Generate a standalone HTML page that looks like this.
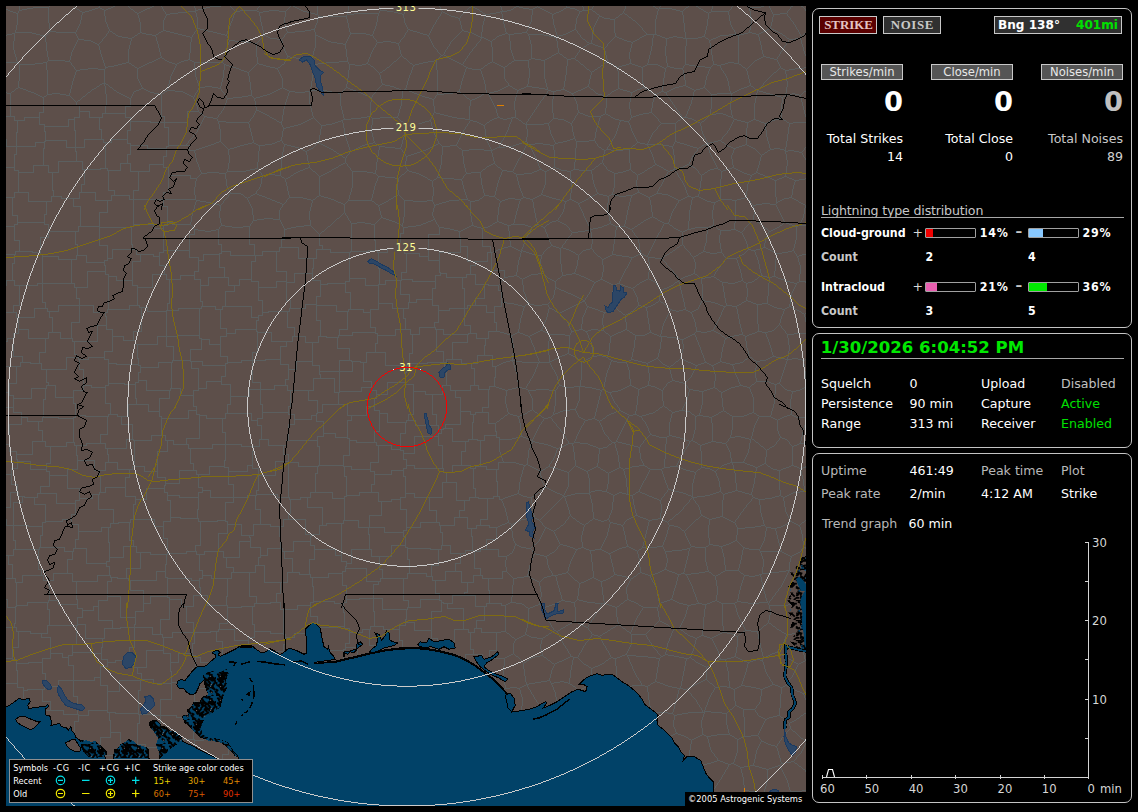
<!DOCTYPE html>
<html lang="en"><head><meta charset="utf-8"><title>Lightning Detector</title>
<style>
html,body{margin:0;padding:0;background:#000;}
body{width:1138px;height:812px;position:relative;overflow:hidden;font-family:'DejaVu Sans','Liberation Sans',sans-serif;}
.t{position:absolute;line-height:16px;white-space:nowrap;}
.pf{position:absolute;border:1px solid #c4c4c4;border-radius:7px;background:#000;}
.btn{position:absolute;border:1px solid #c8c8c8;}
.hl{position:absolute;height:1px;background:#a8a8a8;}
.bar{position:absolute;width:49px;height:8px;border:1px solid #a0a0a0;border-radius:1px;background:#000;}
.bar i{display:block;height:8px;}
#map{position:absolute;left:6px;top:6px;width:800px;height:800px;overflow:hidden;background:#5d4f4a;}
#map svg{position:absolute;left:0;top:0;}
</style></head>
<body>
<div id="map">
<svg width="800" height="800" viewBox="6 6 800 800">
<defs><pattern id="mp" width="24" height="24" patternUnits="userSpaceOnUse"><rect width="24" height="24" fill="#014268"/><path d="M7.8,3.6l-2,-2l2,-1M8.8,1.4l2.5,-1l-1.5,-1M10.4,1.7l-2,2.5l1,-1M19.8,3.0l-1.5,2.5l-1.5,2M14.1,1.2l-1.5,-2l2,-1M7.0,3.5l-2,2.5l1,2M19.6,4.3l2.5,2.5l2,-1M8.9,13.1l-2,2.5l-1.5,2M4.9,16.3l2,1l1,2M22.2,8.7l-1.5,-1l2,-1M2.0,7.2l2,1l2,1.5M6.9,23.5l-2,2.5l1,-1M18.2,3.6l2,2l-1.5,2M1.9,13.4l1.5,1l2,1.5M14.3,13.9l2,-2l-1.5,1.5M11.4,15.9l-2,1l2,2M23.8,19.7l1.5,2l2,1.5M0.5,11.1l-1.5,2.5l-1.5,1.5M1.4,18.4l-1.5,-1l1,1.5M22.0,11.9l-1.5,2l1,2M6.7,3.3l2,2.5l1,2M10.0,8.6l2,-1l-1.5,-1M4.2,5.6l-1.5,-2l1,2M4.4,6.8l-1.5,2l2,1.5M14.6,7.6l-1.5,2.5l2,2M16.2,1.3l2.5,2l1,1.5M9.5,11.6l2,-2l-1.5,-1M23.6,10.6l-2,1l2,-1M2.5,13.6l2.5,-2l1,2M0.6,21.0l2.5,2l-1.5,2M6.1,8.3l1.5,2l-1.5,-1M20.4,23.8l2,2l1,1.5M2.1,2.5l1.5,1l1,2M3.9,0.6l2.5,1l-1.5,2M13.0,0.6l2.5,1l2,-1M16.7,6.3l1.5,-1l1,-1M12.8,18.7l1.5,-1l2,-1M19.3,19.6l-1.5,-1l2,1.5M8.5,0.7l-2,1l1,1.5M4.6,14.5l1.5,2l2,1.5M22.9,8.8l-1.5,-2l-1.5,1.5M4.7,4.9l2.5,2.5l-1.5,1.5M21.8,8.3l-2,-2l1,2M18.0,11.5l-1.5,2l2,1.5M2.1,22.7l2,2l1,2M22.7,17.4l-1.5,-1l-1.5,-1M14.2,11.2l-1.5,2.5l2,1.5M15.8,8.4l2.5,2.5l-1.5,-1M0.3,23.3l-2,2.5l2,-1M10.4,20.9l-1.5,-2l1,-1M7.0,5.8l2.5,1l1,2M10.1,3.1l1.5,2l2,2" stroke="#000" stroke-width="2" fill="none" stroke-linecap="square"/><path d="M18.9,12.4h1M19.2,20.3h1M3.9,4.3h1M12.2,20.2h1M18.1,14.4h1M18.1,4.3h1M4.1,14.6h1" stroke="#7a6a64" stroke-width="1" fill="none"/></pattern><pattern id="mp2" width="20" height="20" patternUnits="userSpaceOnUse"><rect width="20" height="20" fill="#5d4f4a"/><path d="M2.4,1.2l3,-1l2,-2M5.0,5.5l-3,1l1,2M0.6,17.9l-3,0l1,2M19.5,12.1l-2,1l1,1.5M10.2,16.1l-2,1l2,1.5M18.5,17.9l-2,0l-2,1.5M2.4,8.8l-3,1l-2,1.5M1.5,13.4l-3,-1l2,2M13.2,2.9l-2,0l-2,2M19.1,8.0l3,-1l2,-2M3.2,8.6l3,0l1,-2M7.1,1.8l2,-1l1,2M9.2,14.1l3,0l2,2M5.9,19.2l-3,-1l-2,-2M5.3,0.8l-2,0l-2,1.5M17.0,13.5l2,0l-2,2M18.4,11.4l2,-1l1,-2M16.0,3.7l-3,0l-2,2M1.8,5.2l-2,-1l1,-2M9.1,6.8l3,0l2,-2M0.9,14.2l-3,-1l1,-2M3.6,18.6l2,1l-2,1.5M8.9,13.4l2,0l-2,1.5M0.7,0.4l-2,1l1,-2M18.7,2.1l3,1l1,2M16.7,7.9l2,1l-2,-2M6.9,16.6l-2,0l1,-2M16.7,0.3l2,0l-2,-2M1.7,16.8l2,1l-2,2M5.9,9.2l-2,0l1,-2" stroke="#000" stroke-width="1.8" fill="none" stroke-linecap="square"/><path d="M5.7,18.3h1.5M18.5,10.8h1.5M5.4,18.4h1.5M6.6,7.4h1.5M1.0,7.9h1.5M9.5,10.0h1.5M4.6,10.1h1.5M1.1,5.8h1.5M2.6,8.2h1.5" stroke="#0a5a8c" stroke-width="1.2" fill="none"/></pattern></defs>
<g fill="none" stroke="#5b5f5f" stroke-width="1" shape-rendering="crispEdges">
<path stroke-linecap="square" d="M221.5 251.5V244.5H218.5V229.5M221.5 251.5H230.5V255.5H254.5M254.5 255.5V244.5H249.5V226.5M198.5 260.5H203.5V254.5H219.5M198.5 260.5V271.5H194.5V275.5M194.5 275.5V279.5H200.5V285.5M200.5 285.5H208.5V277.5H224.5M219.5 254.5V267.5H224.5V277.5M194.5 229.5V234.5H189.5V250.5M189.5 250.5V257.5H198.5V260.5M221.5 251.5V253.5H219.5V254.5M169.5 279.5V303.5H167.5V310.5M169.5 279.5H180.5V275.5H194.5M167.5 310.5H178.5V308.5H199.5M200.5 285.5V301.5H202.5V306.5M199.5 308.5H201.5V306.5H202.5M131.5 227.5V244.5H132.5V249.5M131.5 227.5H123.5V227.5H99.5M99.5 227.5V245.5H107.5V258.5M107.5 258.5H112.5V249.5H132.5M71.5 259.5V274.5H71.5V283.5M71.5 259.5H76.5V255.5H77.5M77.5 255.5H86.5V262.5H104.5M105.5 271.5V265.5H104.5V262.5M105.5 271.5H87.5V287.5H76.5M76.5 287.5H74.5V283.5H71.5M99.5 226.5H91.5V226.5H80.5M99.5 226.5V226.5H99.5V227.5M77.5 255.5V244.5H75.5V231.5M104.5 262.5V260.5H107.5V258.5M75.5 231.5H78.5V226.5H80.5M71.5 259.5H58.5V256.5H42.5M42.5 256.5V254.5H40.5V252.5M40.5 252.5V237.5H48.5V231.5M75.5 231.5H55.5V231.5H48.5M40.5 252.5H32.5V251.5H19.5M19.5 251.5V240.5H14.5V226.5M14.5 226.5V224.5H17.5V222.5M17.5 222.5H36.5V222.5H44.5M48.5 231.5V224.5H44.5V222.5M12.5 197.5V215.5H17.5V222.5M12.5 197.5H14.5V192.5H18.5M44.5 222.5V214.5H46.5V201.5M18.5 192.5H28.5V201.5H46.5M73.5 198.5V206.5H80.5V226.5M73.5 198.5H61.5V196.5H53.5M53.5 196.5H51.5V201.5H46.5M18.5 172.5H33.5V165.5H43.5M18.5 172.5V170.5H14.5V167.5M16.5 146.5V154.5H14.5V167.5M16.5 146.5H35.5V142.5H44.5M44.5 142.5V148.5H43.5V165.5M18.5 192.5V178.5H18.5V172.5M53.5 196.5V190.5H52.5V172.5M52.5 172.5H48.5V165.5H43.5M39.5 819.5V810.5H49.5V792.5M80.5 815.5V806.5H69.5V795.5M69.5 795.5H56.5V792.5H49.5M377.5 665.5H357.5V647.5H345.5M377.5 665.5V664.5H379.5V662.5M379.5 662.5V645.5H369.5V629.5M369.5 629.5H362.5V632.5H349.5M349.5 632.5V643.5H345.5V647.5M99.5 226.5V212.5H107.5V200.5M73.5 198.5H79.5V192.5H81.5M107.5 200.5H95.5V192.5H81.5M133.5 199.5H129.5V195.5H114.5M133.5 199.5V211.5H133.5V224.5M133.5 224.5V226.5H131.5V227.5M107.5 200.5H111.5V195.5H114.5M133.5 199.5V190.5H138.5V171.5M133.5 199.5H154.5V199.5H163.5M163.5 199.5V192.5H168.5V175.5M138.5 171.5H149.5V164.5H163.5M168.5 175.5V167.5H163.5V164.5M190.5 224.5H172.5V222.5H167.5M195.5 199.5H187.5V199.5H163.5M163.5 199.5V206.5H167.5V222.5M163.5 228.5V244.5H163.5V250.5M163.5 228.5V225.5H167.5V222.5M189.5 250.5H175.5V250.5H163.5M196.5 178.5H190.5V175.5H168.5M163.5 199.5H163.5V199.5H163.5M133.5 199.5H133.5V199.5H133.5M133.5 224.5H153.5V228.5H163.5M166.5 311.5H147.5V307.5H141.5M166.5 311.5V324.5H166.5V336.5M166.5 336.5H157.5V344.5H137.5M137.5 344.5H135.5V340.5H133.5M141.5 307.5V331.5H133.5V340.5M108.5 363.5H116.5V364.5H138.5M108.5 363.5V359.5H104.5V357.5M104.5 357.5V351.5H112.5V336.5M138.5 364.5V358.5H137.5V344.5M112.5 336.5H123.5V340.5H133.5M234.5 285.5H228.5V277.5H224.5M234.5 285.5V291.5H225.5V306.5M202.5 306.5H215.5V309.5H220.5M225.5 306.5H222.5V309.5H220.5M12.5 197.5H5.5V200.5H-7.5M14.5 167.5H-1.5V165.5H-14.5M-11.5 227.5H3.5V226.5H14.5M163.5 250.5V252.5H159.5V256.5M132.5 249.5H136.5V254.5H140.5M159.5 256.5H153.5V254.5H140.5M169.5 279.5H166.5V274.5H164.5M159.5 256.5V265.5H164.5V274.5M12.5 280.5V263.5H14.5V254.5M12.5 280.5H6.5V285.5H-13.5M14.5 254.5H4.5V249.5H-13.5M19.5 251.5H15.5V254.5H14.5M19.5 285.5H37.5V283.5H42.5M19.5 285.5V305.5H13.5V312.5M45.5 308.5H34.5V317.5H18.5M45.5 308.5V302.5H42.5V283.5M42.5 283.5H42.5V283.5H42.5M13.5 312.5H16.5V317.5H18.5M42.5 256.5V275.5H42.5V283.5M12.5 280.5H14.5V285.5H19.5M-13.5 308.5H-4.5V312.5H13.5M76.5 287.5V298.5H79.5V305.5M71.5 283.5H62.5V283.5H42.5M79.5 305.5H58.5V311.5H49.5M49.5 311.5H47.5V308.5H45.5M13.5 338.5V333.5H18.5V329.5M13.5 338.5H7.5V341.5H-9.5M18.5 329.5V322.5H18.5V317.5M16.5 146.5H16.5V146.5H16.5M16.5 146.5H6.5V139.5H-9.5M74.5 119.5V130.5H75.5V147.5M74.5 119.5H68.5V126.5H44.5M75.5 147.5H66.5V140.5H45.5M44.5 126.5V131.5H45.5V140.5M143.5 603.5V590.5H130.5V580.5M143.5 603.5H150.5V596.5H167.5M130.5 580.5H156.5V571.5H165.5M167.5 596.5V584.5H167.5V578.5M165.5 571.5V577.5H167.5V578.5M166.5 554.5H150.5V552.5H140.5M166.5 554.5V564.5H165.5V571.5M130.5 580.5H128.5V578.5H126.5M126.5 578.5V568.5H140.5V552.5M347.5 311.5H336.5V305.5H316.5M347.5 311.5V329.5H339.5V335.5M320.5 336.5V320.5H316.5V305.5M320.5 336.5H326.5V337.5H337.5M337.5 337.5H338.5V335.5H339.5M316.5 688.5V693.5H311.5V711.5M316.5 688.5H303.5V685.5H285.5M311.5 711.5H291.5V712.5H285.5M285.5 685.5V705.5H285.5V712.5M476.5 628.5H474.5V632.5H470.5M476.5 628.5V620.5H484.5V606.5M484.5 606.5H475.5V595.5H464.5M447.5 603.5V608.5H463.5V629.5M447.5 603.5H452.5V595.5H464.5M470.5 632.5H468.5V629.5H463.5M343.5 650.5H324.5V652.5H319.5M343.5 650.5V663.5H342.5V684.5M322.5 682.5H327.5V684.5H342.5M322.5 682.5V673.5H312.5V662.5M312.5 662.5V658.5H319.5V652.5M440.5 273.5H446.5V277.5H462.5M440.5 273.5V275.5H435.5V281.5M435.5 281.5V288.5H432.5V299.5M432.5 299.5V305.5H438.5V310.5M438.5 310.5H449.5V308.5H464.5M462.5 277.5V288.5H464.5V308.5M52.5 172.5H58.5V161.5H76.5M81.5 192.5V184.5H84.5V169.5M84.5 169.5H82.5V161.5H76.5M44.5 142.5V141.5H45.5V140.5M75.5 147.5H75.5V147.5H75.5M76.5 161.5V151.5H75.5V147.5M99.5 117.5H89.5V111.5H79.5M99.5 117.5V129.5H101.5V139.5M79.5 111.5V117.5H74.5V119.5M75.5 147.5H84.5V139.5H101.5M221.5 381.5V376.5H225.5V365.5M221.5 381.5H206.5V388.5H198.5M225.5 365.5H202.5V361.5H191.5M198.5 388.5V368.5H191.5V361.5M108.5 276.5H116.5V280.5H132.5M108.5 276.5V284.5H108.5V309.5M108.5 309.5H129.5V305.5H137.5M137.5 305.5V291.5H137.5V287.5M137.5 287.5V285.5H132.5V280.5M105.5 271.5V274.5H108.5V276.5M140.5 254.5V261.5H132.5V280.5M79.5 305.5H79.5V305.5H79.5M79.5 305.5H93.5V312.5H105.5M105.5 312.5H107.5V309.5H108.5M141.5 307.5H139.5V305.5H137.5M105.5 312.5V316.5H106.5V325.5M106.5 325.5V329.5H112.5V336.5M167.5 310.5H166.5V311.5H166.5M164.5 274.5H152.5V287.5H137.5M320.5 336.5H318.5V342.5H312.5M312.5 342.5V347.5H312.5V361.5M312.5 361.5V365.5H319.5V371.5M337.5 337.5V348.5H349.5V360.5M349.5 360.5H339.5V371.5H319.5M308.5 390.5H313.5V378.5H320.5M308.5 390.5V400.5H317.5V412.5M338.5 392.5H334.5V378.5H320.5M338.5 392.5V394.5H338.5V404.5M338.5 404.5H322.5V412.5H317.5M290.5 390.5H287.5V385.5H285.5M290.5 390.5H301.5V390.5H308.5M312.5 361.5H296.5V369.5H288.5M319.5 371.5V374.5H320.5V378.5M288.5 369.5V379.5H285.5V385.5M163.5 164.5V156.5H166.5V148.5M194.5 150.5H189.5V145.5H185.5M185.5 145.5H181.5V145.5H168.5M168.5 145.5V146.5H166.5V148.5M168.5 145.5V127.5H164.5V122.5M198.5 111.5H187.5V122.5H164.5M39.5 117.5V112.5H43.5V97.5M39.5 117.5H24.5V120.5H17.5M17.5 120.5H14.5V116.5H10.5M10.5 116.5V99.5H10.5V93.5M79.5 111.5V105.5H76.5V102.5M44.5 126.5V124.5H39.5V117.5M16.5 146.5V132.5H17.5V120.5M-12.5 124.5H-2.5V116.5H10.5M155.5 798.5H144.5V794.5H138.5M155.5 798.5V805.5H163.5V821.5M127.5 820.5V800.5H138.5V794.5M316.5 688.5H317.5V682.5H322.5M342.5 684.5H343.5V685.5H343.5M311.5 711.5H311.5V711.5H311.5M343.5 685.5V690.5H342.5V708.5M311.5 711.5H319.5V708.5H342.5M285.5 712.5H285.5V712.5H285.5M285.5 712.5V726.5H284.5V733.5M311.5 711.5V717.5H318.5V732.5M318.5 732.5H316.5V741.5H308.5M308.5 741.5H298.5V733.5H284.5M231.5 820.5V805.5H222.5V793.5M250.5 816.5V801.5H252.5V796.5M252.5 796.5H229.5V793.5H222.5M18.5 329.5H28.5V338.5H45.5M49.5 311.5V317.5H52.5V332.5M52.5 332.5H48.5V338.5H45.5M79.5 305.5V322.5H71.5V338.5M52.5 332.5H60.5V338.5H71.5M104.5 357.5H88.5V359.5H79.5M106.5 325.5H97.5V341.5H74.5M79.5 359.5H78.5V357.5H76.5M76.5 357.5V354.5H74.5V341.5M71.5 338.5H72.5V341.5H74.5M69.5 795.5H70.5V792.5H72.5M49.5 792.5V791.5H48.5V790.5M48.5 790.5V777.5H48.5V772.5M77.5 755.5H71.5V772.5H48.5M77.5 755.5V759.5H82.5V767.5M72.5 792.5V785.5H82.5V767.5M135.5 617.5H120.5V596.5H107.5M135.5 617.5V624.5H134.5V627.5M134.5 627.5H120.5V628.5H112.5M112.5 628.5V620.5H98.5V606.5M107.5 596.5V600.5H98.5V606.5M143.5 603.5V611.5H135.5V617.5M126.5 578.5H117.5V577.5H111.5M107.5 596.5V581.5H111.5V577.5M-14.5 507.5H10.5V492.5H17.5M22.5 496.5H18.5V492.5H17.5M22.5 496.5V502.5H13.5V525.5M-14.5 519.5H6.5V525.5H13.5M379.5 662.5H395.5V650.5H402.5M369.5 629.5H370.5V626.5H374.5M374.5 626.5H383.5V629.5H399.5M399.5 629.5V640.5H402.5V650.5M458.5 663.5H439.5V655.5H433.5M458.5 663.5H465.5V654.5H473.5M473.5 654.5V649.5H470.5V632.5M463.5 629.5H454.5V641.5H437.5M437.5 641.5V649.5H433.5V655.5M458.5 682.5H446.5V696.5H441.5M458.5 682.5V673.5H458.5V663.5M441.5 696.5H438.5V686.5H430.5M430.5 686.5V678.5H430.5V657.5M433.5 655.5H432.5V657.5H430.5M345.5 568.5V566.5H346.5V563.5M345.5 568.5H366.5V581.5H378.5M346.5 563.5H351.5V549.5H369.5M369.5 549.5H371.5V556.5H379.5M379.5 556.5V569.5H382.5V578.5M378.5 581.5H380.5V578.5H382.5M313.5 601.5H334.5V603.5H343.5M313.5 601.5V586.5H312.5V577.5M312.5 577.5H328.5V573.5H342.5M342.5 573.5V585.5H346.5V599.5M346.5 599.5V602.5H343.5V603.5M373.5 598.5H373.5V598.5H373.5M373.5 598.5H359.5V599.5H346.5M345.5 568.5V571.5H342.5V573.5M373.5 598.5V584.5H378.5V581.5M344.5 626.5V612.5H343.5V603.5M344.5 626.5V628.5H349.5V632.5M373.5 598.5V611.5H374.5V626.5M255.5 495.5H256.5V494.5H256.5M255.5 495.5V509.5H260.5V524.5M256.5 494.5H277.5V497.5H288.5M260.5 524.5H270.5V526.5H279.5M288.5 497.5H289.5V499.5H290.5M290.5 499.5V513.5H288.5V519.5M288.5 519.5H283.5V526.5H279.5M309.5 574.5H310.5V577.5H312.5M309.5 574.5V559.5H314.5V549.5M346.5 563.5V561.5H341.5V555.5M341.5 555.5H335.5V549.5H314.5M284.5 551.5H282.5V548.5H280.5M284.5 551.5H293.5V541.5H310.5M280.5 548.5V536.5H279.5V526.5M288.5 519.5H305.5V534.5H311.5M311.5 534.5V536.5H310.5V541.5M292.5 572.5V558.5H284.5V551.5M292.5 572.5H299.5V574.5H309.5M314.5 549.5V545.5H310.5V541.5M234.5 285.5H239.5V279.5H251.5M254.5 255.5H254.5V255.5H255.5M251.5 279.5V261.5H255.5V255.5M452.5 359.5H461.5V363.5H471.5M452.5 359.5V342.5H467.5V334.5M467.5 334.5H468.5V333.5H470.5M470.5 333.5H476.5V338.5H485.5M471.5 363.5H477.5V355.5H484.5M484.5 355.5V345.5H485.5V338.5M494.5 386.5V377.5H495.5V366.5M452.5 359.5H446.5V362.5H444.5M471.5 363.5V368.5H474.5V385.5M446.5 385.5V371.5H444.5V362.5M446.5 385.5H450.5V390.5H455.5M455.5 390.5H470.5V385.5H474.5M494.5 386.5H489.5V389.5H488.5M484.5 355.5H492.5V366.5H495.5M488.5 389.5H478.5V385.5H474.5M443.5 362.5H427.5V363.5H409.5M443.5 362.5V351.5H436.5V329.5M409.5 363.5V353.5H412.5V334.5M412.5 334.5H419.5V327.5H434.5M436.5 329.5H435.5V327.5H434.5M467.5 334.5H443.5V329.5H436.5M444.5 362.5H443.5V362.5H443.5M405.5 329.5H410.5V334.5H412.5M405.5 329.5H395.5V335.5H377.5M375.5 352.5V343.5H377.5V335.5M375.5 352.5H385.5V365.5H406.5M406.5 365.5H407.5V363.5H409.5M403.5 308.5V318.5H405.5V329.5M403.5 308.5H408.5V302.5H409.5M432.5 299.5H416.5V302.5H409.5M438.5 310.5V322.5H434.5V327.5M470.5 333.5V325.5H464.5V308.5M464.5 308.5H464.5V308.5H464.5M473.5 468.5V488.5H475.5V497.5M473.5 468.5H470.5V465.5H461.5M475.5 497.5H469.5V500.5H464.5M461.5 465.5H452.5V472.5H446.5M446.5 472.5V477.5H446.5V482.5M464.5 500.5H456.5V482.5H446.5M219.5 629.5H218.5V631.5H216.5M219.5 629.5H234.5V640.5H248.5M248.5 640.5V649.5H251.5V653.5M216.5 631.5V641.5H222.5V657.5M251.5 653.5H245.5V657.5H222.5M317.5 627.5V616.5H310.5V605.5M317.5 627.5V628.5H313.5V633.5M313.5 633.5H294.5V637.5H285.5M310.5 605.5H297.5V609.5H283.5M283.5 609.5V626.5H283.5V633.5M283.5 633.5V634.5H285.5V637.5M344.5 626.5H338.5V627.5H317.5M313.5 601.5V602.5H310.5V605.5M343.5 650.5V649.5H345.5V647.5M319.5 652.5V639.5H313.5V633.5M281.5 247.5V239.5H284.5V229.5M281.5 247.5H279.5V251.5H276.5M255.5 255.5H262.5V251.5H276.5M105.5 142.5V153.5H105.5V168.5M105.5 142.5H111.5V139.5H127.5M127.5 139.5V143.5H130.5V145.5M130.5 145.5V154.5H127.5V163.5M127.5 163.5H120.5V170.5H108.5M108.5 170.5H107.5V168.5H105.5M84.5 169.5H100.5V168.5H105.5M101.5 139.5H103.5V142.5H105.5M166.5 148.5H147.5V145.5H130.5M164.5 122.5H164.5V122.5H164.5M130.5 121.5H150.5V122.5H164.5M130.5 121.5V130.5H127.5V139.5M138.5 171.5H130.5V163.5H127.5M114.5 195.5V190.5H108.5V170.5M190.5 360.5H177.5V360.5H173.5M190.5 360.5V349.5H201.5V339.5M199.5 335.5V338.5H201.5V339.5M199.5 335.5H177.5V336.5H166.5M166.5 336.5V346.5H173.5V360.5M199.5 308.5V316.5H199.5V335.5M166.5 336.5H166.5V336.5H166.5M140.5 367.5H158.5V362.5H171.5M140.5 367.5V372.5H138.5V380.5M138.5 380.5H146.5V390.5H169.5M171.5 362.5V382.5H171.5V388.5M171.5 388.5H170.5V390.5H169.5M138.5 364.5V365.5H140.5V367.5M173.5 360.5H172.5V362.5H171.5M108.5 383.5H124.5V384.5H135.5M108.5 383.5V371.5H108.5V363.5M135.5 384.5V382.5H138.5V380.5M135.5 384.5V398.5H136.5V404.5M159.5 411.5H148.5V404.5H136.5M159.5 411.5V398.5H169.5V390.5M193.5 395.5V390.5H198.5V388.5M193.5 395.5H180.5V388.5H171.5M191.5 361.5H190.5V360.5H190.5M290.5 390.5V406.5H288.5V412.5M285.5 385.5H274.5V389.5H260.5M260.5 389.5V404.5H262.5V412.5M288.5 412.5H277.5V412.5H262.5M317.5 412.5V413.5H316.5V415.5M316.5 415.5H311.5V419.5H294.5M288.5 412.5V414.5H294.5V419.5M317.5 440.5H300.5V440.5H288.5M317.5 440.5V436.5H323.5V433.5M323.5 433.5V421.5H316.5V415.5M294.5 419.5V424.5H288.5V440.5M227.5 413.5V404.5H230.5V396.5M227.5 413.5H251.5V420.5H257.5M230.5 396.5H249.5V389.5H260.5M260.5 389.5H260.5V389.5H260.5M257.5 420.5V418.5H262.5V412.5M371.5 387.5H361.5V391.5H339.5M371.5 387.5V381.5H363.5V362.5M339.5 391.5V371.5H352.5V361.5M363.5 362.5H360.5V361.5H352.5M375.5 352.5H366.5V362.5H363.5M376.5 394.5H387.5V382.5H405.5M376.5 394.5V390.5H371.5V387.5M406.5 365.5V372.5H405.5V382.5M338.5 392.5H339.5V391.5H339.5M349.5 360.5H351.5V361.5H352.5M375.5 332.5H352.5V335.5H339.5M375.5 332.5V333.5H377.5V335.5M221.5 381.5V384.5H230.5V396.5M225.5 365.5V363.5H227.5V362.5M260.5 389.5V382.5H252.5V360.5M252.5 360.5H241.5V362.5H227.5M201.5 339.5H209.5V344.5H220.5M227.5 362.5V356.5H220.5V344.5M225.5 306.5H251.5V317.5H258.5M220.5 309.5V328.5H226.5V333.5M258.5 317.5V320.5H256.5V329.5M256.5 329.5H235.5V333.5H226.5M220.5 344.5V336.5H226.5V333.5M161.5 94.5V116.5H164.5V122.5M105.5 113.5H120.5V113.5H125.5M125.5 113.5V106.5H130.5V98.5M99.5 117.5H102.5V113.5H105.5M130.5 121.5V117.5H125.5V113.5M398.5 818.5V815.5H404.5V807.5M430.5 825.5H419.5V807.5H404.5M471.5 686.5V696.5H478.5V710.5M471.5 686.5H462.5V682.5H458.5M441.5 696.5V703.5H443.5V709.5M443.5 709.5H446.5V713.5H457.5M457.5 713.5H468.5V710.5H478.5M491.5 710.5H487.5V712.5H484.5M491.5 710.5H500.5V721.5H508.5M491.5 745.5H485.5V738.5H482.5M484.5 712.5V725.5H482.5V738.5M430.5 686.5H424.5V690.5H407.5M407.5 653.5H413.5V657.5H430.5M407.5 653.5V662.5H405.5V687.5M405.5 687.5V688.5H407.5V690.5M377.5 665.5V669.5H375.5V679.5M402.5 650.5H406.5V653.5H407.5M405.5 687.5H385.5V679.5H375.5M343.5 685.5H361.5V682.5H372.5M375.5 679.5H374.5V682.5H372.5M365.5 817.5V805.5H373.5V793.5M404.5 804.5V806.5H404.5V807.5M404.5 804.5V799.5H398.5V796.5M398.5 796.5H380.5V793.5H373.5M433.5 721.5H417.5V713.5H404.5M433.5 721.5V726.5H432.5V736.5M432.5 736.5H422.5V745.5H407.5M407.5 745.5H400.5V737.5H394.5M394.5 737.5V728.5H404.5V713.5M407.5 690.5V700.5H403.5V709.5M372.5 682.5V695.5H376.5V706.5M376.5 706.5H386.5V709.5H403.5M443.5 709.5V718.5H433.5V721.5M404.5 713.5V710.5H403.5V709.5M308.5 741.5V755.5H309.5V765.5M284.5 733.5V738.5H279.5V740.5M279.5 740.5V758.5H290.5V767.5M290.5 767.5H295.5V765.5H309.5M219.5 629.5V623.5H227.5V607.5M248.5 640.5V637.5H254.5V631.5M254.5 631.5V624.5H252.5V606.5M227.5 607.5H241.5V606.5H252.5M193.5 395.5V406.5H196.5V410.5M159.5 411.5V416.5H161.5V418.5M161.5 418.5H188.5V410.5H196.5M45.5 338.5V352.5H39.5V363.5M76.5 357.5H66.5V369.5H46.5M39.5 363.5H41.5V369.5H46.5M13.5 338.5V356.5H22.5V362.5M39.5 363.5H30.5V362.5H22.5M17.5 492.5V484.5H11.5V474.5M-13.5 474.5H-8.5V474.5H11.5M167.5 596.5V597.5H169.5V599.5M134.5 627.5H134.5V627.5H134.5M169.5 599.5V619.5H160.5V634.5M134.5 627.5H152.5V634.5H160.5M155.5 798.5H158.5V793.5H160.5M138.5 794.5V792.5H134.5V789.5M160.5 793.5V784.5H164.5V769.5M164.5 769.5H143.5V770.5H137.5M137.5 770.5V780.5H134.5V789.5M105.5 812.5V801.5H108.5V790.5M134.5 789.5H125.5V790.5H108.5M72.5 792.5H90.5V789.5H107.5M82.5 767.5H88.5V775.5H104.5M104.5 775.5V783.5H107.5V789.5M108.5 790.5H108.5V789.5H107.5M-12.5 767.5H0.5V768.5H10.5M-16.5 799.5H7.5V790.5H15.5M10.5 768.5V779.5H17.5V785.5M15.5 790.5V787.5H17.5V785.5M15.5 819.5V804.5H15.5V790.5M48.5 790.5H27.5V785.5H17.5M48.5 772.5V767.5H41.5V761.5M41.5 761.5H18.5V767.5H11.5M11.5 767.5H11.5V768.5H10.5M42.5 741.5V756.5H41.5V761.5M42.5 741.5H41.5V739.5H39.5M11.5 767.5V754.5H15.5V742.5M39.5 739.5H23.5V742.5H15.5M112.5 628.5H104.5V638.5H102.5M102.5 638.5H85.5V624.5H77.5M98.5 606.5H93.5V610.5H82.5M77.5 624.5V617.5H82.5V610.5M190.5 717.5V722.5H193.5V739.5M190.5 717.5H176.5V715.5H160.5M193.5 739.5H183.5V746.5H167.5M167.5 746.5V729.5H160.5V715.5M42.5 741.5H58.5V739.5H74.5M77.5 755.5V748.5H77.5V745.5M74.5 739.5V741.5H77.5V745.5M230.5 715.5V726.5H226.5V735.5M230.5 715.5H211.5V705.5H197.5M197.5 705.5V711.5H190.5V717.5M193.5 739.5H194.5V740.5H194.5M226.5 735.5H203.5V740.5H194.5M106.5 563.5V566.5H109.5V575.5M106.5 563.5H86.5V548.5H75.5M109.5 575.5H97.5V581.5H76.5M75.5 548.5H73.5V551.5H72.5M72.5 551.5V559.5H67.5V573.5M67.5 573.5H72.5V581.5H76.5M140.5 552.5H136.5V546.5H133.5M109.5 557.5H123.5V546.5H133.5M109.5 557.5V561.5H106.5V563.5M111.5 577.5H110.5V575.5H109.5M78.5 531.5V539.5H75.5V548.5M78.5 531.5H101.5V527.5H108.5M109.5 557.5V542.5H108.5V527.5M82.5 610.5V608.5H77.5V604.5M77.5 604.5V599.5H76.5V581.5M48.5 580.5H53.5V573.5H67.5M48.5 580.5V585.5H49.5V600.5M49.5 600.5H58.5V604.5H77.5M48.5 580.5H43.5V575.5H41.5M49.5 600.5H48.5V602.5H47.5M47.5 602.5H27.5V605.5H16.5M41.5 575.5H22.5V582.5H16.5M16.5 582.5V591.5H16.5V605.5M-17.5 550.5H0.5V555.5H8.5M8.5 555.5V564.5H12.5V578.5M12.5 578.5H-2.5V584.5H-16.5M405.5 622.5H414.5V630.5H431.5M405.5 622.5V619.5H406.5V609.5M408.5 607.5H407.5V609.5H406.5M408.5 607.5H420.5V599.5H439.5M431.5 630.5V611.5H441.5V602.5M439.5 599.5V600.5H441.5V602.5M399.5 629.5V625.5H405.5V622.5M437.5 641.5V638.5H431.5V630.5M373.5 598.5H382.5V609.5H406.5M403.5 578.5H397.5V578.5H382.5M403.5 578.5V600.5H408.5V607.5M447.5 603.5H443.5V602.5H441.5M322.5 525.5H326.5V523.5H341.5M322.5 525.5V507.5H307.5V497.5M344.5 498.5V503.5H344.5V520.5M344.5 498.5H332.5V492.5H315.5M344.5 520.5H343.5V523.5H341.5M315.5 492.5H310.5V497.5H307.5M341.5 555.5V548.5H341.5V523.5M311.5 534.5H319.5V525.5H322.5M290.5 499.5H300.5V497.5H307.5M368.5 527.5H358.5V520.5H344.5M368.5 527.5H369.5V527.5H369.5M369.5 527.5V515.5H381.5V501.5M381.5 501.5H378.5V492.5H371.5M371.5 492.5H359.5V495.5H346.5M346.5 495.5V496.5H344.5V498.5M319.5 465.5H318.5V466.5H317.5M319.5 465.5H333.5V465.5H343.5M343.5 465.5H343.5V466.5H344.5M317.5 466.5V473.5H315.5V492.5M346.5 495.5V476.5H344.5V466.5M368.5 527.5V534.5H369.5V549.5M317.5 466.5H298.5V462.5H288.5M288.5 462.5V471.5H288.5V497.5M491.5 745.5V763.5H494.5V769.5M490.5 818.5V806.5H491.5V796.5M467.5 818.5V804.5H467.5V791.5M467.5 791.5H478.5V787.5H484.5M484.5 787.5V789.5H491.5V796.5M494.5 769.5H492.5V770.5H491.5M491.5 770.5V781.5H484.5V787.5M462.5 277.5H466.5V274.5H470.5M475.5 305.5H467.5V308.5H464.5M475.5 305.5V298.5H484.5V284.5M484.5 284.5H475.5V274.5H470.5M440.5 273.5V272.5H439.5V271.5M439.5 271.5V252.5H460.5V246.5M460.5 246.5H467.5V261.5H475.5M475.5 261.5V265.5H470.5V274.5M485.5 338.5H488.5V331.5H496.5M475.5 305.5H486.5V312.5H494.5M496.5 331.5V322.5H494.5V312.5M498.5 285.5H488.5V284.5H484.5M498.5 285.5V290.5H501.5V302.5M494.5 312.5V306.5H501.5V302.5M473.5 468.5H475.5V466.5H480.5M487.5 498.5H478.5V497.5H475.5M487.5 498.5H493.5V496.5H497.5M480.5 466.5H486.5V469.5H496.5M496.5 469.5V481.5H497.5V496.5M471.5 686.5H480.5V677.5H485.5M491.5 710.5V704.5H501.5V690.5M478.5 710.5H479.5V712.5H484.5M501.5 690.5H495.5V677.5H485.5M473.5 654.5H482.5V660.5H484.5M485.5 677.5V665.5H484.5V660.5M489.5 658.5H493.5V658.5H504.5M489.5 658.5V650.5H496.5V632.5M484.5 660.5H487.5V658.5H489.5M476.5 628.5H481.5V632.5H496.5M505.5 605.5H501.5V603.5H489.5M489.5 603.5H486.5V606.5H484.5M290.5 308.5V300.5H286.5V282.5M290.5 308.5H289.5V311.5H287.5M287.5 311.5H268.5V312.5H262.5M286.5 282.5V282.5H286.5V281.5M286.5 281.5H276.5V287.5H258.5M262.5 312.5V300.5H258.5V287.5M316.5 304.5H305.5V308.5H290.5M316.5 304.5V296.5H320.5V284.5M312.5 273.5V280.5H320.5V284.5M312.5 273.5H294.5V282.5H286.5M312.5 342.5H305.5V336.5H294.5M316.5 305.5V304.5H316.5V304.5M294.5 336.5V327.5H287.5V311.5M312.5 273.5V268.5H313.5V258.5M281.5 247.5H298.5V258.5H313.5M276.5 251.5V271.5H286.5V281.5M251.5 279.5V281.5H258.5V287.5M258.5 317.5V315.5H262.5V312.5M436.5 425.5H415.5V420.5H408.5M436.5 425.5V414.5H432.5V394.5M408.5 420.5V414.5H413.5V391.5M432.5 394.5H425.5V391.5H413.5M405.5 382.5V384.5H413.5V391.5M446.5 385.5H442.5V394.5H432.5M374.5 442.5V431.5H379.5V413.5M374.5 442.5H356.5V440.5H349.5M349.5 440.5V438.5H347.5V437.5M347.5 437.5V420.5H351.5V415.5M351.5 415.5H366.5V406.5H374.5M374.5 406.5V410.5H379.5V413.5M319.5 465.5V446.5H317.5V440.5M343.5 465.5V455.5H349.5V440.5M323.5 433.5H335.5V437.5H347.5M338.5 404.5H347.5V415.5H351.5M376.5 394.5V398.5H374.5V406.5M405.5 422.5H387.5V413.5H379.5M405.5 422.5H406.5V420.5H408.5M378.5 445.5H391.5V449.5H400.5M378.5 445.5V462.5H370.5V469.5M374.5 474.5V471.5H370.5V469.5M374.5 474.5H391.5V470.5H403.5M406.5 465.5V468.5H403.5V470.5M406.5 465.5V459.5H403.5V453.5M403.5 453.5V450.5H400.5V449.5M405.5 422.5V433.5H400.5V449.5M374.5 442.5H376.5V445.5H378.5M344.5 466.5H351.5V469.5H370.5M371.5 492.5V484.5H374.5V474.5M442.5 468.5V445.5H438.5V436.5M442.5 468.5H414.5V465.5H406.5M438.5 436.5H414.5V453.5H403.5M438.5 436.5V433.5H441.5V429.5M441.5 429.5H438.5V425.5H436.5M442.5 468.5H443.5V472.5H446.5M446.5 482.5H442.5V497.5H429.5M403.5 470.5V476.5H405.5V493.5M429.5 497.5H414.5V493.5H405.5M381.5 501.5H391.5V499.5H400.5M405.5 493.5V497.5H400.5V499.5M194.5 688.5H214.5V676.5H221.5M194.5 688.5V701.5H197.5V705.5M230.5 715.5H231.5V712.5H233.5M221.5 676.5H228.5V682.5H231.5M231.5 682.5V692.5H233.5V712.5M260.5 744.5H274.5V740.5H279.5M260.5 744.5V719.5H253.5V712.5M285.5 712.5H272.5V711.5H255.5M253.5 712.5H255.5V711.5H255.5M251.5 653.5V661.5H250.5V676.5M251.5 653.5H276.5V651.5H283.5M281.5 679.5H276.5V681.5H259.5M281.5 679.5V669.5H287.5V660.5M259.5 681.5H253.5V676.5H250.5M287.5 660.5V657.5H283.5V651.5M221.5 676.5V669.5H220.5V662.5M251.5 653.5H251.5V653.5H251.5M222.5 657.5V660.5H220.5V662.5M231.5 682.5H246.5V676.5H250.5M254.5 631.5H270.5V633.5H283.5M285.5 637.5V644.5H283.5V651.5M285.5 685.5V681.5H281.5V679.5M255.5 711.5V700.5H259.5V681.5M312.5 662.5H306.5V660.5H287.5M233.5 712.5H242.5V712.5H253.5M489.5 603.5V590.5H488.5V578.5M506.5 571.5H502.5V578.5H488.5M464.5 595.5V592.5H467.5V582.5M467.5 582.5H473.5V575.5H480.5M488.5 578.5H482.5V575.5H480.5M487.5 498.5V519.5H480.5V525.5M464.5 500.5V510.5H459.5V517.5M480.5 525.5H476.5V528.5H471.5M459.5 517.5H467.5V528.5H471.5M313.5 258.5H316.5V249.5H322.5M322.5 249.5V245.5H319.5V234.5M288.5 461.5V454.5H283.5V445.5M288.5 461.5H275.5V475.5H258.5M283.5 445.5H268.5V439.5H261.5M258.5 475.5V468.5H252.5V465.5M252.5 465.5V451.5H253.5V446.5M253.5 446.5H259.5V439.5H261.5M288.5 462.5V462.5H288.5V461.5M288.5 440.5H286.5V445.5H283.5M256.5 494.5V490.5H258.5V475.5M257.5 420.5V425.5H261.5V439.5M252.5 360.5V352.5H257.5V332.5M252.5 360.5H265.5V359.5H280.5M257.5 332.5H271.5V341.5H286.5M280.5 359.5V346.5H286.5V341.5M252.5 360.5H252.5V360.5H252.5M256.5 329.5V331.5H257.5V332.5M288.5 369.5V364.5H280.5V359.5M294.5 336.5H292.5V341.5H286.5M457.5 713.5V724.5H465.5V743.5M432.5 736.5V740.5H439.5V745.5M439.5 745.5H457.5V743.5H465.5M482.5 738.5H471.5V744.5H467.5M491.5 770.5H485.5V762.5H468.5M468.5 762.5V754.5H467.5V744.5M467.5 744.5H466.5V743.5H465.5M284.5 815.5V811.5H280.5V799.5M280.5 799.5V797.5H284.5V790.5M284.5 790.5H308.5V794.5H317.5M307.5 818.5V810.5H317.5V794.5M252.5 796.5H252.5V795.5H253.5M253.5 795.5H267.5V799.5H280.5M167.5 578.5H191.5V580.5H199.5M169.5 599.5H181.5V606.5H186.5M186.5 606.5H193.5V595.5H200.5M200.5 595.5V587.5H199.5V580.5M276.5 602.5H270.5V603.5H256.5M276.5 602.5V593.5H280.5V582.5M256.5 603.5V596.5H249.5V572.5M280.5 582.5H264.5V565.5H258.5M258.5 565.5H255.5V572.5H249.5M283.5 609.5H280.5V602.5H276.5M252.5 606.5H254.5V603.5H256.5M292.5 572.5H287.5V582.5H280.5M280.5 548.5H267.5V555.5H260.5M260.5 555.5V557.5H258.5V565.5M73.5 397.5V403.5H75.5V415.5M73.5 397.5V390.5H83.5V385.5M75.5 415.5H85.5V416.5H107.5M83.5 385.5H91.5V387.5H105.5M105.5 387.5V403.5H110.5V414.5M110.5 414.5H108.5V416.5H107.5M79.5 359.5V369.5H83.5V385.5M48.5 385.5V382.5H46.5V369.5M48.5 385.5H55.5V397.5H73.5M73.5 418.5V417.5H75.5V415.5M73.5 418.5V425.5H73.5V442.5M100.5 443.5H86.5V445.5H76.5M100.5 443.5V434.5H107.5V416.5M73.5 442.5H74.5V445.5H76.5M108.5 383.5V385.5H105.5V387.5M121.5 416.5H128.5V404.5H136.5M121.5 416.5H117.5V414.5H110.5M16.5 366.5V383.5H9.5V392.5M16.5 366.5H-7.5V360.5H-15.5M9.5 392.5H-6.5V387.5H-12.5M22.5 362.5H20.5V366.5H16.5M45.5 388.5H31.5V398.5H13.5M45.5 388.5V399.5H43.5V417.5M38.5 421.5H27.5V417.5H21.5M38.5 421.5H42.5V417.5H43.5M21.5 417.5V412.5H13.5V407.5M13.5 407.5V401.5H13.5V398.5M48.5 385.5H46.5V388.5H45.5M9.5 392.5V395.5H13.5V398.5M73.5 418.5H58.5V417.5H43.5M-16.5 422.5H-8.5V407.5H13.5M-13.5 440.5H-4.5V444.5H9.5M9.5 444.5V424.5H21.5V417.5M46.5 469.5V463.5H50.5V446.5M46.5 469.5H30.5V461.5H17.5M16.5 454.5V459.5H17.5V461.5M16.5 454.5H32.5V441.5H42.5M42.5 441.5H45.5V446.5H50.5M9.5 444.5V451.5H16.5V454.5M11.5 474.5V468.5H17.5V461.5M38.5 421.5V430.5H42.5V441.5M73.5 442.5H66.5V446.5H50.5M49.5 475.5H62.5V475.5H67.5M49.5 475.5V486.5H40.5V493.5M40.5 493.5H56.5V503.5H75.5M67.5 475.5V488.5H79.5V498.5M79.5 498.5V500.5H75.5V503.5M77.5 460.5V455.5H76.5V445.5M77.5 460.5V469.5H67.5V475.5M46.5 469.5V471.5H49.5V475.5M22.5 496.5H24.5V497.5H34.5M34.5 497.5H37.5V493.5H40.5M45.5 521.5H62.5V519.5H71.5M45.5 521.5V504.5H34.5V497.5M71.5 519.5V514.5H75.5V503.5M186.5 606.5V622.5H193.5V632.5M160.5 634.5H162.5V637.5H163.5M163.5 637.5H172.5V632.5H193.5M216.5 631.5H210.5V632.5H194.5M227.5 607.5V605.5H226.5V605.5M200.5 595.5H207.5V605.5H226.5M193.5 632.5H193.5V632.5H194.5M134.5 627.5V647.5H129.5V660.5M129.5 660.5H133.5V667.5H137.5M163.5 637.5V641.5H163.5V650.5M137.5 667.5H146.5V650.5H163.5M15.5 742.5H11.5V735.5H7.5M7.5 735.5H-3.5V738.5H-11.5M47.5 602.5V609.5H49.5V625.5M77.5 624.5H77.5V625.5H76.5M49.5 625.5H68.5V625.5H76.5M104.5 775.5V768.5H114.5V762.5M77.5 745.5H94.5V745.5H100.5M100.5 745.5V755.5H114.5V762.5M137.5 770.5V761.5H129.5V758.5M114.5 762.5H124.5V758.5H129.5M260.5 744.5V747.5H256.5V749.5M226.5 735.5V737.5H228.5V738.5M228.5 738.5H242.5V749.5H256.5M290.5 767.5V772.5H283.5V775.5M283.5 775.5H277.5V769.5H255.5M256.5 749.5V755.5H255.5V769.5M253.5 795.5V775.5H255.5V769.5M283.5 775.5V784.5H284.5V790.5M255.5 769.5H255.5V769.5H255.5M189.5 776.5V784.5H192.5V793.5M189.5 776.5V768.5H200.5V763.5M200.5 763.5H207.5V766.5H222.5M197.5 799.5H205.5V793.5H221.5M197.5 799.5V795.5H192.5V793.5M221.5 793.5V783.5H225.5V771.5M225.5 771.5V768.5H222.5V766.5M160.5 793.5H176.5V793.5H192.5M164.5 769.5H165.5V768.5H166.5M166.5 768.5H176.5V776.5H189.5M166.5 768.5V763.5H166.5V747.5M166.5 747.5H167.5V746.5H167.5M194.5 740.5V758.5H200.5V763.5M228.5 738.5V754.5H222.5V766.5M192.5 818.5V806.5H197.5V799.5M222.5 793.5H221.5V793.5H221.5M255.5 769.5H243.5V771.5H225.5M13.5 525.5V540.5H15.5V549.5M13.5 525.5H28.5V526.5H42.5M15.5 549.5H32.5V549.5H38.5M42.5 526.5V535.5H40.5V547.5M40.5 547.5H39.5V549.5H38.5M13.5 525.5H13.5V525.5H13.5M8.5 555.5H13.5V549.5H15.5M45.5 521.5V522.5H42.5V526.5M41.5 575.5V569.5H38.5V549.5M16.5 582.5H15.5V578.5H12.5M78.5 531.5V524.5H71.5V519.5M72.5 551.5H64.5V547.5H40.5M16.5 605.5V606.5H15.5V607.5M15.5 607.5H7.5V599.5H-18.5M15.5 607.5V623.5H14.5V627.5M14.5 627.5H-3.5V630.5H-16.5M460.5 246.5V237.5H459.5V231.5M475.5 261.5H487.5V252.5H490.5M490.5 252.5V246.5H482.5V228.5M504.5 277.5V270.5H491.5V252.5M490.5 252.5H490.5V252.5H491.5M499.5 439.5V437.5H496.5V435.5M495.5 423.5V431.5H496.5V435.5M488.5 389.5V407.5H482.5V412.5M495.5 423.5H488.5V412.5H482.5M480.5 466.5V458.5H480.5V440.5M503.5 462.5H498.5V469.5H496.5M496.5 435.5H484.5V440.5H480.5M345.5 283.5V281.5H349.5V278.5M345.5 283.5V292.5H350.5V309.5M349.5 278.5H365.5V285.5H378.5M350.5 309.5H363.5V312.5H370.5M378.5 285.5V291.5H378.5V303.5M378.5 303.5V309.5H370.5V312.5M320.5 284.5H327.5V283.5H345.5M322.5 249.5H330.5V252.5H349.5M349.5 252.5V271.5H349.5V278.5M347.5 311.5H348.5V309.5H350.5M375.5 332.5V327.5H370.5V312.5M403.5 308.5H392.5V303.5H378.5M409.5 302.5V294.5H400.5V280.5M378.5 285.5H378.5V284.5H379.5M379.5 284.5H385.5V280.5H400.5M435.5 281.5H412.5V279.5H401.5M400.5 280.5H401.5V279.5H401.5M467.5 582.5H461.5V571.5H455.5M474.5 551.5V568.5H480.5V575.5M474.5 551.5H473.5V550.5H472.5M472.5 550.5H465.5V553.5H460.5M455.5 571.5V563.5H460.5V553.5M439.5 599.5V593.5H435.5V580.5M455.5 571.5H445.5V580.5H435.5M403.5 578.5H407.5V573.5H409.5M409.5 573.5H426.5V576.5H431.5M435.5 580.5H432.5V576.5H431.5M506.5 556.5H498.5V549.5H486.5M486.5 549.5V539.5H496.5V527.5M474.5 551.5H480.5V549.5H486.5M480.5 525.5H489.5V527.5H496.5M472.5 550.5V536.5H471.5V528.5M501.5 499.5H499.5V496.5H497.5M438.5 549.5H441.5V545.5H442.5M438.5 549.5H430.5V548.5H407.5M442.5 545.5V532.5H440.5V525.5M436.5 522.5H420.5V527.5H406.5M436.5 522.5H439.5V525.5H440.5M405.5 545.5V547.5H407.5V548.5M405.5 545.5V536.5H403.5V532.5M403.5 532.5V530.5H406.5V527.5M431.5 576.5V565.5H438.5V549.5M460.5 553.5H450.5V545.5H442.5M409.5 573.5V559.5H407.5V548.5M459.5 517.5H454.5V525.5H440.5M429.5 497.5V510.5H436.5V522.5M400.5 499.5V509.5H406.5V527.5M379.5 556.5H391.5V545.5H405.5M369.5 527.5H384.5V532.5H403.5M428.5 772.5V769.5H438.5V761.5M428.5 772.5V776.5H435.5V791.5M438.5 761.5H452.5V770.5H459.5M435.5 791.5H437.5V793.5H438.5M438.5 793.5H455.5V787.5H460.5M460.5 787.5V776.5H459.5V770.5M411.5 769.5V763.5H407.5V745.5M411.5 769.5H420.5V772.5H428.5M439.5 745.5V749.5H438.5V761.5M404.5 804.5H421.5V791.5H435.5M411.5 769.5H409.5V774.5H404.5M398.5 796.5V785.5H404.5V774.5M468.5 762.5H466.5V770.5H459.5M441.5 814.5V802.5H438.5V793.5M467.5 791.5H462.5V787.5H460.5M382.5 740.5V729.5H371.5V714.5M382.5 740.5V742.5H377.5V746.5M377.5 746.5H358.5V740.5H343.5M371.5 714.5H354.5V717.5H347.5M347.5 717.5V730.5H341.5V736.5M341.5 736.5V738.5H343.5V740.5M394.5 737.5H387.5V740.5H382.5M376.5 706.5V708.5H371.5V714.5M404.5 774.5H395.5V762.5H377.5M377.5 762.5V757.5H377.5V746.5M342.5 708.5V714.5H347.5V717.5M318.5 732.5H334.5V736.5H341.5M309.5 765.5H310.5V767.5H313.5M343.5 740.5V744.5H340.5V755.5M340.5 755.5H319.5V767.5H313.5M317.5 794.5V792.5H320.5V790.5M313.5 767.5V785.5H320.5V790.5M343.5 814.5V804.5H335.5V794.5M335.5 794.5H332.5V790.5H320.5M371.5 791.5V771.5H376.5V763.5M371.5 791.5H363.5V785.5H347.5M376.5 763.5H358.5V767.5H347.5M347.5 785.5V773.5H347.5V767.5M373.5 793.5H372.5V791.5H371.5M377.5 762.5H377.5V763.5H376.5M335.5 794.5H339.5V785.5H347.5M340.5 755.5V760.5H347.5V767.5M166.5 554.5H167.5V553.5H167.5M199.5 580.5V578.5H202.5V575.5M167.5 553.5H186.5V551.5H195.5M195.5 551.5H196.5V554.5H199.5M199.5 554.5V570.5H202.5V575.5M226.5 605.5V596.5H227.5V578.5M202.5 575.5H211.5V578.5H227.5M249.5 572.5H238.5V572.5H233.5M233.5 572.5H231.5V578.5H227.5M202.5 490.5H210.5V497.5H233.5M202.5 490.5V487.5H198.5V474.5M198.5 474.5H209.5V466.5H224.5M233.5 497.5V484.5H228.5V471.5M233.5 497.5H233.5V497.5H233.5M228.5 471.5V467.5H224.5V466.5M255.5 495.5H247.5V497.5H233.5M252.5 465.5H247.5V471.5H228.5M253.5 446.5H241.5V444.5H225.5M225.5 444.5V460.5H224.5V466.5M227.5 413.5H225.5V418.5H222.5M196.5 410.5V414.5H199.5V415.5M199.5 415.5H206.5V418.5H222.5M225.5 444.5H225.5V444.5H225.5M222.5 418.5V432.5H225.5V444.5M121.5 416.5V424.5H132.5V439.5M161.5 418.5V431.5H161.5V435.5M161.5 435.5H151.5V440.5H134.5M132.5 439.5H133.5V440.5H134.5M100.5 443.5H105.5V448.5H107.5M132.5 439.5H126.5V448.5H107.5M161.5 435.5H165.5V440.5H167.5M199.5 415.5V438.5H186.5V444.5M167.5 440.5H173.5V444.5H186.5M225.5 444.5H212.5V448.5H190.5M186.5 444.5H188.5V448.5H190.5M198.5 474.5H196.5V470.5H193.5M190.5 448.5V463.5H193.5V470.5M167.5 495.5V500.5H170.5V517.5M167.5 495.5H179.5V497.5H198.5M170.5 517.5H180.5V518.5H197.5M198.5 497.5V509.5H197.5V518.5M200.5 521.5H198.5V518.5H197.5M200.5 521.5V545.5H195.5V551.5M163.5 526.5V521.5H170.5V517.5M163.5 526.5V538.5H167.5V553.5M225.5 520.5H217.5V521.5H200.5M225.5 520.5V502.5H233.5V497.5M202.5 490.5V492.5H198.5V497.5M195.5 657.5V655.5H192.5V653.5M195.5 657.5V668.5H192.5V686.5M192.5 653.5H178.5V662.5H170.5M170.5 662.5V671.5H171.5V682.5M192.5 686.5H181.5V682.5H171.5M220.5 662.5H200.5V657.5H195.5M194.5 632.5V643.5H192.5V653.5M194.5 688.5H193.5V686.5H192.5M163.5 650.5V653.5H170.5V662.5M137.5 667.5V673.5H141.5V679.5M171.5 683.5H153.5V679.5H141.5M171.5 683.5V682.5H171.5V682.5M160.5 715.5H160.5V715.5H160.5M160.5 715.5V699.5H171.5V683.5M39.5 739.5V733.5H38.5V722.5M38.5 722.5H27.5V710.5H17.5M7.5 735.5V727.5H11.5V714.5M17.5 710.5H13.5V714.5H11.5M38.5 722.5H43.5V710.5H50.5M17.5 710.5V699.5H23.5V690.5M23.5 690.5H27.5V689.5H42.5M50.5 710.5V701.5H42.5V689.5M74.5 739.5V721.5H78.5V715.5M78.5 715.5H78.5V714.5H77.5M50.5 710.5H63.5V714.5H77.5M100.5 677.5H94.5V680.5H73.5M100.5 677.5V666.5H107.5V662.5M101.5 653.5H91.5V652.5H72.5M101.5 653.5V659.5H107.5V662.5M68.5 657.5V655.5H72.5V652.5M68.5 657.5V665.5H73.5V680.5M73.5 680.5H73.5V680.5H73.5M102.5 638.5V647.5H101.5V653.5M76.5 625.5V644.5H72.5V652.5M129.5 660.5H115.5V662.5H107.5M77.5 714.5V696.5H73.5V680.5M45.5 686.5H44.5V689.5H42.5M45.5 686.5H58.5V680.5H73.5M100.5 745.5V737.5H110.5V732.5M129.5 758.5V751.5H133.5V748.5M110.5 732.5H120.5V748.5H133.5M166.5 747.5H145.5V744.5H137.5M160.5 715.5H154.5V714.5H139.5M139.5 714.5V723.5H137.5V744.5M137.5 744.5H136.5V748.5H133.5M460.5 411.5H470.5V414.5H473.5M460.5 411.5V424.5H445.5V428.5M473.5 414.5V422.5H472.5V439.5M445.5 428.5H452.5V441.5H465.5M465.5 441.5H468.5V439.5H472.5M455.5 390.5V397.5H460.5V411.5M482.5 412.5H475.5V414.5H473.5M441.5 429.5H443.5V428.5H445.5M480.5 440.5H477.5V439.5H472.5M461.5 465.5V451.5H465.5V441.5M439.5 271.5V260.5H428.5V256.5M401.5 279.5V272.5H406.5V253.5M406.5 253.5H419.5V256.5H428.5M428.5 256.5V234.5H439.5V227.5M218.5 551.5H223.5V557.5H226.5M218.5 551.5V533.5H227.5V524.5M226.5 557.5H239.5V541.5H250.5M227.5 524.5H241.5V535.5H249.5M249.5 535.5V537.5H250.5V541.5M199.5 554.5H204.5V551.5H218.5M233.5 572.5V567.5H226.5V557.5M225.5 520.5V521.5H227.5V524.5M260.5 555.5V547.5H250.5V541.5M260.5 524.5H253.5V535.5H249.5M77.5 460.5H94.5V470.5H99.5M107.5 448.5V454.5H108.5V462.5M99.5 470.5H105.5V462.5H108.5M49.5 625.5H47.5V633.5H41.5M68.5 657.5H62.5V653.5H50.5M50.5 653.5V637.5H41.5V633.5M45.5 686.5V673.5H42.5V662.5M50.5 653.5V658.5H42.5V662.5M14.5 627.5H16.5V631.5H18.5M41.5 633.5H30.5V631.5H18.5M11.5 714.5H5.5V706.5H-10.5M17.5 683.5H1.5V689.5H-15.5M17.5 683.5V670.5H16.5V663.5M12.5 658.5V659.5H16.5V663.5M12.5 658.5H1.5V662.5H-16.5M23.5 690.5V687.5H17.5V683.5M42.5 662.5H28.5V663.5H16.5M18.5 631.5V647.5H12.5V658.5M107.5 710.5V698.5H107.5V691.5M107.5 710.5H107.5V712.5H109.5M109.5 712.5H115.5V713.5H138.5M107.5 691.5H119.5V680.5H140.5M140.5 680.5V690.5H138.5V713.5M78.5 715.5H88.5V710.5H107.5M100.5 677.5V685.5H107.5V691.5M110.5 732.5V720.5H109.5V712.5M139.5 714.5H138.5V713.5H138.5M141.5 679.5H141.5V680.5H140.5M406.5 253.5H404.5V248.5H400.5M400.5 248.5V233.5H403.5V227.5M379.5 284.5V268.5H378.5V252.5M400.5 248.5H387.5V252.5H378.5M79.5 498.5H92.5V494.5H98.5M99.5 470.5V475.5H100.5V492.5M98.5 494.5H99.5V492.5H100.5M108.5 527.5H110.5V523.5H113.5M98.5 494.5V509.5H113.5V523.5M133.5 546.5V540.5H129.5V522.5M113.5 523.5H118.5V522.5H129.5M163.5 526.5H154.5V519.5H133.5M129.5 522.5H130.5V519.5H133.5M351.5 251.5H368.5V250.5H375.5M351.5 251.5V230.5H351.5V223.5M375.5 250.5V240.5H374.5V224.5M349.5 252.5H350.5V251.5H351.5M378.5 252.5H377.5V250.5H375.5M135.5 499.5V496.5H125.5V487.5M135.5 499.5H146.5V488.5H164.5M125.5 487.5V477.5H129.5V469.5M157.5 471.5V477.5H165.5V483.5M157.5 471.5H144.5V466.5H134.5M134.5 466.5H132.5V469.5H129.5M164.5 488.5V485.5H165.5V483.5M100.5 492.5H105.5V487.5H125.5M133.5 519.5V504.5H135.5V499.5M167.5 495.5V492.5H164.5V488.5M108.5 462.5H117.5V469.5H129.5M167.5 440.5V451.5H157.5V471.5M193.5 470.5H179.5V483.5H165.5M134.5 440.5V445.5H134.5V466.5"/>
<path d="M113 6.5h2M152 6.5h2M210 6.5h11M293 6.5h2M411 6.5h6M471 6.5h2M516 6.5h3M653 6.5h2M696 6.5h2M747 6.5h2M761 6.5h3M791 6.5h2M801 6.5h2M33 7.5h16M98 7.5h2M111 7.5h2M150 7.5h2M206 7.5h4M295 7.5h2M407 7.5h4M469 7.5h2M473 7.5h2M514 7.5h2M519 7.5h4M535 7.5h2M538 7.5h2M566 7.5h4M686 7.5h2M749 7.5h12M27 8.5h6M95 8.5h3M100 8.5h2M108 8.5h3M147 8.5h3M202 8.5h4M297 8.5h2M475 8.5h2M523 8.5h6M533 8.5h2M540 8.5h2M564 8.5h2M570 8.5h5M656 8.5h2M659 8.5h13M699 8.5h2M6 9.5h2M22 9.5h5M77 9.5h2M92 9.5h3M102 9.5h2M106 9.5h2M131 9.5h2M145 9.5h2M198 9.5h4M299 9.5h2M477 9.5h2M511 9.5h2M529 9.5h4M542 9.5h2M575 9.5h2M588 9.5h4M672 9.5h4M701 9.5h2M8 10.5h2M19 10.5h3M89 10.5h3M104 10.5h2M143 10.5h2M195 10.5h3M240 10.5h17M269 10.5h10M301 10.5h2M380 10.5h7M465 10.5h2M507 10.5h4M544 10.5h2M561 10.5h2M577 10.5h2M582 10.5h6M676 10.5h4M10 11.5h3M80 11.5h2M85 11.5h4M141 11.5h2M188 11.5h8M235 11.5h5M257 11.5h2M263 11.5h6M279 11.5h7M303 11.5h4M387 11.5h7M480 11.5h2M500 11.5h7M546 11.5h2M559 11.5h2M579 11.5h3M593 11.5h2M680 11.5h3M704 11.5h2M711 11.5h18M13 12.5h3M82 12.5h3M135 12.5h2M139 12.5h2M178 12.5h10M259 12.5h4M307 12.5h4M394 12.5h4M443 12.5h2M496 12.5h4M548 12.5h2M556 12.5h3M706 12.5h2M709 12.5h2M16 13.5h2M137 13.5h2M170 13.5h8M311 13.5h4M354 13.5h25M398 13.5h4M445 13.5h2M483 13.5h2M490 13.5h6M550 13.5h2M554 13.5h2M780 13.5h7M166 14.5h4M315 14.5h3M347 14.5h7M402 14.5h2M447 14.5h2M485 14.5h5M552 14.5h2M597 14.5h2M620 14.5h2M625 14.5h2M773 14.5h7M449 15.5h2M318 16.5h29M451 16.5h4M599 16.5h3M455 17.5h3M602 17.5h2M616 17.5h2M629 17.5h2M458 18.5h2M604 18.5h6M610 19.5h5M633 20.5h2M197 28.5h3M769 28.5h3M200 29.5h4M311 29.5h4M408 29.5h2M574 29.5h2M767 29.5h2M772 29.5h2M163 30.5h3M204 30.5h4M305 30.5h6M410 30.5h3M462 30.5h2M572 30.5h2M765 30.5h2M774 30.5h2M50 31.5h6M110 31.5h2M161 31.5h2M166 31.5h4M208 31.5h5M295 31.5h10M413 31.5h4M464 31.5h4M570 31.5h2M763 31.5h2M776 31.5h2M15 32.5h17M56 32.5h20M140 32.5h2M159 32.5h2M170 32.5h4M213 32.5h4M287 32.5h8M417 32.5h3M468 32.5h4M522 32.5h5M568 32.5h2M748 32.5h4M761 32.5h2M778 32.5h2M12 33.5h3M32 33.5h4M113 33.5h2M138 33.5h2M142 33.5h4M174 33.5h4M217 33.5h4M350 33.5h16M420 33.5h3M472 33.5h2M505 33.5h3M514 33.5h8M566 33.5h2M744 33.5h4M752 33.5h4M759 33.5h2M780 33.5h2M804 33.5h2M7 34.5h5M36 34.5h4M146 34.5h6M156 34.5h2M178 34.5h4M221 34.5h4M366 34.5h4M423 34.5h4M474 34.5h2M502 34.5h3M508 34.5h6M528 34.5h16M563 34.5h3M646 34.5h11M729 34.5h8M740 34.5h4M756 34.5h3M40 35.5h4M116 35.5h2M135 35.5h2M152 35.5h4M182 35.5h4M225 35.5h2M264 35.5h2M315 35.5h3M370 35.5h3M427 35.5h2M476 35.5h2M499 35.5h3M544 35.5h5M559 35.5h4M644 35.5h2M657 35.5h3M720 35.5h9M737 35.5h3M783 35.5h2M44 36.5h2M118 36.5h4M186 36.5h4M266 36.5h2M318 36.5h2M478 36.5h2M497 36.5h2M549 36.5h5M557 36.5h2M615 36.5h2M642 36.5h2M660 36.5h2M673 36.5h4M702 36.5h3M718 36.5h2M122 37.5h6M132 37.5h2M190 37.5h2M268 37.5h2M320 37.5h2M480 37.5h4M554 37.5h3M617 37.5h2M640 37.5h2M662 37.5h3M669 37.5h4M677 37.5h6M698 37.5h4M716 37.5h2M128 38.5h4M270 38.5h7M322 38.5h2M484 38.5h2M619 38.5h3M665 38.5h4M683 38.5h15M706 38.5h2M713 38.5h3M787 38.5h2M795 38.5h6M78 39.5h6M277 39.5h5M324 39.5h2M486 39.5h2M493 39.5h2M583 39.5h2M622 39.5h2M637 39.5h2M711 39.5h2M789 39.5h6M84 40.5h7M229 40.5h6M326 40.5h2M488 40.5h2M624 40.5h3M635 40.5h2M709 40.5h2M91 41.5h2M235 41.5h10M328 41.5h3M383 41.5h8M490 41.5h2M627 41.5h4M633 41.5h2M93 42.5h2M245 42.5h8M331 42.5h6M377 42.5h6M391 42.5h5M587 42.5h2M631 42.5h2M95 43.5h2M253 43.5h4M337 43.5h6M396 43.5h3M589 43.5h4M97 44.5h2M343 44.5h3M587 44.5h2M593 44.5h2M595 45.5h3M584 46.5h2M598 46.5h3M601 47.5h2M581 48.5h2M603 48.5h2M556 53.5h2M554 54.5h2M560 54.5h2M441 55.5h2M444 55.5h2M552 55.5h2M287 56.5h3M763 56.5h3M160 57.5h2M290 57.5h6M447 57.5h2M549 57.5h2M564 57.5h2M761 57.5h2M766 57.5h4M158 58.5h2M162 58.5h2M296 58.5h9M404 58.5h2M449 58.5h2M531 58.5h4M547 58.5h2M571 58.5h4M759 58.5h2M770 58.5h4M156 59.5h2M188 59.5h2M305 59.5h7M451 59.5h2M529 59.5h2M535 59.5h6M545 59.5h2M567 59.5h4M757 59.5h2M774 59.5h3M48 60.5h17M154 60.5h2M165 60.5h2M184 60.5h4M190 60.5h2M434 60.5h3M453 60.5h2M514 60.5h15M541 60.5h4M576 60.5h2M755 60.5h2M65 61.5h5M152 61.5h2M167 61.5h2M181 61.5h3M192 61.5h2M339 61.5h9M394 61.5h2M428 61.5h6M455 61.5h2M512 61.5h2M6 62.5h12M43 62.5h4M126 62.5h3M149 62.5h3M169 62.5h3M179 62.5h2M194 62.5h29M326 62.5h13M423 62.5h5M457 62.5h2M490 62.5h2M493 62.5h2M605 62.5h2M608 62.5h2M728 62.5h6M35 63.5h8M122 63.5h4M129 63.5h2M147 63.5h2M172 63.5h3M177 63.5h2M257 63.5h2M318 63.5h8M366 63.5h2M410 63.5h2M419 63.5h4M459 63.5h2M488 63.5h2M495 63.5h2M509 63.5h2M610 63.5h2M629 63.5h3M725 63.5h3M734 63.5h5M19 64.5h16M118 64.5h4M145 64.5h2M175 64.5h2M224 64.5h2M259 64.5h4M282 64.5h2M314 64.5h4M349 64.5h6M362 64.5h4M368 64.5h2M415 64.5h4M461 64.5h2M497 64.5h2M581 64.5h2M626 64.5h3M632 64.5h3M647 64.5h11M685 64.5h4M713 64.5h4M721 64.5h4M739 64.5h2M114 65.5h4M132 65.5h2M143 65.5h2M226 65.5h3M263 65.5h3M355 65.5h7M413 65.5h2M485 65.5h2M499 65.5h2M601 65.5h2M613 65.5h2M622 65.5h4M635 65.5h3M645 65.5h2M658 65.5h2M689 65.5h6M717 65.5h4M108 66.5h6M141 66.5h2M229 66.5h4M266 66.5h4M371 66.5h2M464 66.5h2M501 66.5h2M505 66.5h2M615 66.5h2M619 66.5h3M638 66.5h3M643 66.5h2M660 66.5h2M667 66.5h3M695 66.5h10M105 67.5h3M135 67.5h2M139 67.5h2M233 67.5h3M270 67.5h5M278 67.5h2M387 67.5h2M466 67.5h2M503 67.5h2M598 67.5h2M617 67.5h2M641 67.5h2M662 67.5h2M670 67.5h4M705 67.5h6M743 67.5h2M804 67.5h2M88 68.5h10M137 68.5h2M236 68.5h3M275 68.5h3M468 68.5h4M481 68.5h2M664 68.5h2M674 68.5h9M781 68.5h2M795 68.5h9M80 69.5h8M98 69.5h7M239 69.5h2M472 69.5h9M587 69.5h2M595 69.5h2M783 69.5h2M789 69.5h6M76 70.5h4M241 70.5h3M383 70.5h2M785 70.5h4M244 71.5h3M592 71.5h2M247 72.5h2M380 72.5h2M774 72.5h2M102 83.5h4M100 84.5h2M106 84.5h2M382 84.5h3M385 85.5h5M508 85.5h2M683 85.5h3M749 85.5h2M97 86.5h2M205 86.5h7M390 86.5h4M506 86.5h2M510 86.5h2M526 86.5h6M587 86.5h2M679 86.5h4M686 86.5h2M747 86.5h2M751 86.5h2M18 87.5h2M110 87.5h2M199 87.5h6M212 87.5h6M346 87.5h2M394 87.5h2M504 87.5h2M524 87.5h2M532 87.5h7M585 87.5h2M642 87.5h2M675 87.5h4M688 87.5h2M703 87.5h2M744 87.5h3M16 88.5h2M20 88.5h3M94 88.5h2M141 88.5h3M218 88.5h3M280 88.5h2M283 88.5h2M348 88.5h2M396 88.5h3M502 88.5h2M513 88.5h2M521 88.5h3M539 88.5h6M583 88.5h2M618 88.5h2M640 88.5h2M644 88.5h2M673 88.5h2M690 88.5h2M700 88.5h3M741 88.5h3M23 89.5h3M92 89.5h2M139 89.5h2M144 89.5h2M278 89.5h2M285 89.5h2M350 89.5h3M399 89.5h2M404 89.5h3M500 89.5h2M515 89.5h2M519 89.5h2M545 89.5h3M561 89.5h4M581 89.5h2M591 89.5h2M616 89.5h2M620 89.5h3M637 89.5h3M646 89.5h2M671 89.5h2M692 89.5h2M696 89.5h4M739 89.5h2M755 89.5h2M26 90.5h2M114 90.5h2M136 90.5h3M146 90.5h2M167 90.5h8M276 90.5h2M287 90.5h2M310 90.5h17M353 90.5h3M401 90.5h3M407 90.5h2M498 90.5h2M517 90.5h2M548 90.5h3M556 90.5h5M565 90.5h2M578 90.5h3M614 90.5h2M623 90.5h4M635 90.5h2M648 90.5h2M669 90.5h2M694 90.5h2M737 90.5h2M757 90.5h2M12 91.5h2M28 91.5h3M134 91.5h2M148 91.5h2M165 91.5h2M175 91.5h8M274 91.5h2M289 91.5h6M305 91.5h5M327 91.5h5M356 91.5h2M409 91.5h3M457 91.5h3M494 91.5h4M551 91.5h5M567 91.5h2M576 91.5h2M612 91.5h2M627 91.5h3M633 91.5h2M661 91.5h3M667 91.5h2M735 91.5h2M759 91.5h4M804 91.5h2M31 92.5h3M88 92.5h2M117 92.5h2M150 92.5h4M183 92.5h2M272 92.5h2M295 92.5h10M332 92.5h6M358 92.5h3M412 92.5h2M453 92.5h4M490 92.5h4M569 92.5h2M574 92.5h2M630 92.5h3M651 92.5h2M659 92.5h2M664 92.5h3M733 92.5h2M763 92.5h3M7 93.5h4M34 93.5h2M52 93.5h8M119 93.5h2M154 93.5h5M162 93.5h2M185 93.5h2M270 93.5h2M338 93.5h3M361 93.5h2M414 93.5h3M444 93.5h9M461 93.5h2M484 93.5h2M487 93.5h3M571 93.5h3M596 93.5h2M653 93.5h2M657 93.5h2M717 93.5h16M766 93.5h4M792 93.5h3M36 94.5h2M47 94.5h5M60 94.5h6M121 94.5h2M159 94.5h3M187 94.5h2M267 94.5h3M363 94.5h2M417 94.5h2M437 94.5h7M482 94.5h2M598 94.5h4M608 94.5h2M655 94.5h2M711 94.5h6M770 94.5h3M788 94.5h4M795 94.5h4M38 95.5h2M66 95.5h4M123 95.5h2M189 95.5h2M248 95.5h4M263 95.5h4M365 95.5h3M419 95.5h3M602 95.5h3M773 95.5h4M785 95.5h3M799 95.5h2M40 96.5h2M44 96.5h2M83 96.5h2M125 96.5h2M191 96.5h2M242 96.5h6M260 96.5h3M368 96.5h2M422 96.5h3M479 96.5h2M605 96.5h2M777 96.5h4M783 96.5h2M42 97.5h2M127 97.5h2M233 97.5h9M256 97.5h4M370 97.5h2M425 97.5h4M477 97.5h2M781 97.5h2M129 98.5h2M227 98.5h6M254 98.5h2M429 98.5h3M467 98.5h2M475 98.5h2M432 99.5h2M472 99.5h3M78 100.5h2M470 100.5h2M256 110.5h3M259 111.5h2M261 112.5h2M434 112.5h2M578 112.5h2M649 112.5h3M200 113.5h2M263 113.5h2M436 113.5h4M580 113.5h3M643 113.5h6M716 113.5h7M265 114.5h2M440 114.5h4M583 114.5h2M603 114.5h2M606 114.5h2M639 114.5h4M710 114.5h6M723 114.5h3M267 115.5h2M444 115.5h4M585 115.5h3M601 115.5h2M608 115.5h2M636 115.5h3M726 115.5h2M204 116.5h3M367 116.5h4M448 116.5h4M588 116.5h13M633 116.5h3M728 116.5h3M207 117.5h6M270 117.5h2M361 117.5h6M380 117.5h18M452 117.5h5M497 117.5h3M511 117.5h5M611 117.5h2M631 117.5h2M682 117.5h6M731 117.5h2M213 118.5h4M272 118.5h2M311 118.5h2M351 118.5h10M372 118.5h8M457 118.5h8M494 118.5h3M500 118.5h3M507 118.5h4M516 118.5h2M553 118.5h5M613 118.5h2M688 118.5h4M779 118.5h3M274 119.5h2M309 119.5h2M343 119.5h8M465 119.5h5M492 119.5h2M503 119.5h4M558 119.5h6M615 119.5h4M692 119.5h2M734 119.5h3M753 119.5h3M775 119.5h4M782 119.5h2M307 120.5h2M341 120.5h2M429 120.5h2M470 120.5h3M490 120.5h2M519 120.5h2M564 120.5h2M619 120.5h5M678 120.5h2M694 120.5h2M737 120.5h4M751 120.5h2M756 120.5h3M772 120.5h3M784 120.5h2M218 121.5h8M277 121.5h2M305 121.5h2M338 121.5h3M401 121.5h2M425 121.5h4M473 121.5h4M566 121.5h2M624 121.5h5M696 121.5h2M702 121.5h2M741 121.5h4M749 121.5h2M759 121.5h2M769 121.5h3M226 122.5h23M279 122.5h3M303 122.5h2M335 122.5h3M422 122.5h3M477 122.5h2M487 122.5h2M568 122.5h2M698 122.5h2M745 122.5h4M761 122.5h3M767 122.5h2M787 122.5h2M793 122.5h13M301 123.5h2M332 123.5h3M418 123.5h4M479 123.5h2M523 123.5h2M544 123.5h5M570 123.5h2M661 123.5h15M764 123.5h3M789 123.5h4M298 124.5h3M326 124.5h6M411 124.5h7M481 124.5h2M525 124.5h19M294 125.5h4M321 125.5h5M406 125.5h5M483 125.5h2M290 126.5h4M286 127.5h4M283 128.5h3M573 138.5h2M570 139.5h3M280 140.5h2M567 140.5h3M589 140.5h6M718 140.5h3M219 141.5h2M277 141.5h3M525 141.5h2M563 141.5h4M576 141.5h13M675 141.5h2M714 141.5h4M216 142.5h3M252 142.5h2M275 142.5h2M373 142.5h2M522 142.5h3M558 142.5h5M637 142.5h3M677 142.5h3M710 142.5h4M722 142.5h2M214 143.5h2M248 143.5h4M254 143.5h2M272 143.5h3M319 143.5h2M369 143.5h4M438 143.5h2M519 143.5h3M535 143.5h8M555 143.5h3M640 143.5h5M680 143.5h4M706 143.5h4M211 144.5h3M244 144.5h4M256 144.5h2M265 144.5h7M284 144.5h3M321 144.5h2M365 144.5h4M376 144.5h2M436 144.5h2M516 144.5h3M528 144.5h7M543 144.5h7M645 144.5h18M684 144.5h3M704 144.5h3M745 144.5h2M208 145.5h3M240 145.5h4M258 145.5h7M287 145.5h4M323 145.5h2M362 145.5h3M434 145.5h2M450 145.5h7M513 145.5h3M550 145.5h4M633 145.5h2M663 145.5h6M687 145.5h3M702 145.5h2M726 145.5h2M742 145.5h3M747 145.5h2M205 146.5h3M237 146.5h3M291 146.5h4M325 146.5h2M360 146.5h2M379 146.5h6M432 146.5h2M442 146.5h8M505 146.5h8M669 146.5h4M690 146.5h3M728 146.5h3M739 146.5h3M749 146.5h2M202 147.5h3M234 147.5h3M295 147.5h4M327 147.5h2M358 147.5h2M385 147.5h10M430 147.5h2M497 147.5h8M599 147.5h2M693 147.5h4M699 147.5h2M731 147.5h2M736 147.5h3M751 147.5h2M199 148.5h3M230 148.5h4M299 148.5h2M311 148.5h2M329 148.5h2M356 148.5h2M395 148.5h6M428 148.5h2M459 148.5h2M495 148.5h2M697 148.5h2M733 148.5h3M753 148.5h2M774 148.5h6M196 149.5h3M228 149.5h2M301 149.5h2M309 149.5h2M331 149.5h2M354 149.5h2M426 149.5h2M469 149.5h15M493 149.5h2M602 149.5h2M606 149.5h5M623 149.5h7M770 149.5h4M780 149.5h4M194 150.5h2M303 150.5h2M307 150.5h2M352 150.5h2M423 150.5h3M462 150.5h7M484 150.5h9M604 150.5h2M611 150.5h12M768 150.5h2M784 150.5h2M788 150.5h6M305 151.5h2M334 151.5h2M350 151.5h2M420 151.5h3M785 151.5h3M794 151.5h5M417 152.5h3M765 152.5h2M799 152.5h3M337 153.5h2M414 153.5h3M411 154.5h3M762 154.5h2M340 155.5h2M408 155.5h3M406 156.5h2M343 157.5h2M343 163.5h2M493 163.5h2M600 163.5h2M341 164.5h2M491 164.5h2M655 164.5h2M687 164.5h2M339 165.5h2M489 165.5h2M653 165.5h2M657 165.5h2M685 165.5h2M689 165.5h2M487 166.5h2M596 166.5h2M659 166.5h2M683 166.5h2M691 166.5h2M308 167.5h2M336 167.5h2M498 167.5h2M553 167.5h3M650 167.5h2M661 167.5h2M680 167.5h3M693 167.5h2M732 167.5h2M255 168.5h3M305 168.5h3M334 168.5h2M551 168.5h2M556 168.5h3M648 168.5h2M676 168.5h4M714 168.5h4M729 168.5h3M734 168.5h2M250 169.5h5M303 169.5h2M332 169.5h2M483 169.5h2M539 169.5h3M549 169.5h2M559 169.5h2M573 169.5h6M592 169.5h2M629 169.5h2M664 169.5h2M673 169.5h3M710 169.5h4M718 169.5h2M726 169.5h3M736 169.5h2M246 170.5h4M300 170.5h3M407 170.5h2M502 170.5h5M537 170.5h2M542 170.5h2M547 170.5h2M561 170.5h6M571 170.5h2M579 170.5h13M608 170.5h2M626 170.5h3M645 170.5h2M666 170.5h2M670 170.5h3M708 170.5h2M723 170.5h3M738 170.5h2M227 171.5h19M298 171.5h2M313 171.5h2M329 171.5h2M352 171.5h15M409 171.5h3M507 171.5h6M534 171.5h3M544 171.5h3M567 171.5h4M610 171.5h2M623 171.5h3M668 171.5h2M721 171.5h2M740 171.5h2M207 172.5h12M296 172.5h2M327 172.5h2M367 172.5h6M412 172.5h4M471 172.5h10M532 172.5h2M612 172.5h2M618 172.5h5M633 172.5h2M642 172.5h2M705 172.5h2M742 172.5h2M756 172.5h2M201 173.5h6M219 173.5h7M294 173.5h2M325 173.5h2M373 173.5h3M416 173.5h3M466 173.5h5M514 173.5h2M524 173.5h8M614 173.5h4M640 173.5h2M744 173.5h3M754 173.5h2M758 173.5h2M266 174.5h9M323 174.5h2M402 174.5h2M419 174.5h2M516 174.5h8M638 174.5h2M702 174.5h2M747 174.5h3M752 174.5h2M760 174.5h3M262 175.5h4M275 175.5h6M291 175.5h2M321 175.5h2M421 175.5h2M750 175.5h2M763 175.5h2M319 176.5h2M378 176.5h7M423 176.5h2M765 176.5h3M784 176.5h3M282 177.5h2M288 177.5h2M385 177.5h10M425 177.5h2M437 177.5h5M768 177.5h2M782 177.5h2M787 177.5h2M286 178.5h2M395 178.5h4M442 178.5h12M770 178.5h2M779 178.5h3M789 178.5h3M428 179.5h2M434 179.5h2M454 179.5h8M772 179.5h2M777 179.5h2M792 179.5h2M799 179.5h6M430 180.5h2M774 180.5h3M794 180.5h5M637 192.5h3M230 193.5h11M255 193.5h2M597 193.5h2M635 193.5h2M640 193.5h2M656 193.5h6M241 194.5h2M253 194.5h2M257 194.5h2M541 194.5h2M595 194.5h2M599 194.5h4M611 194.5h4M633 194.5h2M642 194.5h2M654 194.5h2M662 194.5h6M251 195.5h2M259 195.5h3M319 195.5h2M396 195.5h2M484 195.5h5M539 195.5h2M543 195.5h3M593 195.5h2M603 195.5h4M609 195.5h2M615 195.5h4M626 195.5h7M644 195.5h2M652 195.5h2M668 195.5h2M262 196.5h3M317 196.5h2M321 196.5h3M394 196.5h2M489 196.5h6M537 196.5h2M546 196.5h3M591 196.5h2M607 196.5h2M619 196.5h7M646 196.5h2M650 196.5h2M670 196.5h2M687 196.5h4M695 196.5h4M245 197.5h2M248 197.5h2M265 197.5h2M289 197.5h14M324 197.5h4M523 197.5h3M535 197.5h2M549 197.5h3M589 197.5h2M648 197.5h2M672 197.5h2M685 197.5h2M691 197.5h4M699 197.5h2M745 197.5h2M789 197.5h3M267 198.5h3M303 198.5h4M328 198.5h3M391 198.5h2M480 198.5h2M508 198.5h7M521 198.5h2M526 198.5h4M533 198.5h2M552 198.5h4M674 198.5h2M683 198.5h2M701 198.5h2M741 198.5h4M784 198.5h5M792 198.5h2M270 199.5h2M307 199.5h4M313 199.5h2M331 199.5h3M389 199.5h2M459 199.5h9M497 199.5h2M505 199.5h3M515 199.5h6M530 199.5h3M556 199.5h4M569 199.5h3M586 199.5h2M676 199.5h2M681 199.5h2M703 199.5h2M720 199.5h12M737 199.5h4M782 199.5h2M794 199.5h2M196 200.5h4M272 200.5h3M311 200.5h2M334 200.5h2M348 200.5h24M404 200.5h9M427 200.5h6M449 200.5h10M468 200.5h2M475 200.5h4M502 200.5h3M560 200.5h4M567 200.5h2M572 200.5h2M584 200.5h2M678 200.5h3M705 200.5h2M718 200.5h2M732 200.5h5M780 200.5h2M796 200.5h2M200 201.5h6M275 201.5h2M336 201.5h2M372 201.5h2M386 201.5h2M413 201.5h14M446 201.5h3M470 201.5h5M500 201.5h2M564 201.5h3M574 201.5h2M582 201.5h2M707 201.5h4M716 201.5h2M778 201.5h2M206 202.5h5M277 202.5h3M338 202.5h3M384 202.5h2M442 202.5h4M576 202.5h2M580 202.5h2M711 202.5h5M776 202.5h2M799 202.5h2M211 203.5h4M280 203.5h2M341 203.5h2M382 203.5h2M439 203.5h3M578 203.5h2M762 203.5h8M801 203.5h2M215 204.5h4M282 204.5h2M343 204.5h2M376 204.5h2M380 204.5h2M436 204.5h3M756 204.5h6M770 204.5h6M803 204.5h2M219 205.5h2M378 205.5h2M434 205.5h2M753 205.5h3M381 217.5h2M650 217.5h2M653 217.5h2M264 218.5h9M337 218.5h2M383 218.5h3M648 218.5h2M655 218.5h2M257 219.5h7M273 219.5h7M386 219.5h3M433 219.5h2M646 219.5h2M253 220.5h4M389 220.5h3M431 220.5h2M556 220.5h2M644 220.5h2M658 220.5h2M754 220.5h2M392 221.5h3M428 221.5h3M497 221.5h2M552 221.5h4M558 221.5h2M660 221.5h2M357 222.5h8M395 222.5h2M426 222.5h2M495 222.5h2M499 222.5h3M550 222.5h2M560 222.5h2M641 222.5h2M662 222.5h2M757 222.5h2M784 222.5h2M351 223.5h6M365 223.5h6M397 223.5h2M423 223.5h3M493 223.5h2M502 223.5h2M562 223.5h2M609 223.5h2M664 223.5h5M786 223.5h3M371 224.5h4M399 224.5h2M421 224.5h2M504 224.5h3M511 224.5h14M537 224.5h2M547 224.5h2M564 224.5h2M607 224.5h2M611 224.5h2M638 224.5h2M760 224.5h2M789 224.5h3M221 225.5h4M304 225.5h7M401 225.5h2M416 225.5h5M471 225.5h3M490 225.5h2M507 225.5h4M525 225.5h3M535 225.5h2M539 225.5h2M604 225.5h3M613 225.5h2M670 225.5h2M712 225.5h2M780 225.5h2M792 225.5h3M798 225.5h8M225 226.5h7M243 226.5h7M296 226.5h8M328 226.5h2M408 226.5h8M469 226.5h2M474 226.5h3M488 226.5h2M528 226.5h3M533 226.5h2M541 226.5h2M602 226.5h2M615 226.5h11M635 226.5h2M709 226.5h3M714 226.5h2M795 226.5h3M232 227.5h11M291 227.5h5M403 227.5h5M439 227.5h5M467 227.5h2M477 227.5h4M484 227.5h4M531 227.5h2M543 227.5h2M598 227.5h4M626 227.5h2M695 227.5h14M777 227.5h2M287 228.5h4M444 228.5h6M465 228.5h2M481 228.5h3M593 228.5h5M628 228.5h2M632 228.5h2M674 228.5h2M691 228.5h4M765 228.5h2M775 228.5h2M194 229.5h4M216 229.5h3M284 229.5h3M450 229.5h4M463 229.5h2M589 229.5h4M630 229.5h2M676 229.5h2M687 229.5h4M718 229.5h2M731 229.5h5M773 229.5h2M198 230.5h7M211 230.5h5M454 230.5h4M461 230.5h2M585 230.5h4M678 230.5h2M685 230.5h2M720 230.5h11M736 230.5h2M771 230.5h2M205 231.5h6M322 231.5h2M458 231.5h3M578 231.5h7M680 231.5h2M683 231.5h2M738 231.5h2M769 231.5h2M572 232.5h6M740 232.5h2M551 245.5h2M680 245.5h2M508 246.5h4M553 246.5h3M504 247.5h4M512 247.5h2M548 247.5h2M556 247.5h3M561 247.5h2M677 247.5h2M763 247.5h3M501 248.5h3M514 248.5h2M559 248.5h2M563 248.5h3M590 248.5h2M760 248.5h3M766 248.5h2M498 249.5h3M516 249.5h2M566 249.5h3M586 249.5h4M748 249.5h3M756 249.5h4M768 249.5h2M496 250.5h2M518 250.5h2M521 250.5h2M569 250.5h2M583 250.5h3M673 250.5h2M751 250.5h5M770 250.5h2M792 250.5h2M493 251.5h3M520 251.5h2M523 251.5h3M571 251.5h2M703 251.5h3M772 251.5h2M788 251.5h4M491 252.5h2M526 252.5h3M573 252.5h2M670 252.5h2M701 252.5h2M706 252.5h4M717 252.5h5M774 252.5h2M782 252.5h6M529 253.5h3M640 253.5h2M699 253.5h2M710 253.5h7M776 253.5h6M532 254.5h5M576 254.5h2M612 254.5h4M638 254.5h2M642 254.5h2M667 254.5h2M742 254.5h2M802 254.5h4M537 255.5h5M610 255.5h2M616 255.5h6M636 255.5h2M644 255.5h2M665 255.5h2M696 255.5h2M740 255.5h2M799 255.5h3M598 256.5h2M608 256.5h2M622 256.5h7M634 256.5h2M646 256.5h2M694 256.5h2M797 256.5h2M606 257.5h2M629 257.5h5M648 257.5h7M662 257.5h2M737 257.5h2M604 258.5h2M655 258.5h7M726 258.5h11M602 259.5h2M538 273.5h6M572 273.5h4M693 273.5h2M531 274.5h7M566 274.5h6M576 274.5h3M691 274.5h2M695 274.5h2M514 275.5h3M529 275.5h2M562 275.5h4M579 275.5h2M688 275.5h3M761 275.5h2M508 276.5h6M517 276.5h2M527 276.5h2M581 276.5h3M685 276.5h3M711 276.5h3M759 276.5h2M763 276.5h4M772 276.5h4M504 277.5h4M525 277.5h2M584 277.5h2M683 277.5h2M699 277.5h2M705 277.5h6M714 277.5h2M767 277.5h5M776 277.5h2M520 278.5h2M523 278.5h2M548 278.5h2M558 278.5h2M586 278.5h2M681 278.5h2M701 278.5h4M778 278.5h3M550 279.5h2M588 279.5h2M600 279.5h3M646 279.5h2M649 279.5h2M679 279.5h2M717 279.5h2M755 279.5h2M781 279.5h3M552 280.5h2M590 280.5h2M598 280.5h2M603 280.5h2M644 280.5h2M651 280.5h2M741 280.5h2M784 280.5h2M554 281.5h2M592 281.5h2M596 281.5h2M605 281.5h2M642 281.5h2M653 281.5h2M677 281.5h2M720 281.5h2M738 281.5h3M752 281.5h2M786 281.5h4M799 281.5h7M594 282.5h2M607 282.5h2M640 282.5h2M675 282.5h2M722 282.5h6M735 282.5h3M744 282.5h2M748 282.5h4M790 282.5h4M797 282.5h2M609 283.5h2M617 283.5h3M728 283.5h7M746 283.5h2M794 283.5h3M611 284.5h2M615 284.5h2M620 284.5h3M637 284.5h2M613 285.5h2M623 285.5h2M671 285.5h2M625 286.5h3M669 286.5h2M555 287.5h2M628 287.5h3M633 287.5h2M667 287.5h2M557 288.5h2M631 288.5h2M664 288.5h3M559 289.5h2M662 289.5h2M561 290.5h3M660 290.5h2M564 291.5h2M566 292.5h2M568 293.5h3M571 294.5h2M573 295.5h2M575 296.5h2M577 297.5h2M579 298.5h2M581 299.5h2M583 300.5h2M702 300.5h3M746 300.5h2M582 301.5h3M705 301.5h6M744 301.5h2M748 301.5h3M501 302.5h6M580 302.5h2M656 302.5h2M661 302.5h2M711 302.5h4M742 302.5h2M751 302.5h2M507 303.5h7M528 303.5h2M578 303.5h2M715 303.5h3M753 303.5h3M762 303.5h6M514 304.5h4M526 304.5h2M530 304.5h4M542 304.5h6M576 304.5h2M653 304.5h2M718 304.5h2M739 304.5h2M756 304.5h6M768 304.5h2M518 305.5h4M534 305.5h8M574 305.5h2M638 305.5h3M651 305.5h2M720 305.5h3M726 305.5h6M737 305.5h2M770 305.5h2M522 306.5h3M572 306.5h2M587 306.5h2M641 306.5h4M648 306.5h3M723 306.5h3M732 306.5h5M772 306.5h2M789 306.5h2M570 307.5h2M589 307.5h3M645 307.5h3M667 307.5h2M774 307.5h3M787 307.5h2M791 307.5h2M549 308.5h3M568 308.5h2M592 308.5h3M612 308.5h2M615 308.5h2M777 308.5h5M785 308.5h2M793 308.5h2M552 309.5h2M566 309.5h2M595 309.5h3M610 309.5h2M670 309.5h2M683 309.5h3M696 309.5h2M782 309.5h3M795 309.5h2M564 310.5h2M598 310.5h2M608 310.5h2M672 310.5h4M679 310.5h4M686 310.5h2M694 310.5h2M797 310.5h2M555 311.5h2M562 311.5h2M600 311.5h3M606 311.5h2M619 311.5h2M631 311.5h2M676 311.5h3M688 311.5h2M692 311.5h2M799 311.5h2M557 312.5h2M560 312.5h2M603 312.5h3M690 312.5h2M628 313.5h2M802 313.5h2M623 314.5h2M626 314.5h2M579 329.5h4M591 329.5h7M625 329.5h2M540 330.5h3M574 330.5h5M583 330.5h2M588 330.5h3M598 330.5h6M623 330.5h2M627 330.5h2M711 330.5h3M772 330.5h2M496 331.5h4M538 331.5h2M543 331.5h2M571 331.5h3M585 331.5h3M621 331.5h2M696 331.5h5M707 331.5h4M714 331.5h2M757 331.5h5M768 331.5h4M500 332.5h4M517 332.5h3M536 332.5h2M545 332.5h2M618 332.5h3M630 332.5h2M649 332.5h3M701 332.5h6M716 332.5h2M755 332.5h2M762 332.5h6M504 333.5h3M515 333.5h2M520 333.5h3M534 333.5h2M547 333.5h2M606 333.5h2M616 333.5h2M647 333.5h2M652 333.5h2M718 333.5h2M752 333.5h3M794 333.5h12M507 334.5h3M513 334.5h2M523 334.5h2M532 334.5h2M549 334.5h16M614 334.5h2M633 334.5h2M645 334.5h2M654 334.5h3M692 334.5h3M739 334.5h4M749 334.5h3M787 334.5h7M510 335.5h3M525 335.5h3M530 335.5h2M565 335.5h5M612 335.5h2M635 335.5h10M657 335.5h2M690 335.5h2M734 335.5h5M743 335.5h2M747 335.5h2M528 336.5h2M610 336.5h2M659 336.5h8M688 336.5h2M722 336.5h2M730 336.5h4M745 336.5h2M667 337.5h9M686 337.5h2M727 337.5h3M676 338.5h4M684 338.5h2M725 338.5h2M680 339.5h4M567 353.5h2M565 354.5h2M569 354.5h2M562 355.5h3M571 355.5h2M597 355.5h5M560 356.5h2M573 356.5h2M592 356.5h5M602 356.5h4M772 356.5h4M558 357.5h2M575 357.5h2M590 357.5h2M606 357.5h2M750 357.5h2M770 357.5h2M776 357.5h5M556 358.5h2M588 358.5h2M656 358.5h2M680 358.5h2M768 358.5h2M781 358.5h4M792 358.5h6M554 359.5h2M586 359.5h2M609 359.5h2M631 359.5h3M654 359.5h2M682 359.5h2M745 359.5h2M766 359.5h2M785 359.5h7M798 359.5h4M510 360.5h6M552 360.5h2M584 360.5h2M611 360.5h2M629 360.5h2M634 360.5h4M652 360.5h2M684 360.5h2M754 360.5h2M760 360.5h6M802 360.5h3M506 361.5h4M516 361.5h6M549 361.5h3M582 361.5h2M613 361.5h4M627 361.5h2M638 361.5h4M650 361.5h2M676 361.5h2M686 361.5h2M720 361.5h2M756 361.5h4M503 362.5h3M522 362.5h28M617 362.5h10M642 362.5h4M648 362.5h2M688 362.5h3M704 362.5h3M718 362.5h2M722 362.5h4M740 362.5h3M501 363.5h2M646 363.5h2M691 363.5h2M701 363.5h3M707 363.5h2M716 363.5h2M726 363.5h4M735 363.5h5M499 364.5h2M663 364.5h2M693 364.5h2M698 364.5h3M709 364.5h2M714 364.5h2M730 364.5h5M497 365.5h2M665 365.5h2M671 365.5h2M695 365.5h3M711 365.5h3M495 366.5h2M667 366.5h2M672 380.5h3M670 381.5h2M675 381.5h4M756 381.5h13M668 382.5h2M679 382.5h4M769 382.5h2M683 383.5h2M771 383.5h3M777 383.5h3M752 384.5h2M774 384.5h3M559 385.5h3M629 385.5h3M647 385.5h4M739 385.5h4M494 386.5h2M562 386.5h4M574 386.5h11M627 386.5h2M632 386.5h2M645 386.5h2M651 386.5h4M735 386.5h4M743 386.5h4M496 387.5h3M516 387.5h6M566 387.5h8M585 387.5h7M625 387.5h2M634 387.5h2M642 387.5h3M655 387.5h2M713 387.5h2M731 387.5h4M747 387.5h3M804 387.5h2M499 388.5h3M512 388.5h4M522 388.5h4M592 388.5h4M623 388.5h2M636 388.5h2M640 388.5h2M657 388.5h2M710 388.5h3M715 388.5h2M729 388.5h2M802 388.5h2M502 389.5h3M508 389.5h4M526 389.5h2M536 389.5h13M596 389.5h4M602 389.5h2M621 389.5h2M638 389.5h2M659 389.5h2M689 389.5h4M707 389.5h3M727 389.5h2M785 389.5h2M800 389.5h2M505 390.5h3M528 390.5h8M549 390.5h7M600 390.5h2M604 390.5h2M618 390.5h3M661 390.5h2M693 390.5h6M704 390.5h3M725 390.5h2M787 390.5h4M796 390.5h4M606 391.5h2M612 391.5h6M699 391.5h5M719 391.5h2M723 391.5h2M791 391.5h5M608 392.5h4M721 392.5h2M660 407.5h2M665 407.5h2M570 409.5h6M530 410.5h2M563 410.5h7M619 410.5h2M656 410.5h2M669 410.5h2M679 410.5h6M528 411.5h2M560 411.5h3M616 411.5h3M621 411.5h2M675 411.5h4M685 411.5h5M721 411.5h2M724 411.5h2M535 412.5h2M558 412.5h2M614 412.5h2M623 412.5h2M653 412.5h2M672 412.5h3M719 412.5h2M752 412.5h2M508 413.5h2M525 413.5h2M555 413.5h3M611 413.5h3M625 413.5h2M649 413.5h4M727 413.5h2M749 413.5h3M754 413.5h2M510 414.5h3M523 414.5h2M553 414.5h2M609 414.5h2M627 414.5h2M633 414.5h4M646 414.5h3M692 414.5h2M716 414.5h2M747 414.5h2M790 414.5h2M505 415.5h2M513 415.5h4M520 415.5h3M539 415.5h2M607 415.5h2M629 415.5h4M637 415.5h2M642 415.5h4M697 415.5h6M714 415.5h2M730 415.5h2M744 415.5h3M757 415.5h2M787 415.5h3M792 415.5h2M517 416.5h3M639 416.5h3M695 416.5h2M703 416.5h6M712 416.5h2M732 416.5h12M759 416.5h12M784 416.5h3M794 416.5h2M542 417.5h2M548 417.5h3M579 417.5h2M709 417.5h3M771 417.5h2M782 417.5h2M796 417.5h10M501 418.5h2M544 418.5h4M581 418.5h2M592 418.5h3M603 418.5h2M773 418.5h2M780 418.5h2M583 419.5h2M588 419.5h4M595 419.5h2M775 419.5h2M778 419.5h2M585 420.5h3M597 420.5h2M600 420.5h2M497 421.5h2M650 434.5h2M652 435.5h4M669 435.5h3M520 436.5h3M656 436.5h3M667 436.5h2M672 436.5h4M735 436.5h6M516 437.5h4M523 437.5h3M659 437.5h8M676 437.5h4M730 437.5h5M741 437.5h4M780 437.5h2M512 438.5h4M526 438.5h2M680 438.5h3M745 438.5h4M782 438.5h3M499 439.5h13M528 439.5h3M683 439.5h3M749 439.5h2M752 439.5h2M785 439.5h2M531 440.5h2M686 440.5h3M691 440.5h2M532 441.5h3M616 441.5h2M689 441.5h2M693 441.5h2M711 441.5h5M535 442.5h4M574 442.5h6M612 442.5h4M618 442.5h4M695 442.5h2M708 442.5h3M716 442.5h6M756 442.5h2M539 443.5h5M568 443.5h6M580 443.5h8M622 443.5h4M705 443.5h3M722 443.5h4M799 443.5h5M544 444.5h4M566 444.5h2M588 444.5h2M609 444.5h2M626 444.5h4M698 444.5h2M702 444.5h3M797 444.5h2M804 444.5h2M548 445.5h3M564 445.5h2M590 445.5h3M630 445.5h4M700 445.5h2M794 445.5h3M551 446.5h2M561 446.5h3M593 446.5h3M634 446.5h4M761 446.5h2M772 446.5h2M792 446.5h2M553 447.5h3M559 447.5h2M596 447.5h2M603 447.5h4M638 447.5h2M770 447.5h2M556 448.5h3M598 448.5h5M767 449.5h2M503 462.5h13M730 462.5h15M516 463.5h3M727 463.5h3M745 463.5h2M764 463.5h2M519 464.5h4M526 464.5h2M724 464.5h3M747 464.5h3M762 464.5h2M523 465.5h3M528 465.5h2M639 465.5h6M722 465.5h2M750 465.5h3M760 465.5h2M791 465.5h3M530 466.5h2M548 466.5h2M576 466.5h2M596 466.5h2M632 466.5h7M645 466.5h2M670 466.5h8M753 466.5h2M758 466.5h2M768 466.5h2M789 466.5h2M794 466.5h3M532 467.5h2M546 467.5h2M550 467.5h4M578 467.5h2M594 467.5h2M598 467.5h2M619 467.5h2M629 467.5h3M664 467.5h6M678 467.5h3M701 467.5h4M755 467.5h3M786 467.5h3M797 467.5h2M803 467.5h3M534 468.5h2M554 468.5h4M580 468.5h2M592 468.5h2M617 468.5h2M621 468.5h2M625 468.5h4M648 468.5h2M662 468.5h2M681 468.5h2M705 468.5h5M718 468.5h2M771 468.5h2M783 468.5h3M799 468.5h4M536 469.5h2M543 469.5h2M558 469.5h3M582 469.5h2M590 469.5h2M601 469.5h2M615 469.5h2M623 469.5h2M650 469.5h12M683 469.5h3M698 469.5h2M710 469.5h2M773 469.5h4M781 469.5h2M538 470.5h2M541 470.5h2M561 470.5h3M584 470.5h2M588 470.5h2M603 470.5h2M613 470.5h2M686 470.5h4M712 470.5h2M777 470.5h4M564 471.5h3M586 471.5h2M611 471.5h2M690 471.5h4M714 471.5h2M567 472.5h2M606 472.5h2M609 472.5h2M694 472.5h2M545 487.5h2M547 488.5h2M542 489.5h2M549 489.5h2M668 489.5h3M551 490.5h2M595 490.5h7M671 490.5h4M735 490.5h3M553 491.5h2M591 491.5h4M602 491.5h5M638 491.5h2M675 491.5h4M719 491.5h2M732 491.5h3M738 491.5h4M800 491.5h6M538 492.5h2M555 492.5h2M589 492.5h2M607 492.5h2M619 492.5h3M636 492.5h2M640 492.5h2M679 492.5h4M716 492.5h3M728 492.5h4M742 492.5h3M793 492.5h7M517 493.5h2M557 493.5h3M575 493.5h15M609 493.5h2M617 493.5h2M622 493.5h4M642 493.5h3M683 493.5h3M713 493.5h3M725 493.5h3M745 493.5h4M791 493.5h2M514 494.5h3M519 494.5h2M535 494.5h2M560 494.5h2M571 494.5h4M611 494.5h2M615 494.5h2M626 494.5h4M633 494.5h2M645 494.5h2M686 494.5h2M710 494.5h3M723 494.5h2M749 494.5h3M789 494.5h2M511 495.5h3M521 495.5h2M562 495.5h2M567 495.5h4M613 495.5h2M630 495.5h3M647 495.5h2M688 495.5h3M705 495.5h5M779 495.5h2M787 495.5h2M508 496.5h3M523 496.5h4M532 496.5h2M563 496.5h4M649 496.5h3M691 496.5h2M697 496.5h8M775 496.5h4M781 496.5h2M785 496.5h2M505 497.5h3M527 497.5h5M652 497.5h2M692 497.5h5M753 497.5h2M772 497.5h3M783 497.5h2M503 498.5h2M654 498.5h3M755 498.5h3M765 498.5h7M501 499.5h2M657 499.5h2M758 499.5h7M659 500.5h2M676 514.5h2M635 515.5h3M701 515.5h2M633 516.5h2M638 516.5h2M703 516.5h2M720 516.5h3M532 517.5h3M631 517.5h2M640 517.5h3M705 517.5h2M716 517.5h4M723 517.5h2M526 518.5h6M535 518.5h2M573 518.5h2M593 518.5h2M629 518.5h2M643 518.5h3M658 518.5h3M707 518.5h2M712 518.5h4M725 518.5h2M521 519.5h5M537 519.5h2M595 519.5h3M607 519.5h2M627 519.5h2M646 519.5h2M652 519.5h6M661 519.5h2M670 519.5h2M696 519.5h2M709 519.5h3M727 519.5h2M519 520.5h2M590 520.5h2M598 520.5h3M604 520.5h3M648 520.5h4M663 520.5h2M729 520.5h2M517 521.5h2M577 521.5h2M601 521.5h3M665 521.5h2M731 521.5h2M790 521.5h2M507 522.5h2M515 522.5h2M610 522.5h3M733 522.5h2M788 522.5h2M792 522.5h2M802 522.5h2M505 523.5h2M509 523.5h2M513 523.5h2M580 523.5h2M586 523.5h2M613 523.5h4M794 523.5h2M502 524.5h3M511 524.5h2M582 524.5h2M617 524.5h4M785 524.5h2M796 524.5h2M500 525.5h2M561 525.5h2M621 525.5h2M669 525.5h5M761 525.5h4M783 525.5h2M798 525.5h2M498 526.5h2M674 526.5h4M755 526.5h6M781 526.5h2M496 527.5h2M545 527.5h2M678 527.5h2M745 527.5h10M766 527.5h5M777 527.5h4M547 528.5h2M557 528.5h2M737 528.5h8M771 528.5h6M549 529.5h2M551 530.5h2M554 530.5h2M682 530.5h2M735 540.5h2M733 541.5h2M731 542.5h2M729 543.5h2M515 544.5h2M534 544.5h2M560 544.5h3M709 544.5h4M726 544.5h3M517 545.5h2M563 545.5h4M713 545.5h6M723 545.5h3M519 546.5h2M567 546.5h3M626 546.5h3M657 546.5h6M691 546.5h4M706 546.5h2M719 546.5h4M521 547.5h5M570 547.5h3M581 547.5h3M622 547.5h4M629 547.5h2M642 547.5h15M695 547.5h11M743 547.5h2M803 547.5h3M526 548.5h5M573 548.5h2M578 548.5h3M584 548.5h2M619 548.5h3M631 548.5h2M687 548.5h3M745 548.5h4M575 549.5h3M586 549.5h3M595 549.5h7M617 549.5h2M633 549.5h2M639 549.5h2M682 549.5h5M749 549.5h11M589 550.5h6M602 550.5h2M615 550.5h2M635 550.5h2M672 550.5h10M604 551.5h2M613 551.5h2M665 551.5h7M760 551.5h22M552 552.5h2M606 552.5h2M611 552.5h2M782 552.5h2M798 552.5h2M510 553.5h2M534 553.5h2M550 553.5h2M608 553.5h3M784 553.5h2M796 553.5h2M536 554.5h4M786 554.5h2M794 554.5h2M507 555.5h2M540 555.5h4M547 555.5h2M788 555.5h2M792 555.5h2M544 556.5h3M790 556.5h2M664 569.5h3M662 570.5h2M667 570.5h2M725 570.5h14M786 570.5h4M660 571.5h2M669 571.5h3M705 571.5h4M723 571.5h2M779 571.5h7M566 572.5h2M640 572.5h2M658 572.5h2M672 572.5h3M699 572.5h6M709 572.5h2M721 572.5h2M769 572.5h10M562 573.5h4M638 573.5h2M642 573.5h3M655 573.5h3M675 573.5h2M681 573.5h4M691 573.5h8M741 573.5h2M762 573.5h7M558 574.5h4M614 574.5h3M645 574.5h3M651 574.5h4M677 574.5h4M685 574.5h6M718 574.5h2M759 574.5h3M551 575.5h7M617 575.5h5M648 575.5h3M713 575.5h2M716 575.5h2M744 575.5h5M755 575.5h4M524 576.5h5M547 576.5h4M611 576.5h2M622 576.5h4M634 576.5h2M749 576.5h6M517 577.5h7M529 577.5h2M544 577.5h3M592 577.5h2M626 577.5h2M513 578.5h4M531 578.5h2M590 578.5h2M594 578.5h2M608 578.5h2M628 578.5h2M631 578.5h2M533 579.5h2M588 579.5h2M596 579.5h2M606 579.5h2M535 580.5h2M575 580.5h2M586 580.5h2M598 580.5h2M603 580.5h3M537 581.5h2M584 581.5h2M600 581.5h3M804 581.5h2M581 582.5h3M802 582.5h2M579 583.5h2M800 583.5h2M577 599.5h2M627 599.5h2M670 599.5h3M561 600.5h4M579 600.5h4M625 600.5h2M629 600.5h2M667 600.5h3M673 600.5h2M715 600.5h2M559 601.5h2M565 601.5h6M583 601.5h4M631 601.5h3M664 601.5h3M675 601.5h2M712 601.5h3M717 601.5h2M737 601.5h4M510 602.5h6M557 602.5h2M571 602.5h4M587 602.5h8M634 602.5h2M661 602.5h3M677 602.5h2M710 602.5h2M719 602.5h2M735 602.5h2M741 602.5h7M759 602.5h9M796 602.5h2M508 603.5h2M516 603.5h6M555 603.5h2M595 603.5h11M621 603.5h2M636 603.5h2M659 603.5h2M679 603.5h4M696 603.5h6M707 603.5h3M721 603.5h14M748 603.5h11M792 603.5h4M798 603.5h3M506 604.5h2M522 604.5h2M538 604.5h2M552 604.5h3M606 604.5h3M683 604.5h4M691 604.5h5M702 604.5h5M788 604.5h4M801 604.5h4M535 605.5h3M540 605.5h2M549 605.5h3M609 605.5h3M639 605.5h2M687 605.5h4M769 605.5h19M533 606.5h2M542 606.5h2M546 606.5h3M612 606.5h3M617 606.5h2M641 606.5h2M526 607.5h2M530 607.5h3M544 607.5h2M615 607.5h2M643 607.5h15M528 608.5h2M574 621.5h2M660 621.5h2M572 622.5h2M576 622.5h2M662 622.5h2M570 623.5h2M578 623.5h2M664 623.5h2M769 623.5h2M568 624.5h2M580 624.5h2M666 624.5h2M566 625.5h2M582 625.5h2M616 625.5h2M619 625.5h2M764 625.5h2M584 626.5h2M773 626.5h2M563 627.5h2M586 627.5h2M613 627.5h2M670 627.5h2M561 628.5h2M611 628.5h2M623 628.5h2M677 628.5h3M673 629.5h4M759 629.5h2M777 629.5h2M554 630.5h2M558 630.5h2M608 630.5h2M681 630.5h2M745 630.5h6M779 630.5h2M501 631.5h5M552 631.5h2M556 631.5h2M627 631.5h2M743 631.5h2M751 631.5h7M496 632.5h5M605 632.5h2M629 632.5h2M722 632.5h5M782 632.5h2M507 633.5h2M549 633.5h2M603 633.5h2M685 633.5h2M720 633.5h2M727 633.5h5M784 633.5h2M792 633.5h6M525 634.5h2M592 634.5h2M631 634.5h15M718 634.5h2M732 634.5h2M739 634.5h2M786 634.5h6M798 634.5h7M523 635.5h2M527 635.5h2M546 635.5h2M594 635.5h4M600 635.5h2M688 635.5h2M701 635.5h3M716 635.5h2M734 635.5h2M521 636.5h2M529 636.5h2M598 636.5h2M690 636.5h3M699 636.5h2M704 636.5h3M714 636.5h2M736 636.5h2M512 637.5h2M519 637.5h2M531 637.5h6M543 637.5h2M693 637.5h2M697 637.5h2M707 637.5h3M712 637.5h2M517 638.5h2M537 638.5h6M695 638.5h2M710 638.5h2M515 639.5h2M775 652.5h3M772 653.5h3M778 653.5h2M511 654.5h2M625 654.5h2M665 654.5h3M770 654.5h2M780 654.5h2M509 655.5h2M540 655.5h3M622 655.5h3M627 655.5h9M663 655.5h2M668 655.5h6M768 655.5h2M782 655.5h2M507 656.5h2M516 656.5h2M535 656.5h5M570 656.5h3M620 656.5h2M636 656.5h12M661 656.5h2M674 656.5h5M734 656.5h2M766 656.5h2M784 656.5h2M505 657.5h2M532 657.5h3M544 657.5h2M568 657.5h2M573 657.5h5M611 657.5h2M617 657.5h3M648 657.5h8M679 657.5h5M689 657.5h2M731 657.5h3M736 657.5h2M763 657.5h3M530 658.5h2M566 658.5h2M609 658.5h2M613 658.5h4M656 658.5h4M684 658.5h5M727 658.5h4M738 658.5h2M787 658.5h2M564 659.5h2M692 659.5h2M719 659.5h8M740 659.5h2M756 659.5h4M789 659.5h2M527 660.5h2M548 660.5h2M562 660.5h2M606 660.5h2M717 660.5h2M742 660.5h2M753 660.5h3M760 660.5h3M791 660.5h2M559 661.5h3M715 661.5h2M744 661.5h3M750 661.5h3M803 661.5h2M524 662.5h2M557 662.5h2M696 662.5h2M713 662.5h2M747 662.5h3M794 662.5h2M801 662.5h2M552 663.5h2M555 663.5h2M602 663.5h2M698 663.5h2M796 663.5h2M799 663.5h2M584 664.5h2M600 664.5h2M700 664.5h2M710 664.5h2M586 665.5h2M598 665.5h2M702 665.5h2M595 666.5h3M704 666.5h2M707 666.5h2M589 667.5h2M593 667.5h2M591 668.5h2M705 679.5h2M547 680.5h3M703 680.5h2M541 681.5h6M560 681.5h4M655 681.5h2M701 681.5h2M535 682.5h6M554 682.5h6M564 682.5h4M592 682.5h2M653 682.5h2M657 682.5h3M699 682.5h2M529 683.5h6M551 683.5h3M568 683.5h2M594 683.5h2M651 683.5h2M660 683.5h3M697 683.5h2M710 683.5h2M526 684.5h3M570 684.5h2M589 684.5h2M596 684.5h2M663 684.5h2M695 684.5h2M772 684.5h3M524 685.5h2M598 685.5h2M632 685.5h13M648 685.5h2M665 685.5h3M693 685.5h2M741 685.5h4M770 685.5h2M775 685.5h3M785 685.5h2M522 686.5h2M573 686.5h2M586 686.5h2M600 686.5h2M630 686.5h2M645 686.5h3M668 686.5h4M691 686.5h2M720 686.5h7M739 686.5h2M745 686.5h6M768 686.5h2M778 686.5h2M783 686.5h2M787 686.5h2M510 687.5h7M520 687.5h2M584 687.5h2M617 687.5h4M672 687.5h5M689 687.5h2M715 687.5h5M727 687.5h4M737 687.5h2M751 687.5h5M765 687.5h3M780 687.5h3M789 687.5h2M504 688.5h6M517 688.5h3M582 688.5h2M614 688.5h3M621 688.5h4M627 688.5h2M677 688.5h6M687 688.5h2M731 688.5h2M735 688.5h2M756 688.5h4M763 688.5h2M791 688.5h2M502 689.5h2M577 689.5h2M580 689.5h2M604 689.5h2M612 689.5h2M625 689.5h2M683 689.5h4M733 689.5h2M760 689.5h3M793 689.5h2M609 690.5h3M795 690.5h2M607 691.5h2M797 691.5h3M800 692.5h2M802 693.5h3M735 705.5h2M557 706.5h3M573 706.5h3M603 706.5h2M737 706.5h2M560 707.5h5M569 707.5h4M575 707.5h3M601 707.5h2M739 707.5h2M565 708.5h4M599 708.5h2M741 708.5h2M579 709.5h2M597 709.5h2M730 709.5h2M743 709.5h12M552 710.5h2M581 710.5h2M595 710.5h2M651 710.5h2M583 711.5h2M592 711.5h3M653 711.5h2M704 711.5h7M521 712.5h2M585 712.5h2M590 712.5h2M655 712.5h13M688 712.5h17M711 712.5h11M519 713.5h2M523 713.5h2M587 713.5h3M645 713.5h2M668 713.5h5M682 713.5h6M722 713.5h5M804 713.5h2M525 714.5h3M545 714.5h4M677 714.5h5M528 715.5h2M543 715.5h2M674 715.5h3M777 715.5h3M801 715.5h2M515 716.5h2M530 716.5h3M540 716.5h3M625 716.5h5M638 716.5h5M759 716.5h2M773 716.5h4M533 717.5h2M538 717.5h2M623 717.5h2M630 717.5h8M761 717.5h2M769 717.5h4M781 717.5h2M535 718.5h3M621 718.5h2M763 718.5h2M767 718.5h2M797 718.5h2M511 719.5h2M619 719.5h2M765 719.5h2M509 720.5h2M617 720.5h2M794 720.5h2M786 721.5h2M792 721.5h2M790 722.5h2M793 731.5h2M553 733.5h2M556 733.5h2M675 733.5h3M590 734.5h16M673 734.5h2M678 734.5h3M702 734.5h2M717 734.5h13M527 735.5h2M550 735.5h2M606 735.5h6M671 735.5h2M681 735.5h3M700 735.5h2M704 735.5h2M711 735.5h6M730 735.5h2M751 735.5h7M511 736.5h2M524 736.5h3M529 736.5h2M560 736.5h2M587 736.5h2M612 736.5h5M658 736.5h13M684 736.5h2M698 736.5h2M706 736.5h5M732 736.5h2M743 736.5h8M507 737.5h4M520 737.5h4M547 737.5h2M562 737.5h10M617 737.5h6M634 737.5h9M656 737.5h2M686 737.5h2M696 737.5h2M741 737.5h2M504 738.5h3M517 738.5h3M532 738.5h2M545 738.5h2M572 738.5h5M623 738.5h11M654 738.5h2M694 738.5h2M735 738.5h2M739 738.5h2M801 738.5h2M502 739.5h2M515 739.5h2M534 739.5h2M577 739.5h4M583 739.5h2M644 739.5h2M651 739.5h3M689 739.5h2M692 739.5h2M737 739.5h2M500 740.5h2M542 740.5h2M581 740.5h2M649 740.5h2M498 741.5h2M537 741.5h2M540 741.5h2M614 741.5h2M647 741.5h2M761 741.5h3M496 742.5h2M764 742.5h2M494 743.5h2M766 743.5h2M492 744.5h2M768 744.5h3M771 745.5h4M775 746.5h2M584 756.5h2M644 756.5h2M586 757.5h2M642 757.5h2M588 758.5h2M590 759.5h2M639 759.5h2M592 760.5h2M637 760.5h2M717 760.5h3M538 761.5h3M594 761.5h2M635 761.5h2M687 761.5h3M714 761.5h3M720 761.5h3M791 761.5h3M536 762.5h2M541 762.5h2M633 762.5h2M685 762.5h2M690 762.5h3M711 762.5h3M723 762.5h2M785 762.5h6M534 763.5h2M543 763.5h3M597 763.5h2M653 763.5h2M682 763.5h3M693 763.5h2M707 763.5h4M725 763.5h3M731 763.5h3M781 763.5h4M795 763.5h2M527 764.5h7M546 764.5h3M599 764.5h4M655 764.5h3M680 764.5h2M695 764.5h3M702 764.5h5M728 764.5h3M734 764.5h2M521 765.5h6M549 765.5h2M575 765.5h2M631 765.5h2M658 765.5h2M698 765.5h4M736 765.5h2M750 765.5h5M778 765.5h2M519 766.5h3M551 766.5h5M629 766.5h2M660 766.5h3M738 766.5h2M744 766.5h6M755 766.5h4M775 766.5h3M799 766.5h2M556 767.5h4M663 767.5h5M740 767.5h4M759 767.5h3M772 767.5h3M516 768.5h2M560 768.5h3M668 768.5h6M762 768.5h4M769 768.5h3M494 769.5h7M514 769.5h2M563 769.5h2M570 769.5h2M607 769.5h2M625 769.5h2M674 769.5h3M766 769.5h3M803 769.5h2M501 770.5h13M565 770.5h2M623 770.5h2M567 771.5h2M619 771.5h4M615 772.5h4M612 773.5h3M631 787.5h6M628 788.5h3M637 788.5h4M527 789.5h2M530 789.5h2M612 789.5h2M625 789.5h3M641 789.5h2M532 790.5h2M576 790.5h2M614 790.5h4M622 790.5h3M679 790.5h2M682 790.5h2M744 790.5h5M802 790.5h4M534 791.5h2M572 791.5h4M578 791.5h17M618 791.5h4M644 791.5h2M684 791.5h2M710 791.5h3M749 791.5h6M790 791.5h12M523 792.5h2M536 792.5h8M568 792.5h4M595 792.5h3M676 792.5h2M686 792.5h2M703 792.5h7M713 792.5h2M755 792.5h3M788 792.5h2M565 793.5h3M598 793.5h4M674 793.5h2M688 793.5h2M695 793.5h8M758 793.5h4M773 793.5h15M563 794.5h2M602 794.5h3M690 794.5h5M716 794.5h2M762 794.5h2M767 794.5h6M508 795.5h3M561 795.5h2M605 795.5h2M671 795.5h2M764 795.5h3M491 796.5h5M502 796.5h6M518 796.5h2M545 796.5h2M668 796.5h3M496 797.5h6M512 797.5h2M547 797.5h2M558 797.5h2M649 797.5h5M662 797.5h6M720 797.5h2M549 798.5h2M556 798.5h2M654 798.5h8M722 798.5h3M738 798.5h2M551 799.5h2M554 799.5h2M725 799.5h4M729 800.5h4M735 800.5h2M733 801.5h2M13.5 41v9M14.5 34v7M14.5 50v4M15.5 30v2M15.5 54v3M16.5 25v5M16.5 57v4M17.5 14v11M17.5 61v1M18.5 11v2M18.5 81v6M19.5 6v4M19.5 65v16M45.5 37v5M46.5 42v9M46.5 63v7M47.5 51v6M47.5 70v24M48.5 8v15M48.5 57v3M49.5 23v6M50.5 29v2M69.5 60v1M69.5 93v2M70.5 56v4M70.5 89v4M71.5 52v4M71.5 63v2M71.5 85v4M72.5 50v2M72.5 81v4M73.5 48v2M73.5 78v3M74.5 46v2M74.5 67v2M74.5 75v3M75.5 33v1M75.5 44v2M75.5 72v3M76.5 30v2M76.5 34v2M76.5 42v2M76.5 71v1M77.5 28v2M77.5 36v2M77.5 40v2M78.5 26v2M78.5 38v1M79.5 24v2M80.5 20v4M81.5 15v5M82.5 13v2M98.5 45v1M99.5 6v1M99.5 46v4M100.5 50v4M101.5 54v3M102.5 39v2M102.5 57v3M103.5 60v3M104.5 11v5M104.5 63v3M104.5 70v16M105.5 16v6M105.5 66v3M105.5 86v8M105.5 106v8M106.5 22v2M106.5 34v2M106.5 94v12M107.5 24v3M108.5 27v2M108.5 31v2M109.5 29v2M128.5 49v13M129.5 45v4M130.5 41v4M131.5 39v2M131.5 96v2M132.5 94v2M133.5 92v2M137.5 14v1M137.5 69v10M138.5 15v3M138.5 79v2M139.5 18v4M139.5 81v2M140.5 22v10M140.5 83v2M141.5 85v2M142.5 87v1M155.5 36v1M156.5 37v4M157.5 41v3M158.5 44v4M159.5 48v4M160.5 52v4M161.5 56v1M162.5 7v2M163.5 9v2M163.5 20v10M164.5 18v2M165.5 12v2M165.5 16v2M166.5 15v1M167.5 88v2M168.5 84v4M169.5 80v4M170.5 76v4M171.5 74v2M172.5 72v2M173.5 70v2M174.5 68v2M175.5 66v2M176.5 65v1M188.5 141v2M189.5 53v6M190.5 42v11M190.5 222v3M191.5 38v4M191.5 216v6M192.5 35v2M192.5 212v4M192.5 226v2M193.5 97v2M193.5 135v2M193.5 209v3M194.5 6v2M194.5 32v2M194.5 63v6M194.5 95v2M194.5 99v2M194.5 151v2M194.5 187v8M194.5 205v4M195.5 8v5M195.5 69v8M195.5 93v2M195.5 101v2M195.5 153v5M195.5 181v6M195.5 195v5M195.5 202v3M196.5 13v4M196.5 29v2M196.5 77v3M196.5 103v3M196.5 158v4M196.5 178v3M196.5 201v1M197.5 17v11M197.5 80v3M197.5 90v2M197.5 106v4M197.5 130v2M197.5 162v2M198.5 83v3M198.5 88v2M198.5 110v2M198.5 128v2M198.5 164v3M199.5 86v1M199.5 126v2M199.5 167v3M200.5 124v2M200.5 170v2M201.5 122v2M201.5 172v1M202.5 120v2M203.5 118v2M204.5 117v1M217.5 119v2M218.5 115v2M218.5 122v2M219.5 124v5M219.5 211v7M219.5 227v2M220.5 86v2M220.5 129v12M220.5 206v5M220.5 218v5M221.5 82v4M221.5 89v2M221.5 111v2M221.5 223v2M222.5 61v1M222.5 78v4M223.5 58v3M223.5 70v8M223.5 108v2M223.5 201v2M224.5 55v3M224.5 65v5M224.5 93v2M224.5 105v3M225.5 52v3M225.5 103v2M225.5 174v5M226.5 34v1M226.5 49v3M226.5 96v2M226.5 100v3M226.5 179v7M227.5 31v3M227.5 36v2M227.5 45v4M227.5 99v1M227.5 169v2M227.5 186v2M228.5 29v2M228.5 38v2M228.5 42v3M228.5 150v5M228.5 163v6M228.5 188v2M228.5 195v2M229.5 26v3M229.5 41v1M229.5 155v8M229.5 190v2M230.5 23v3M230.5 192v1M231.5 21v2M232.5 18v3M233.5 15v3M234.5 13v2M235.5 12v1M247.5 198v2M248.5 73v3M248.5 123v1M248.5 200v2M249.5 76v6M249.5 124v4M249.5 202v2M250.5 82v8M250.5 119v2M250.5 128v4M250.5 204v2M250.5 224v2M251.5 90v5M251.5 132v4M251.5 206v2M252.5 136v4M252.5 208v7M252.5 221v2M253.5 115v2M253.5 140v2M253.5 215v5M254.5 99v2M254.5 113v2M255.5 101v6M255.5 111v2M256.5 44v13M256.5 107v3M256.5 191v2M257.5 8v2M257.5 57v6M257.5 162v6M258.5 151v11M258.5 169v2M259.5 13v3M259.5 146v5M259.5 187v2M260.5 16v6M260.5 184v3M261.5 22v4M261.5 173v2M261.5 178v6M262.5 26v4M262.5 176v2M263.5 30v4M264.5 34v1M277.5 69v1M278.5 70v2M279.5 72v2M279.5 210v9M280.5 74v2M280.5 168v7M280.5 208v2M280.5 220v2M281.5 40v1M281.5 76v2M281.5 121v4M281.5 137v3M281.5 157v11M281.5 222v2M282.5 41v4M282.5 78v10M282.5 115v6M282.5 125v2M282.5 131v6M282.5 141v2M282.5 152v5M282.5 205v2M282.5 224v2M283.5 45v3M283.5 109v6M283.5 127v4M283.5 147v5M283.5 226v2M284.5 17v7M284.5 35v2M284.5 48v3M284.5 62v2M284.5 105v4M284.5 145v2M284.5 228v1M285.5 12v5M285.5 24v4M285.5 51v2M285.5 60v2M285.5 102v3M285.5 179v3M286.5 28v3M286.5 53v2M286.5 58v2M286.5 99v3M286.5 182v4M286.5 200v2M287.5 31v1M287.5 55v3M287.5 96v3M287.5 186v5M288.5 93v3M288.5 191v4M289.5 92v1M289.5 195v2M306.5 152v3M307.5 155v6M308.5 161v4M309.5 92v12M309.5 165v2M309.5 211v9M310.5 87v3M310.5 104v4M310.5 207v4M310.5 220v5M311.5 58v1M311.5 81v6M311.5 108v4M311.5 203v4M312.5 55v3M312.5 60v2M312.5 74v7M312.5 112v4M312.5 201v2M313.5 51v4M313.5 62v2M313.5 68v6M313.5 116v2M314.5 28v4M314.5 48v3M314.5 65v3M315.5 25v3M315.5 32v16M316.5 23v2M317.5 6v8M317.5 19v4M318.5 15v4M318.5 140v3M319.5 135v5M319.5 177v18M320.5 129v6M321.5 126v3M340.5 94v12M341.5 106v4M342.5 110v4M342.5 121v2M343.5 114v4M343.5 123v5M344.5 118v1M344.5 128v6M344.5 205v8M345.5 43v6M345.5 134v4M345.5 158v5M345.5 213v2M346.5 15v4M346.5 41v2M346.5 49v8M346.5 84v3M346.5 138v3M346.5 156v2M347.5 11v3M347.5 19v4M347.5 39v2M347.5 57v4M347.5 78v6M347.5 141v3M347.5 164v2M347.5 216v2M348.5 6v5M348.5 23v5M348.5 37v2M348.5 62v2M348.5 70v8M348.5 144v3M348.5 199v1M348.5 218v2M349.5 28v4M349.5 35v2M349.5 65v5M349.5 147v3M349.5 152v2M349.5 195v4M350.5 32v3M350.5 150v1M350.5 168v2M350.5 192v3M350.5 221v2M351.5 188v4M352.5 172v16M367.5 62v1M368.5 59v3M369.5 57v2M370.5 54v3M370.5 102v14M371.5 52v2M371.5 98v4M371.5 125v8M371.5 198v2M372.5 34v1M372.5 50v2M372.5 95v2M372.5 119v6M372.5 133v4M372.5 194v4M373.5 31v3M373.5 36v2M373.5 48v2M373.5 137v4M373.5 190v4M374.5 29v2M374.5 141v1M374.5 186v4M375.5 26v3M375.5 45v2M375.5 91v2M375.5 170v3M375.5 183v3M376.5 22v4M376.5 40v2M376.5 43v2M376.5 162v8M376.5 181v2M377.5 16v6M377.5 156v6M377.5 178v3M378.5 14v2M378.5 150v6M378.5 177v1M378.5 206v1M379.5 6v3M379.5 11v2M379.5 73v2M379.5 147v3M379.5 207v4M380.5 9v1M380.5 75v4M380.5 211v4M381.5 79v4M381.5 215v2M382.5 83v1M397.5 116v1M397.5 182v8M398.5 44v2M398.5 113v3M398.5 179v3M398.5 190v5M399.5 46v4M399.5 109v4M400.5 40v2M400.5 50v4M400.5 106v3M400.5 147v1M401.5 54v2M401.5 98v8M401.5 144v3M402.5 91v7M402.5 140v4M402.5 150v2M402.5 223v4M403.5 15v3M403.5 137v3M403.5 217v6M404.5 12v2M404.5 18v5M404.5 35v2M404.5 133v4M404.5 201v16M405.5 10v2M405.5 23v2M405.5 33v2M405.5 88v1M405.5 128v5M405.5 154v2M405.5 161v6M406.5 8v2M406.5 25v2M406.5 85v3M406.5 126v2M406.5 157v4M406.5 167v2M407.5 6v1M407.5 27v2M407.5 30v2M407.5 81v4M407.5 169v1M408.5 78v3M409.5 75v3M410.5 73v2M411.5 70v3M412.5 67v3M413.5 66v1M428.5 36v1M429.5 33v2M429.5 37v2M430.5 31v2M430.5 39v2M430.5 119v3M431.5 29v2M431.5 41v2M431.5 117v2M431.5 122v4M432.5 27v2M432.5 43v2M432.5 115v2M432.5 126v3M432.5 181v6M432.5 196v6M432.5 212v4M433.5 25v2M433.5 45v2M433.5 100v6M433.5 113v2M433.5 129v4M433.5 187v9M433.5 202v2M433.5 208v4M433.5 216v2M434.5 106v6M434.5 133v2M434.5 204v4M434.5 218v1M435.5 22v2M435.5 96v2M435.5 135v2M435.5 220v2M436.5 20v2M436.5 61v9M436.5 137v2M436.5 222v2M437.5 50v2M437.5 70v24M437.5 139v2M437.5 176v1M438.5 17v2M438.5 141v2M438.5 172v4M438.5 225v2M439.5 169v3M440.5 7v2M440.5 14v2M440.5 165v4M441.5 9v2M441.5 12v2M441.5 155v10M442.5 147v8M444.5 52v2M445.5 50v2M447.5 47v2M449.5 44v2M450.5 42v2M456.5 144v1M457.5 142v2M458.5 140v2M459.5 19v2M459.5 89v2M459.5 138v2M460.5 16v2M460.5 21v4M460.5 85v4M460.5 136v2M461.5 25v4M461.5 81v4M461.5 134v2M461.5 180v1M462.5 29v1M462.5 78v3M462.5 132v2M462.5 151v5M462.5 181v4M463.5 12v2M463.5 62v2M463.5 75v3M463.5 130v2M463.5 156v8M463.5 176v2M463.5 185v4M464.5 72v3M464.5 164v4M464.5 189v3M465.5 59v2M465.5 69v3M465.5 127v2M465.5 168v4M465.5 192v3M466.5 68v1M466.5 172v1M466.5 195v3M467.5 56v2M467.5 124v2M467.5 198v1M469.5 53v2M469.5 106v13M469.5 121v2M470.5 101v5M470.5 202v14M471.5 216v6M472.5 49v2M472.5 222v3M476.5 44v2M480.5 39v2M480.5 70v1M480.5 173v5M481.5 32v7M481.5 71v3M481.5 178v7M482.5 25v7M482.5 74v3M482.5 185v4M483.5 21v4M483.5 77v3M483.5 189v4M484.5 17v4M484.5 80v4M484.5 126v3M484.5 193v2M485.5 15v2M485.5 84v6M485.5 129v7M486.5 90v3M486.5 136v5M487.5 141v2M488.5 94v1M488.5 143v2M489.5 95v2M489.5 145v2M490.5 97v2M490.5 147v2M491.5 42v5M491.5 99v2M491.5 149v4M492.5 47v15M492.5 101v2M492.5 153v4M493.5 103v2M493.5 157v4M494.5 105v2M494.5 161v2M494.5 195v1M495.5 107v2M495.5 191v4M496.5 109v4M496.5 187v4M497.5 113v3M497.5 183v4M497.5 215v6M498.5 116v1M498.5 180v3M498.5 207v8M499.5 145v2M499.5 177v3M499.5 203v4M499.5 440v12M500.5 143v2M500.5 175v2M500.5 202v1M500.5 282v2M500.5 452v3M501.5 7v3M501.5 12v2M501.5 141v2M501.5 172v3M501.5 455v3M501.5 500v1M502.5 10v1M502.5 14v5M502.5 171v1M502.5 458v3M502.5 501v2M503.5 19v5M503.5 138v2M503.5 278v2M503.5 461v1M503.5 503v3M503.5 666v11M504.5 24v4M504.5 68v11M504.5 136v2M504.5 506v2M504.5 658v8M504.5 677v8M505.5 28v4M505.5 79v2M505.5 134v2M505.5 396v8M505.5 508v4M505.5 560v7M505.5 605v26M505.5 685v3M506.5 32v1M506.5 132v2M506.5 391v5M506.5 404v4M506.5 512v4M506.5 556v4M506.5 567v5M507.5 130v2M507.5 408v4M507.5 516v4M507.5 771v7M508.5 83v2M508.5 127v3M508.5 226v5M508.5 412v1M508.5 520v2M508.5 721v5M508.5 778v9M509.5 35v6M509.5 124v3M509.5 231v10M509.5 726v5M509.5 787v6M510.5 41v9M510.5 122v2M510.5 241v5M510.5 731v2M510.5 793v2M511.5 50v3M511.5 119v3M511.5 336v2M511.5 525v6M511.5 597v5M511.5 733v2M512.5 53v3M512.5 118v1M512.5 338v6M512.5 354v8M512.5 531v7M512.5 551v2M512.5 585v12M512.5 735v1M513.5 56v3M513.5 169v2M513.5 223v1M513.5 344v10M513.5 362v3M513.5 538v3M513.5 549v2M513.5 579v6M513.5 643v11M514.5 59v1M514.5 101v9M514.5 167v2M514.5 219v4M514.5 365v3M514.5 541v2M514.5 546v3M514.5 641v2M515.5 97v4M515.5 110v7M515.5 165v2M515.5 215v4M515.5 368v3M515.5 543v3M515.5 640v1M515.5 740v3M515.5 799v4M516.5 93v4M516.5 163v2M516.5 175v2M516.5 211v4M516.5 272v3M516.5 371v3M516.5 743v7M516.5 803v3M517.5 91v2M517.5 161v2M517.5 177v4M517.5 208v3M517.5 265v7M517.5 374v8M517.5 750v5M518.5 159v2M518.5 181v4M518.5 204v4M518.5 260v5M518.5 329v3M518.5 382v5M518.5 417v2M518.5 490v3M518.5 755v3M519.5 185v3M519.5 201v3M519.5 257v3M519.5 323v6M519.5 419v4M519.5 482v8M519.5 689v1M519.5 758v3M520.5 156v2M520.5 188v3M520.5 200v1M520.5 253v4M520.5 318v5M520.5 423v8M520.5 477v5M520.5 690v4M520.5 761v3M521.5 154v2M521.5 191v2M521.5 249v4M521.5 315v3M521.5 431v5M521.5 474v3M521.5 660v2M521.5 694v3M521.5 706v6M521.5 764v1M522.5 152v2M522.5 193v3M522.5 247v2M522.5 279v6M522.5 311v4M522.5 470v4M522.5 697v9M522.5 767v2M523.5 150v2M523.5 196v1M523.5 244v3M523.5 285v7M523.5 308v3M523.5 467v3M523.5 663v6M523.5 769v3M524.5 148v2M524.5 241v3M524.5 292v2M524.5 307v1M524.5 466v1M524.5 669v7M524.5 772v2M525.5 146v2M525.5 239v2M525.5 294v3M525.5 632v2M525.5 676v6M525.5 774v2M526.5 31v1M526.5 122v7M526.5 137v4M526.5 144v2M526.5 237v2M526.5 297v3M526.5 386v2M526.5 628v4M526.5 682v2M526.5 776v3M527.5 29v2M527.5 84v2M527.5 129v8M527.5 142v2M527.5 235v2M527.5 300v2M527.5 384v2M527.5 458v6M527.5 574v2M527.5 623v5M527.5 685v2M527.5 779v4M528.5 26v3M528.5 35v1M528.5 61v7M528.5 78v6M528.5 119v2M528.5 233v2M528.5 302v1M528.5 391v1M528.5 450v8M528.5 569v5M528.5 609v14M528.5 687v2M528.5 783v4M529.5 24v2M529.5 36v4M529.5 68v10M529.5 145v1M529.5 337v1M529.5 381v2M529.5 392v2M529.5 448v2M529.5 565v4M529.5 733v2M529.5 787v2M530.5 22v2M530.5 40v4M530.5 116v2M530.5 146v2M530.5 230v2M530.5 338v2M530.5 379v2M530.5 394v2M530.5 445v3M530.5 563v2M530.5 690v2M530.5 731v2M531.5 15v7M531.5 44v14M531.5 148v2M531.5 228v2M531.5 340v3M531.5 396v2M531.5 443v2M531.5 498v5M531.5 560v3M531.5 692v2M532.5 10v5M532.5 113v2M532.5 150v2M532.5 200v2M532.5 343v2M532.5 376v2M532.5 398v12M532.5 439v4M532.5 503v8M532.5 550v2M532.5 557v3M532.5 728v2M533.5 152v2M533.5 202v6M533.5 345v2M533.5 374v2M533.5 437v2M533.5 511v4M533.5 555v2M533.5 695v2M533.5 726v2M534.5 110v2M534.5 154v2M534.5 208v5M534.5 347v3M534.5 372v2M534.5 435v2M534.5 515v2M534.5 554v1M534.5 697v2M534.5 723v3M535.5 156v2M535.5 213v5M535.5 350v3M535.5 369v3M535.5 433v2M535.5 720v3M536.5 107v2M536.5 158v2M536.5 218v4M536.5 353v3M536.5 367v2M536.5 431v2M536.5 700v2M536.5 719v1M537.5 160v3M537.5 222v2M537.5 356v2M537.5 364v3M537.5 429v2M538.5 104v2M538.5 163v3M538.5 358v3M538.5 363v1M538.5 427v2M538.5 803v2M539.5 166v2M539.5 361v1M539.5 425v2M539.5 539v2M539.5 582v4M539.5 602v2M539.5 704v2M539.5 742v5M539.5 756v5M540.5 101v2M540.5 168v1M540.5 259v6M540.5 471v5M540.5 537v2M540.5 586v6M540.5 597v5M540.5 644v5M540.5 747v9M541.5 193v1M541.5 256v3M541.5 265v3M541.5 329v1M541.5 422v2M541.5 476v5M541.5 535v2M541.5 592v5M541.5 640v4M541.5 649v4M541.5 799v2M542.5 190v3M542.5 268v4M542.5 327v2M542.5 481v2M542.5 523v2M542.5 533v2M542.5 639v1M542.5 653v2M542.5 708v2M543.5 97v2M543.5 188v2M543.5 252v2M543.5 272v1M543.5 324v3M543.5 419v2M543.5 483v2M543.5 531v2M543.5 791v3M543.5 796v2M544.5 61v18M544.5 185v3M544.5 228v1M544.5 322v2M544.5 485v2M544.5 529v2M544.5 608v1M544.5 788v3M544.5 794v2M545.5 79v4M545.5 94v2M545.5 172v13M545.5 229v3M545.5 320v2M545.5 528v1M545.5 609v4M545.5 712v2M545.5 786v2M546.5 83v4M546.5 232v2M546.5 317v3M546.5 557v2M546.5 613v4M546.5 783v3M547.5 87v2M547.5 91v2M547.5 234v3M547.5 313v4M547.5 559v6M547.5 617v3M547.5 780v3M548.5 124v2M548.5 237v3M548.5 305v2M548.5 309v4M548.5 341v14M548.5 565v3M548.5 620v2M548.5 715v1M548.5 777v3M549.5 126v4M549.5 240v2M549.5 307v1M549.5 335v6M549.5 355v6M549.5 464v2M549.5 568v2M549.5 678v2M549.5 716v3M549.5 774v3M550.5 130v4M550.5 242v2M550.5 300v2M550.5 363v2M550.5 623v2M550.5 674v4M550.5 681v2M550.5 719v2M550.5 771v3M551.5 134v2M551.5 244v1M551.5 365v2M551.5 461v2M551.5 571v2M551.5 625v2M551.5 670v4M551.5 684v1M551.5 721v3M551.5 768v3M552.5 15v4M552.5 99v14M552.5 136v2M552.5 367v2M552.5 419v2M552.5 573v2M552.5 668v2M552.5 685v2M552.5 724v2M552.5 767v1M553.5 19v6M553.5 92v7M553.5 113v5M553.5 138v2M553.5 146v4M553.5 295v3M553.5 412v2M553.5 458v2M553.5 628v2M553.5 666v2M553.5 687v3M553.5 726v3M553.5 800v2M554.5 25v3M554.5 140v2M554.5 150v17M554.5 290v5M554.5 370v2M554.5 406v6M554.5 456v2M554.5 532v2M554.5 664v2M554.5 690v2M554.5 729v2M554.5 765v1M554.5 802v4M555.5 28v4M555.5 142v1M555.5 282v8M555.5 372v2M555.5 391v15M555.5 453v3M555.5 534v2M555.5 576v1M555.5 692v5M555.5 731v2M555.5 763v2M556.5 32v3M556.5 38v3M556.5 374v2M556.5 424v2M556.5 450v3M556.5 536v2M556.5 577v4M556.5 697v6M556.5 760v3M557.5 35v1M557.5 41v7M557.5 376v4M557.5 387v2M557.5 449v1M557.5 538v2M557.5 547v2M557.5 581v4M557.5 632v1M557.5 703v3M557.5 757v3M558.5 48v5M558.5 218v2M558.5 380v4M558.5 540v2M558.5 585v3M558.5 633v2M558.5 755v2M559.5 384v1M559.5 542v2M559.5 588v4M559.5 635v2M559.5 751v4M560.5 215v2M560.5 249v15M560.5 429v2M560.5 592v3M560.5 637v2M560.5 746v5M561.5 264v8M561.5 595v4M561.5 639v2M561.5 740v6M562.5 212v2M562.5 245v2M562.5 272v3M562.5 599v1M562.5 641v2M562.5 738v2M563.5 87v2M563.5 209v3M563.5 433v2M563.5 643v2M564.5 81v6M564.5 204v5M564.5 493v2M564.5 497v1M565.5 75v6M565.5 202v2M565.5 241v2M565.5 436v2M565.5 491v2M565.5 498v3M565.5 521v2M565.5 646v2M566.5 6v1M566.5 66v9M566.5 438v2M566.5 489v2M566.5 501v3M567.5 60v6M567.5 321v2M567.5 487v2M567.5 504v3M567.5 571v1M567.5 649v2M568.5 237v2M568.5 323v2M568.5 348v5M568.5 441v2M568.5 473v14M568.5 507v3M568.5 517v2M568.5 567v4M568.5 651v2M568.5 733v4M568.5 772v1M569.5 228v2M569.5 325v3M569.5 336v12M569.5 510v4M569.5 564v3M569.5 678v5M569.5 725v8M569.5 773v2M570.5 172v7M570.5 193v6M570.5 328v2M570.5 333v2M570.5 514v2M570.5 561v3M570.5 654v2M570.5 670v8M570.5 720v5M570.5 775v2M571.5 124v2M571.5 179v14M571.5 233v2M571.5 330v3M571.5 559v2M571.5 665v5M571.5 717v3M571.5 777v2M572.5 94v1M572.5 121v2M572.5 126v6M572.5 444v2M572.5 557v2M572.5 660v5M572.5 714v3M572.5 779v3M573.5 95v2M573.5 132v4M573.5 446v6M573.5 555v2M573.5 658v2M573.5 711v3M573.5 782v2M574.5 97v2M574.5 118v2M574.5 136v2M574.5 162v7M574.5 272v1M574.5 441v1M574.5 452v8M574.5 553v2M574.5 603v4M574.5 704v2M574.5 708v3M574.5 784v2M575.5 24v5M575.5 56v2M575.5 99v2M575.5 116v2M575.5 139v2M575.5 148v14M575.5 269v3M575.5 408v3M575.5 439v2M575.5 460v6M575.5 551v2M575.5 607v14M575.5 700v4M575.5 786v2M576.5 18v6M576.5 101v3M576.5 142v6M576.5 266v3M576.5 406v2M576.5 411v2M576.5 436v3M576.5 550v1M576.5 697v3M576.5 788v2M577.5 16v2M577.5 31v2M577.5 53v2M577.5 104v6M577.5 113v2M577.5 260v6M577.5 403v3M577.5 413v2M577.5 434v2M577.5 596v3M577.5 694v3M578.5 14v2M578.5 110v2M578.5 204v1M578.5 255v5M578.5 401v2M578.5 415v2M578.5 432v2M578.5 588v8M578.5 655v2M578.5 692v2M579.5 12v2M579.5 50v2M579.5 205v2M579.5 387v14M579.5 430v2M579.5 584v4M579.5 653v2M579.5 690v2M579.5 792v5M580.5 35v2M580.5 207v2M580.5 380v6M580.5 428v2M580.5 797v9M581.5 209v2M581.5 324v5M581.5 362v18M581.5 426v2M581.5 535v7M581.5 650v2M581.5 745v5M581.5 759v2M582.5 211v2M582.5 317v7M582.5 531v4M582.5 542v5M582.5 648v2M582.5 741v4M582.5 750v3M583.5 7v3M583.5 213v3M583.5 315v2M583.5 423v2M583.5 527v4M583.5 646v2M583.5 753v2M584.5 216v2M584.5 313v2M584.5 421v2M584.5 525v2M584.5 755v1M584.5 789v2M585.5 218v2M585.5 298v2M585.5 302v2M585.5 310v3M585.5 643v2M585.5 787v2M586.5 220v2M586.5 304v2M586.5 308v2M586.5 332v1M586.5 785v2M587.5 222v2M587.5 295v2M587.5 307v1M587.5 333v2M587.5 472v2M588.5 84v2M588.5 224v2M588.5 335v3M588.5 474v4M588.5 625v2M588.5 628v2M588.5 639v2M588.5 714v1M588.5 782v2M589.5 79v5M589.5 226v2M589.5 292v2M589.5 338v2M589.5 478v17M589.5 715v4M589.5 780v2M590.5 75v4M590.5 228v4M590.5 290v2M590.5 340v2M590.5 495v4M590.5 551v3M590.5 622v2M590.5 719v4M590.5 730v4M590.5 778v2M591.5 40v3M591.5 72v3M591.5 171v3M591.5 232v6M591.5 244v4M591.5 288v2M591.5 342v5M591.5 499v4M591.5 554v8M591.5 620v2M591.5 632v2M591.5 635v2M591.5 669v6M591.5 723v7M592.5 7v2M592.5 32v8M592.5 174v6M592.5 238v6M592.5 286v2M592.5 347v6M592.5 503v9M592.5 562v9M592.5 675v7M592.5 775v2M593.5 27v5M593.5 180v4M593.5 250v2M593.5 284v2M593.5 353v3M593.5 512v6M593.5 571v6M593.5 617v2M593.5 773v2M594.5 25v2M594.5 138v2M594.5 184v3M594.5 283v1M594.5 416v2M595.5 23v2M595.5 132v6M595.5 141v2M595.5 187v2M595.5 412v4M595.5 614v2M595.5 770v2M596.5 21v2M596.5 128v4M596.5 189v3M596.5 408v4M596.5 612v2M597.5 19v2M597.5 125v3M597.5 144v2M597.5 192v1M597.5 404v4M597.5 463v3M597.5 767v2M598.5 17v2M598.5 121v4M598.5 400v4M598.5 454v9M598.5 609v2M598.5 765v2M599.5 15v1M599.5 118v3M599.5 396v4M599.5 421v2M599.5 449v5M600.5 117v1M600.5 392v4M600.5 423v2M600.5 548v1M600.5 606v2M600.5 637v2M601.5 277v2M601.5 391v1M601.5 425v2M601.5 546v2M601.5 582v5M601.5 604v2M601.5 639v2M602.5 160v3M602.5 260v5M602.5 272v5M602.5 318v7M602.5 427v3M602.5 544v2M602.5 587v8M602.5 641v2M603.5 154v6M603.5 163v2M603.5 265v7M603.5 314v4M603.5 325v5M603.5 387v2M603.5 430v2M603.5 542v2M603.5 595v6M603.5 643v2M603.5 762v2M604.5 49v2M604.5 151v3M604.5 313v1M604.5 382v5M604.5 432v2M604.5 540v2M604.5 601v2M604.5 703v3M604.5 760v2M605.5 51v4M605.5 108v6M605.5 377v5M605.5 538v2M605.5 646v2M605.5 697v6M605.5 758v2M606.5 55v4M606.5 97v11M606.5 167v2M606.5 373v4M606.5 489v2M606.5 536v2M606.5 648v2M606.5 693v4M606.5 708v2M606.5 756v2M606.5 796v4M607.5 44v2M607.5 59v3M607.5 147v2M607.5 203v9M607.5 355v2M607.5 370v3M607.5 484v5M607.5 532v4M607.5 692v1M607.5 754v2M607.5 800v6M608.5 197v6M608.5 212v4M608.5 351v4M608.5 368v2M608.5 437v2M608.5 473v11M608.5 518v1M608.5 528v4M608.5 651v2M608.5 752v2M609.5 144v2M609.5 216v5M609.5 343v8M609.5 365v3M609.5 515v3M609.5 520v2M609.5 524v4M609.5 554v1M609.5 653v2M609.5 712v2M609.5 750v2M610.5 221v2M610.5 337v6M610.5 362v3M610.5 393v2M610.5 513v2M610.5 523v1M610.5 555v4M610.5 655v2M610.5 748v2M611.5 141v2M611.5 361v1M611.5 395v2M611.5 510v3M611.5 559v4M611.5 746v2M612.5 139v2M612.5 192v2M612.5 251v3M612.5 291v9M612.5 397v2M612.5 502v8M612.5 563v4M612.5 744v2M612.5 774v1M612.5 787v2M613.5 188v4M613.5 244v7M613.5 286v5M613.5 300v5M613.5 399v2M613.5 496v6M613.5 567v5M613.5 717v2M613.5 742v2M613.5 775v4M613.5 783v4M614.5 20v13M614.5 136v2M614.5 174v14M614.5 237v7M614.5 305v3M614.5 401v2M614.5 443v1M614.5 572v2M614.5 726v15M614.5 779v4M615.5 33v3M615.5 134v2M615.5 230v7M615.5 444v4M615.5 659v7M615.5 723v3M616.5 131v3M616.5 227v3M616.5 440v1M616.5 448v3M616.5 608v9M616.5 666v12M616.5 721v2M617.5 68v3M617.5 128v3M617.5 405v2M617.5 438v2M617.5 451v4M617.5 617v5M617.5 678v6M618.5 71v17M618.5 125v3M618.5 436v2M618.5 455v7M618.5 622v3M618.5 684v3M619.5 122v3M619.5 281v2M619.5 408v2M619.5 434v2M619.5 462v5M620.5 121v1M620.5 279v2M620.5 432v2M620.5 792v1M621.5 277v2M621.5 430v2M621.5 793v2M622.5 275v2M622.5 428v2M622.5 526v1M622.5 795v2M623.5 11v2M623.5 273v2M623.5 426v2M623.5 470v1M623.5 527v4M623.5 797v2M624.5 9v2M624.5 224v2M624.5 271v2M624.5 424v2M624.5 471v4M624.5 522v2M624.5 531v4M624.5 799v2M625.5 6v3M625.5 220v4M625.5 269v2M625.5 315v7M625.5 422v2M625.5 475v3M625.5 535v5M625.5 801v2M626.5 215v5M626.5 322v7M626.5 363v1M626.5 420v2M626.5 478v9M626.5 540v4M626.5 587v7M626.5 653v1M626.5 690v26M626.5 752v2M626.5 803v2M627.5 210v5M627.5 266v2M627.5 364v3M627.5 418v2M627.5 487v7M627.5 544v2M627.5 585v2M627.5 594v5M627.5 651v2M627.5 656v1M628.5 122v1M628.5 206v4M628.5 264v2M628.5 367v3M628.5 416v2M628.5 583v2M628.5 649v2M628.5 657v2M629.5 52v7M629.5 102v7M629.5 123v2M629.5 150v13M629.5 202v4M629.5 262v2M629.5 370v9M629.5 581v2M629.5 647v2M629.5 659v3M629.5 756v2M630.5 48v4M630.5 59v4M630.5 96v6M630.5 109v6M630.5 118v2M630.5 125v3M630.5 163v6M630.5 198v4M630.5 260v2M630.5 379v6M630.5 579v2M630.5 633v1M630.5 645v2M630.5 662v2M631.5 44v4M631.5 93v3M631.5 115v2M631.5 128v3M631.5 196v2M631.5 258v2M631.5 357v2M631.5 630v2M631.5 635v10M631.5 664v2M632.5 43v1M632.5 131v2M632.5 230v2M632.5 352v5M632.5 496v3M632.5 627v3M632.5 666v3M632.5 760v2M632.5 763v2M633.5 133v2M633.5 289v2M633.5 348v4M633.5 499v6M633.5 625v2M633.5 669v2M633.5 766v2M634.5 135v2M634.5 233v2M634.5 291v2M634.5 340v8M634.5 505v4M634.5 622v3M634.5 671v2M634.5 768v2M635.5 137v2M635.5 293v2M635.5 336v4M635.5 411v3M635.5 509v4M635.5 620v2M635.5 673v2M635.5 770v2M636.5 139v2M636.5 180v6M636.5 295v2M636.5 405v6M636.5 513v2M636.5 618v2M636.5 675v2M636.5 772v2M637.5 141v1M637.5 175v5M637.5 186v4M637.5 237v2M637.5 297v5M637.5 396v9M637.5 551v3M637.5 616v2M637.5 774v3M638.5 190v2M638.5 239v4M638.5 302v3M638.5 390v6M638.5 554v4M638.5 678v2M638.5 777v5M639.5 243v7M639.5 448v5M639.5 489v2M639.5 558v9M639.5 613v2M639.5 782v4M640.5 250v3M640.5 445v2M640.5 453v6M640.5 487v2M640.5 567v5M640.5 611v2M640.5 681v2M640.5 786v2M641.5 417v1M641.5 459v2M641.5 485v2M641.5 683v2M642.5 28v2M642.5 68v15M642.5 418v2M642.5 461v2M642.5 483v2M642.5 546v1M642.5 608v2M642.5 717v3M642.5 731v6M643.5 83v4M643.5 441v2M643.5 463v2M643.5 481v2M643.5 542v4M643.5 720v11M644.5 538v4M645.5 422v2M645.5 478v2M645.5 534v4M646.5 33v1M646.5 308v3M646.5 424v2M646.5 476v2M646.5 530v4M646.5 635v2M646.5 753v3M647.5 63v1M647.5 143v3M647.5 255v1M647.5 311v7M647.5 364v3M647.5 426v2M647.5 474v2M647.5 526v4M647.5 637v2M647.5 687v5M647.5 742v2M647.5 749v4M647.5 793v2M648.5 59v4M648.5 141v2M648.5 146v2M648.5 253v2M648.5 258v4M648.5 272v7M648.5 318v6M648.5 367v6M648.5 381v4M648.5 428v3M648.5 472v2M648.5 522v4M648.5 692v8M648.5 744v5M648.5 795v2M648.5 800v6M649.5 55v4M649.5 139v2M649.5 148v2M649.5 198v2M649.5 251v2M649.5 262v10M649.5 324v6M649.5 373v8M649.5 431v2M649.5 470v2M649.5 521v1M649.5 640v2M649.5 700v6M649.5 758v2M649.5 788v2M649.5 798v2M650.5 51v4M650.5 137v2M650.5 150v2M650.5 200v5M650.5 249v2M650.5 330v2M650.5 433v1M650.5 576v2M650.5 706v4M651.5 46v5M651.5 108v4M651.5 135v2M651.5 152v2M651.5 205v7M651.5 247v2M651.5 578v2M651.5 643v2M652.5 38v8M652.5 102v6M652.5 133v2M652.5 154v3M652.5 212v5M652.5 245v2M652.5 580v2M652.5 645v2M653.5 35v3M653.5 99v3M653.5 157v3M653.5 243v2M654.5 96v3M654.5 160v3M654.5 241v2M654.5 583v2M654.5 782v2M655.5 19v15M655.5 95v1M655.5 163v1M655.5 239v2M655.5 585v2M655.5 679v2M655.5 713v2M656.5 15v4M656.5 237v2M656.5 283v2M656.5 587v3M656.5 673v6M656.5 715v4M657.5 11v4M657.5 127v2M657.5 191v2M657.5 235v2M657.5 357v1M657.5 590v6M657.5 608v3M657.5 651v2M657.5 667v6M657.5 719v4M657.5 778v2M658.5 9v2M658.5 119v2M658.5 189v2M658.5 233v2M658.5 286v2M658.5 353v4M658.5 596v5M658.5 605v2M658.5 611v6M658.5 661v6M658.5 723v8M658.5 776v2M659.5 7v1M659.5 187v2M659.5 288v2M659.5 296v5M659.5 349v4M659.5 601v4M659.5 617v4M659.5 659v2M659.5 731v5M660.5 230v2M660.5 291v5M660.5 334v2M660.5 342v7M660.5 501v3M660.5 513v5M660.5 773v2M661.5 184v2M661.5 228v2M661.5 330v4M661.5 337v5M661.5 470v1M661.5 498v2M661.5 504v9M662.5 86v5M662.5 182v2M662.5 226v2M662.5 326v4M662.5 391v10M662.5 471v3M662.5 545v1M662.5 770v2M663.5 78v8M663.5 180v2M663.5 224v2M663.5 323v3M663.5 388v2M663.5 401v5M663.5 474v3M663.5 542v3M663.5 547v2M663.5 768v2M664.5 72v6M664.5 178v2M664.5 321v2M664.5 459v8M664.5 477v3M664.5 494v2M664.5 540v2M664.5 549v2M665.5 46v10M665.5 69v3M665.5 176v2M665.5 319v2M665.5 444v15M665.5 480v3M665.5 537v3M665.5 552v2M665.5 567v2M665.5 652v2M665.5 763v4M666.5 39v7M666.5 56v7M666.5 93v2M666.5 174v2M666.5 263v2M666.5 317v2M666.5 384v2M666.5 438v6M666.5 483v2M666.5 534v3M666.5 554v4M666.5 563v4M666.5 647v5M666.5 755v8M667.5 63v3M667.5 172v2M667.5 315v2M667.5 485v3M667.5 490v2M667.5 530v4M667.5 558v5M667.5 643v4M667.5 748v7M668.5 96v2M668.5 222v1M668.5 313v2M668.5 488v1M668.5 523v2M668.5 527v3M668.5 641v2M668.5 744v4M669.5 219v3M669.5 311v2M669.5 367v3M669.5 422v13M669.5 526v1M669.5 638v3M669.5 739v5M670.5 99v2M670.5 216v3M670.5 310v1M670.5 370v4M670.5 418v4M670.5 636v2M670.5 737v2M670.5 797v3M671.5 213v3M671.5 374v4M671.5 414v4M671.5 598v1M671.5 633v3M671.5 800v6M672.5 102v2M672.5 147v2M672.5 211v2M672.5 378v2M672.5 413v1M672.5 595v3M672.5 631v2M672.5 712v1M673.5 144v2M673.5 149v6M673.5 209v2M673.5 271v2M673.5 591v4M673.5 630v1M673.5 709v3M673.5 720v7M674.5 105v2M674.5 142v2M674.5 155v14M674.5 588v3M674.5 705v4M674.5 716v4M674.5 727v2M675.5 124v17M675.5 170v2M675.5 206v2M675.5 585v3M675.5 702v3M675.5 729v3M676.5 108v2M676.5 204v2M676.5 465v1M676.5 581v4M676.5 698v4M676.5 732v1M676.5 770v5M677.5 173v2M677.5 276v2M677.5 463v2M677.5 577v4M677.5 694v4M677.5 775v7M678.5 175v2M678.5 201v2M678.5 280v1M678.5 461v2M678.5 575v2M678.5 690v4M678.5 766v2M678.5 782v2M679.5 112v2M679.5 282v4M679.5 459v2M679.5 627v1M679.5 689v1M679.5 784v2M680.5 178v2M680.5 286v4M680.5 357v1M680.5 457v2M680.5 625v2M680.5 686v2M680.5 786v2M681.5 115v2M681.5 290v4M681.5 353v4M681.5 455v2M681.5 623v2M681.5 681v5M681.5 788v2M682.5 12v3M682.5 69v1M682.5 181v2M682.5 232v13M682.5 294v4M682.5 340v4M682.5 349v4M682.5 408v2M682.5 621v2M682.5 676v5M683.5 15v8M683.5 66v2M683.5 70v4M683.5 183v2M683.5 298v4M683.5 344v5M683.5 406v2M683.5 452v2M683.5 507v2M683.5 572v1M683.5 619v2M683.5 671v5M684.5 23v9M684.5 74v6M684.5 185v2M684.5 246v2M684.5 302v5M684.5 404v2M684.5 450v2M684.5 531v2M684.5 568v4M684.5 617v2M684.5 666v5M685.5 32v6M685.5 46v18M685.5 80v5M685.5 116v1M685.5 187v3M685.5 307v2M685.5 402v2M685.5 533v3M685.5 564v4M685.5 614v3M685.5 661v5M686.5 39v7M686.5 114v2M686.5 190v3M686.5 400v2M686.5 447v2M686.5 536v2M686.5 560v4M686.5 575v1M686.5 610v4M686.5 659v2M687.5 111v3M687.5 193v2M687.5 386v2M687.5 396v4M687.5 538v2M687.5 556v4M687.5 576v2M687.5 607v3M687.5 803v3M688.5 109v2M688.5 195v1M688.5 221v8M688.5 392v4M688.5 444v2M688.5 540v2M688.5 551v5M688.5 578v2M688.5 606v1M688.5 757v4M688.5 799v4M689.5 106v3M689.5 162v2M689.5 210v11M689.5 390v2M689.5 442v2M689.5 500v2M689.5 542v2M689.5 549v2M689.5 580v2M689.5 750v7M689.5 796v3M690.5 104v2M690.5 160v2M690.5 205v5M690.5 253v2M690.5 544v2M690.5 582v2M690.5 656v1M690.5 744v6M690.5 795v1M691.5 100v4M691.5 158v2M691.5 200v5M691.5 313v1M691.5 375v2M691.5 584v2M691.5 653v3M691.5 694v2M691.5 740v4M692.5 96v4M692.5 156v2M692.5 198v2M692.5 314v3M692.5 373v2M692.5 438v2M692.5 483v13M692.5 586v3M692.5 651v2M693.5 92v4M693.5 257v2M693.5 317v2M693.5 371v2M693.5 434v4M693.5 479v4M693.5 498v2M693.5 589v3M693.5 648v3M694.5 91v1M694.5 153v2M694.5 259v3M694.5 269v4M694.5 319v3M694.5 333v1M694.5 369v2M694.5 430v4M694.5 475v4M694.5 592v2M694.5 644v4M695.5 262v7M695.5 322v5M695.5 335v2M695.5 367v2M695.5 417v13M695.5 473v2M695.5 501v2M695.5 594v3M695.5 640v4M696.5 327v4M696.5 337v3M696.5 366v1M696.5 597v3M696.5 639v1M696.5 700v2M697.5 149v2M697.5 340v2M697.5 600v2M697.5 702v2M698.5 171v2M698.5 194v2M698.5 307v2M698.5 342v3M698.5 505v2M698.5 602v1M699.5 188v6M699.5 305v2M699.5 345v2M699.5 413v2M699.5 507v3M699.5 705v2M699.5 766v1M700.5 123v3M700.5 181v7M700.5 303v2M700.5 347v3M700.5 409v4M700.5 446v5M700.5 510v4M700.5 767v3M701.5 126v5M701.5 175v6M701.5 279v5M701.5 301v2M701.5 350v3M701.5 405v4M701.5 451v16M701.5 514v1M701.5 708v2M701.5 720v8M701.5 770v3M702.5 131v3M702.5 284v16M702.5 353v2M702.5 392v13M702.5 629v6M702.5 710v2M702.5 717v3M702.5 728v6M702.5 773v3M703.5 134v2M703.5 250v1M703.5 355v3M703.5 617v12M703.5 714v3M703.5 776v3M704.5 34v2M704.5 85v2M704.5 136v2M704.5 246v4M704.5 358v3M704.5 609v8M704.5 710v4M704.5 779v3M705.5 30v4M705.5 80v5M705.5 138v2M705.5 243v3M705.5 361v1M705.5 548v14M705.5 605v4M705.5 707v3M705.5 782v4M706.5 26v4M706.5 76v4M706.5 140v2M706.5 234v9M706.5 562v4M706.5 667v12M706.5 705v2M706.5 786v4M707.5 19v7M707.5 74v2M707.5 142v1M707.5 145v2M707.5 228v6M707.5 566v4M707.5 702v3M707.5 737v2M707.5 790v2M708.5 13v6M708.5 71v3M708.5 147v3M708.5 525v13M708.5 570v1M708.5 699v3M708.5 739v4M708.5 793v3M709.5 41v2M709.5 69v2M709.5 150v3M709.5 520v5M709.5 538v6M709.5 697v2M709.5 743v4M709.5 796v7M710.5 43v6M710.5 68v1M710.5 109v5M710.5 153v2M710.5 695v2M710.5 747v3M710.5 803v3M711.5 9v2M711.5 49v6M711.5 95v14M711.5 155v2M711.5 418v5M711.5 693v2M711.5 750v2M712.5 6v3M712.5 55v6M712.5 157v2M712.5 210v9M712.5 366v1M712.5 423v18M712.5 639v2M713.5 61v3M713.5 159v2M713.5 205v5M713.5 219v6M713.5 329v1M713.5 367v3M713.5 641v2M713.5 690v2M713.5 789v2M714.5 161v2M714.5 203v2M714.5 274v2M714.5 327v2M714.5 370v4M714.5 381v6M714.5 643v2M714.5 688v2M714.5 754v2M715.5 163v2M715.5 272v2M715.5 325v2M715.5 374v7M715.5 472v1M715.5 576v4M715.5 645v2M715.5 786v2M716.5 165v2M716.5 323v2M716.5 473v3M716.5 580v6M716.5 595v5M716.5 647v2M717.5 167v1M717.5 269v2M717.5 321v2M717.5 476v2M717.5 586v9M717.5 649v2M717.5 758v2M717.5 783v2M718.5 319v2M718.5 478v3M718.5 651v3M719.5 235v8M719.5 317v2M719.5 481v6M719.5 654v4M719.5 780v2M720.5 66v2M720.5 179v20M720.5 231v4M720.5 243v6M720.5 265v2M720.5 315v2M720.5 358v3M720.5 487v4M720.5 658v1M721.5 68v2M721.5 172v7M721.5 249v3M721.5 312v3M721.5 352v6M721.5 393v5M721.5 547v2M721.5 777v2M722.5 137v2M722.5 283v3M722.5 310v2M722.5 347v5M722.5 398v9M722.5 500v16M722.5 549v4M722.5 604v22M722.5 775v2M723.5 71v2M723.5 254v2M723.5 286v6M723.5 308v2M723.5 344v3M723.5 407v4M723.5 495v5M723.5 553v4M723.5 626v6M724.5 260v2M724.5 292v6M724.5 307v1M724.5 340v4M724.5 557v8M724.5 772v2M725.5 74v2M725.5 298v5M725.5 339v1M725.5 565v5M725.5 660v2M725.5 770v2M726.5 76v2M726.5 303v2M726.5 444v2M726.5 662v5M726.5 714v11M727.5 78v3M727.5 131v2M727.5 446v2M727.5 667v4M727.5 725v4M727.5 767v2M728.5 12v3M728.5 81v5M728.5 439v2M728.5 448v2M728.5 671v10M728.5 729v4M728.5 765v2M729.5 15v6M729.5 86v5M729.5 128v2M729.5 450v2M729.5 681v6M729.5 733v1M730.5 21v4M730.5 91v2M730.5 101v9M730.5 126v2M730.5 435v2M730.5 452v6M731.5 7v2M731.5 25v2M731.5 94v7M731.5 110v5M731.5 124v2M731.5 155v4M731.5 430v5M731.5 458v4M732.5 27v2M732.5 115v2M732.5 122v2M732.5 153v2M732.5 159v6M732.5 365v1M732.5 417v13M732.5 463v2M733.5 120v2M733.5 150v3M733.5 165v2M733.5 366v3M733.5 465v4M733.5 762v1M734.5 30v2M734.5 149v1M734.5 223v6M734.5 369v3M734.5 469v4M734.5 604v1M734.5 690v11M734.5 759v3M734.5 802v3M735.5 32v2M735.5 201v22M735.5 372v3M735.5 473v10M735.5 520v2M735.5 523v2M735.5 605v3M735.5 653v3M735.5 701v4M735.5 756v3M736.5 259v1M736.5 307v2M736.5 375v2M736.5 483v7M736.5 525v2M736.5 535v5M736.5 608v4M736.5 647v6M736.5 753v3M737.5 260v3M737.5 309v5M737.5 377v2M737.5 527v8M737.5 599v2M737.5 612v3M737.5 637v10M737.5 740v13M738.5 36v27M738.5 263v3M738.5 314v5M738.5 379v3M738.5 516v2M738.5 568v2M738.5 594v5M738.5 615v2M739.5 266v3M739.5 319v5M739.5 382v2M739.5 564v4M739.5 590v4M739.5 617v2M740.5 269v4M740.5 324v4M740.5 384v1M740.5 513v2M740.5 560v4M740.5 586v4M740.5 619v2M740.5 768v1M741.5 273v5M741.5 328v4M741.5 555v5M741.5 583v3M741.5 621v2M741.5 684v1M741.5 769v4M741.5 795v2M742.5 233v2M742.5 278v2M742.5 332v2M742.5 550v5M742.5 580v3M742.5 623v2M742.5 681v3M742.5 773v4M742.5 793v2M743.5 235v2M743.5 461v1M743.5 509v2M743.5 548v2M743.5 577v3M743.5 625v2M743.5 678v3M743.5 710v7M743.5 777v8M743.5 791v2M744.5 228v2M744.5 237v2M744.5 459v2M744.5 576v1M744.5 627v2M744.5 675v3M744.5 717v19M744.5 785v5M745.5 239v2M745.5 337v4M745.5 457v2M745.5 629v1M745.5 672v3M746.5 69v2M746.5 128v16M746.5 191v6M746.5 241v3M746.5 284v4M746.5 297v3M746.5 341v7M746.5 455v2M746.5 505v2M746.5 668v4M747.5 71v4M747.5 123v5M747.5 184v7M747.5 244v4M747.5 288v9M747.5 348v3M747.5 453v2M747.5 664v4M748.5 75v4M748.5 182v2M748.5 248v1M748.5 351v4M748.5 449v4M748.5 663v1M749.5 8v3M749.5 30v2M749.5 79v4M749.5 179v3M749.5 355v2M749.5 388v1M749.5 443v6M750.5 11v6M750.5 24v6M750.5 83v2M750.5 177v2M750.5 201v2M750.5 389v3M750.5 440v3M751.5 17v7M751.5 176v1M751.5 392v2M751.5 436v3M751.5 492v2M751.5 499v2M752.5 394v3M752.5 432v4M752.5 488v4M752.5 495v2M753.5 206v2M753.5 215v5M753.5 397v15M753.5 428v4M753.5 484v4M753.5 763v2M754.5 103v16M754.5 208v7M754.5 251v1M754.5 425v3M754.5 478v6M754.5 759v4M755.5 98v5M755.5 252v3M755.5 368v10M755.5 423v2M755.5 471v7M755.5 710v2M755.5 754v5M756.5 93v5M756.5 171v1M756.5 255v2M756.5 362v6M756.5 378v3M756.5 421v2M756.5 468v3M756.5 706v2M756.5 750v4M757.5 91v2M757.5 168v3M757.5 257v3M757.5 305v19M757.5 419v2M757.5 632v2M757.5 713v2M757.5 748v2M758.5 35v2M758.5 89v1M758.5 165v3M758.5 260v4M758.5 324v7M758.5 417v2M758.5 634v5M758.5 733v2M758.5 746v2M759.5 37v4M759.5 161v4M759.5 264v5M759.5 500v5M759.5 550v1M759.5 639v4M759.5 702v2M759.5 731v2M759.5 737v2M759.5 744v2M760.5 41v4M760.5 157v4M760.5 269v4M760.5 505v8M760.5 547v2M760.5 552v1M760.5 575v2M760.5 643v5M760.5 696v6M760.5 729v2M760.5 742v2M761.5 45v5M761.5 155v2M761.5 273v2M761.5 513v4M761.5 545v2M761.5 553v3M761.5 577v5M761.5 648v4M761.5 690v6M761.5 727v2M761.5 740v1M762.5 50v4M762.5 517v3M762.5 543v2M762.5 556v3M762.5 567v6M762.5 582v5M762.5 652v4M762.5 659v3M762.5 725v2M763.5 54v2M763.5 83v2M763.5 520v4M763.5 541v2M763.5 559v8M763.5 587v4M763.5 656v3M763.5 662v3M763.5 723v2M763.5 793v1M763.5 801v5M764.5 243v4M764.5 524v1M764.5 537v4M764.5 591v3M764.5 665v4M764.5 721v2M764.5 789v4M764.5 796v5M765.5 124v6M765.5 238v5M765.5 333v1M765.5 457v6M765.5 531v6M765.5 594v4M765.5 669v3M765.5 720v1M765.5 786v3M766.5 130v7M766.5 236v2M766.5 334v3M766.5 450v7M766.5 528v3M766.5 598v3M766.5 672v2M766.5 782v4M767.5 137v4M767.5 234v2M767.5 296v7M767.5 337v2M767.5 601v1M767.5 674v2M767.5 770v12M768.5 141v3M768.5 232v2M768.5 283v13M768.5 339v3M768.5 603v2M768.5 620v3M769.5 6v2M769.5 144v4M769.5 278v5M769.5 342v3M769.5 601v2M769.5 606v3M769.5 615v5M769.5 677v2M770.5 8v2M770.5 26v2M770.5 148v1M770.5 345v3M770.5 415v1M770.5 609v6M770.5 679v2M771.5 10v2M771.5 22v4M771.5 348v4M771.5 411v4M772.5 12v2M772.5 17v5M772.5 352v3M772.5 408v3M772.5 597v2M772.5 682v2M773.5 15v2M773.5 355v1M773.5 404v4M774.5 271v5M774.5 394v10M775.5 181v16M775.5 259v12M775.5 385v9M775.5 529v2M775.5 593v2M776.5 197v7M776.5 205v2M776.5 254v5M776.5 442v2M776.5 531v4M776.5 747v1M777.5 57v2M777.5 60v2M777.5 207v2M777.5 420v11M777.5 535v4M777.5 651v1M777.5 744v2M777.5 748v3M778.5 62v2M778.5 209v2M778.5 431v3M778.5 539v4M778.5 589v2M778.5 649v2M778.5 751v4M779.5 54v2M779.5 64v2M779.5 211v2M779.5 323v2M779.5 382v1M779.5 434v2M779.5 438v2M779.5 471v19M779.5 543v3M779.5 708v7M779.5 741v2M779.5 755v3M780.5 52v2M780.5 66v2M780.5 213v2M780.5 319v4M780.5 379v3M780.5 436v1M780.5 490v5M780.5 546v4M780.5 694v14M780.5 758v4M780.5 766v2M781.5 103v15M781.5 215v2M781.5 316v3M781.5 326v2M781.5 376v3M781.5 550v1M781.5 585v2M781.5 645v2M781.5 688v6M781.5 738v2M781.5 762v1M781.5 768v2M782.5 49v2M782.5 98v5M782.5 217v2M782.5 314v2M782.5 373v3M782.5 583v2M782.5 770v2M783.5 219v2M783.5 311v3M783.5 370v3M783.5 498v3M783.5 581v2M783.5 642v2M783.5 772v2M784.5 46v2M784.5 221v1M784.5 310v1M784.5 367v3M784.5 501v6M784.5 579v2M784.5 639v3M784.5 774v2M785.5 71v3M785.5 93v2M785.5 147v7M785.5 173v3M785.5 331v2M785.5 364v3M785.5 507v5M785.5 577v2M785.5 636v3M785.5 776v2M786.5 43v2M786.5 74v7M786.5 87v6M786.5 141v6M786.5 154v6M786.5 166v7M786.5 361v3M786.5 512v2M786.5 575v2M786.5 635v1M786.5 683v2M786.5 732v2M786.5 778v2M786.5 798v8M787.5 11v2M787.5 14v2M787.5 81v6M787.5 134v7M787.5 160v6M787.5 335v3M787.5 357v4M787.5 514v2M787.5 573v2M787.5 780v3M787.5 794v4M788.5 40v2M788.5 127v7M788.5 338v7M788.5 351v6M788.5 516v2M788.5 571v2M788.5 783v4M789.5 124v3M789.5 304v2M789.5 345v6M789.5 442v2M789.5 518v2M789.5 562v8M789.5 679v2M789.5 723v3M789.5 787v3M790.5 7v2M790.5 18v2M790.5 298v6M790.5 399v9M790.5 520v1M790.5 558v4M790.5 726v3M790.5 790v1M791.5 195v2M791.5 293v5M791.5 394v5M791.5 408v6M791.5 557v1M792.5 189v6M792.5 291v2M792.5 392v2M792.5 447v18M792.5 573v2M792.5 675v2M793.5 22v2M793.5 185v4M793.5 248v2M793.5 289v2M793.5 673v2M794.5 182v3M794.5 244v4M794.5 251v2M794.5 287v2M794.5 671v2M795.5 25v2M795.5 181v1M795.5 240v4M795.5 285v2M795.5 669v2M796.5 27v2M796.5 227v13M796.5 254v2M796.5 284v1M796.5 630v3M796.5 667v2M796.5 757v2M797.5 257v1M797.5 579v2M797.5 593v9M797.5 622v8M797.5 665v2M798.5 30v2M798.5 258v4M798.5 589v4M798.5 604v18M798.5 635v1M799.5 32v2M799.5 224v1M799.5 262v3M799.5 274v7M799.5 526v1M799.5 585v4M799.5 636v4M800.5 34v2M800.5 39v1M800.5 96v2M800.5 222v2M800.5 265v9M800.5 441v2M800.5 469v2M800.5 527v3M800.5 584v1M800.5 640v3M801.5 36v2M801.5 40v4M801.5 98v4M801.5 220v2M801.5 437v4M801.5 471v4M801.5 530v4M801.5 549v2M801.5 643v4M801.5 751v2M802.5 44v3M802.5 102v4M802.5 153v2M802.5 218v2M802.5 432v5M802.5 475v4M802.5 534v7M802.5 647v4M802.5 749v2M803.5 47v4M803.5 106v4M803.5 155v2M803.5 214v4M803.5 361v3M803.5 428v4M803.5 479v7M803.5 541v6M803.5 651v4M803.5 694v1M803.5 747v2M804.5 51v3M804.5 110v4M804.5 148v2M804.5 208v6M804.5 314v3M804.5 364v7M804.5 425v3M804.5 486v5M804.5 655v4M804.5 695v3M804.5 745v2M805.5 9v2M805.5 54v2M805.5 114v3M805.5 158v2M805.5 205v3M805.5 282v1M805.5 317v5M805.5 371v9M805.5 422v3M805.5 466v1M805.5 548v1M805.5 659v2M805.5 698v2M805.5 743v2M805.5 770v2M6 35.5h1M6 92.5h1M11 92.5h1M14 90.5h1M15 89.5h1M18 63.5h1M46 35.5h1M46 95.5h1M47 34.5h1M47 61.5h1M48 33.5h1M49 6.5h1M49 32.5h1M70 62.5h1M70 96.5h1M71 97.5h1M72 65.5h1M72 98.5h1M73 66.5h1M73 99.5h1M74 6.5h1M74 100.5h1M75 7.5h1M75 69.5h1M75 101.5h1M76 8.5h1M76 102.5h1M77 101.5h1M79 10.5h1M80 99.5h1M81 98.5h1M82 97.5h1M85 95.5h1M86 94.5h1M87 93.5h1M90 91.5h1M91 90.5h1M96 87.5h1M99 43.5h1M99 85.5h1M100 42.5h1M101 41.5h1M103 38.5h1M104 37.5h1M105 36.5h1M107 33.5h1M108 85.5h1M109 86.5h1M112 32.5h1M112 88.5h1M113 89.5h1M115 34.5h1M116 91.5h1M128 6.5h1M129 7.5h1M130 8.5h1M131 64.5h1M133 10.5h1M134 11.5h1M134 36.5h1M134 66.5h1M137 34.5h1M158 33.5h1M161 6.5h1M164 11.5h1M164 59.5h1M164 92.5h1M185 145.5h1M186 144.5h1M187 143.5h1M189 140.5h1M190 139.5h1M191 138.5h1M191 225.5h1M192 137.5h1M193 34.5h1M193 228.5h1M194 134.5h1M195 31.5h1M195 133.5h1M196 92.5h1M196 132.5h1M197 177.5h1M198 176.5h1M199 112.5h1M199 175.5h1M200 174.5h1M202 114.5h1M203 115.5h1M217 117.5h1M219 114.5h1M220 113.5h1M220 226.5h1M221 142.5h1M221 204.5h1M222 91.5h1M222 110.5h1M222 143.5h1M222 203.5h1M223 63.5h1M223 92.5h1M223 144.5h1M224 145.5h1M224 200.5h1M225 95.5h1M225 146.5h1M225 199.5h1M226 147.5h1M226 172.5h1M226 198.5h1M227 148.5h1M227 197.5h1M229 194.5h1M230 6.5h1M231 7.5h1M232 8.5h1M233 9.5h1M234 10.5h1M243 195.5h1M244 196.5h1M249 71.5h1M249 121.5h1M250 70.5h1M250 196.5h1M251 69.5h1M251 118.5h1M251 223.5h1M252 68.5h1M252 96.5h1M252 117.5h1M253 67.5h1M253 97.5h1M254 66.5h1M255 65.5h1M256 64.5h1M257 42.5h1M257 190.5h1M258 7.5h1M258 41.5h1M258 189.5h1M259 6.5h1M259 40.5h1M259 171.5h1M260 39.5h1M260 172.5h1M261 38.5h1M262 37.5h1M263 36.5h1M269 116.5h1M276 120.5h1M280 66.5h1M281 65.5h1M281 176.5h1M281 207.5h1M282 38.5h1M283 37.5h1M283 143.5h1M284 178.5h1M284 203.5h1M285 34.5h1M285 202.5h1M286 10.5h1M286 33.5h1M287 9.5h1M287 199.5h1M288 8.5h1M288 198.5h1M289 7.5h1M290 6.5h1M290 176.5h1M293 174.5h1M310 168.5h1M311 169.5h1M311 226.5h1M312 170.5h1M312 227.5h1M313 147.5h1M313 228.5h1M314 118.5h1M314 146.5h1M314 229.5h1M315 119.5h1M315 145.5h1M315 172.5h1M315 198.5h1M315 230.5h1M316 120.5h1M316 144.5h1M316 173.5h1M316 197.5h1M316 231.5h1M317 121.5h1M317 143.5h1M317 174.5h1M317 232.5h1M318 122.5h1M318 175.5h1M318 233.5h1M319 123.5h1M319 234.5h1M320 124.5h1M320 233.5h1M321 232.5h1M324 230.5h1M325 229.5h1M326 228.5h1M327 227.5h1M330 225.5h1M331 170.5h1M331 224.5h1M332 223.5h1M333 150.5h1M333 222.5h1M334 221.5h1M335 220.5h1M336 152.5h1M336 219.5h1M338 166.5h1M339 154.5h1M339 217.5h1M340 216.5h1M341 92.5h1M341 215.5h1M342 91.5h1M342 156.5h1M342 214.5h1M343 90.5h1M343 213.5h1M344 89.5h1M345 88.5h1M345 203.5h1M346 163.5h1M346 202.5h1M346 215.5h1M347 155.5h1M347 201.5h1M348 154.5h1M348 166.5h1M349 167.5h1M349 220.5h1M351 170.5h1M370 65.5h1M371 117.5h1M373 67.5h1M373 94.5h1M374 38.5h1M374 47.5h1M374 68.5h1M374 93.5h1M374 202.5h1M375 39.5h1M375 69.5h1M375 143.5h1M375 203.5h1M375 223.5h1M376 70.5h1M376 90.5h1M376 174.5h1M376 222.5h1M377 71.5h1M377 89.5h1M377 175.5h1M377 221.5h1M378 72.5h1M378 88.5h1M378 145.5h1M378 220.5h1M379 87.5h1M379 219.5h1M380 86.5h1M380 218.5h1M381 85.5h1M382 71.5h1M385 69.5h1M386 68.5h1M388 200.5h1M389 66.5h1M390 65.5h1M391 64.5h1M392 63.5h1M393 62.5h1M393 197.5h1M396 60.5h1M397 59.5h1M398 58.5h1M398 118.5h1M399 42.5h1M399 57.5h1M399 119.5h1M399 177.5h1M399 195.5h1M400 56.5h1M400 120.5h1M400 176.5h1M400 196.5h1M401 39.5h1M401 149.5h1M401 175.5h1M401 197.5h1M402 38.5h1M402 56.5h1M402 198.5h1M403 37.5h1M403 57.5h1M403 122.5h1M403 152.5h1M403 199.5h1M404 123.5h1M404 153.5h1M404 173.5h1M405 124.5h1M405 172.5h1M406 32.5h1M406 59.5h1M406 171.5h1M407 60.5h1M408 61.5h1M409 62.5h1M412 64.5h1M427 178.5h1M433 180.5h1M434 24.5h1M434 47.5h1M434 98.5h1M435 48.5h1M436 49.5h1M436 95.5h1M436 178.5h1M437 19.5h1M437 59.5h1M437 224.5h1M438 52.5h1M438 58.5h1M439 6.5h1M439 16.5h1M439 53.5h1M439 57.5h1M440 54.5h1M440 56.5h1M440 144.5h1M441 145.5h1M442 11.5h1M443 54.5h1M446 49.5h1M446 56.5h1M448 46.5h1M451 41.5h1M452 40.5h1M453 39.5h1M454 38.5h1M455 37.5h1M456 36.5h1M457 35.5h1M457 146.5h1M458 34.5h1M458 147.5h1M459 33.5h1M460 32.5h1M460 92.5h1M461 15.5h1M461 31.5h1M461 149.5h1M462 14.5h1M462 178.5h1M463 65.5h1M463 94.5h1M464 11.5h1M464 61.5h1M464 95.5h1M464 129.5h1M464 175.5h1M465 96.5h1M465 174.5h1M466 58.5h1M466 97.5h1M466 126.5h1M467 9.5h1M468 8.5h1M468 55.5h1M468 123.5h1M469 99.5h1M470 52.5h1M471 51.5h1M473 48.5h1M474 47.5h1M475 46.5h1M477 43.5h1M478 42.5h1M479 10.5h1M479 41.5h1M479 199.5h1M481 95.5h1M481 171.5h1M482 12.5h1M482 170.5h1M482 197.5h1M483 67.5h1M483 196.5h1M484 66.5h1M485 124.5h1M485 168.5h1M486 123.5h1M486 167.5h1M487 64.5h1M489 121.5h1M491 745.5h1M492 40.5h1M492 224.5h1M495 38.5h1M495 164.5h1M495 197.5h1M495 423.5h1M496 37.5h1M496 165.5h1M496 198.5h1M496 422.5h1M497 166.5h1M498 285.5h1M499 200.5h1M499 284.5h1M499 420.5h1M500 6.5h1M500 168.5h1M500 419.5h1M501 169.5h1M501 281.5h1M501 690.5h1M502 140.5h1M502 280.5h1M503 417.5h1M504 416.5h1M506 81.5h1M506 632.5h1M507 65.5h1M507 82.5h1M507 414.5h1M507 572.5h1M508 64.5h1M508 573.5h1M509 554.5h1M509 574.5h1M509 634.5h1M510 575.5h1M510 635.5h1M511 62.5h1M511 576.5h1M511 636.5h1M511 796.5h1M512 87.5h1M512 577.5h1M513 8.5h1M513 172.5h1M513 718.5h1M513 737.5h1M514 638.5h1M514 654.5h1M514 717.5h1M514 738.5h1M514 798.5h1M515 655.5h1M516 798.5h1M517 715.5h1M517 797.5h1M518 119.5h1M518 657.5h1M518 714.5h1M518 767.5h1M519 158.5h1M519 277.5h1M519 658.5h1M520 659.5h1M520 795.5h1M521 121.5h1M521 794.5h1M522 122.5h1M522 662.5h1M522 793.5h1M524 605.5h1M525 305.5h1M525 606.5h1M525 791.5h1M526 661.5h1M526 790.5h1M527 33.5h1M527 121.5h1M527 412.5h1M528 383.5h1M529 118.5h1M529 232.5h1M529 659.5h1M529 689.5h1M531 115.5h1M531 378.5h1M531 547.5h1M531 549.5h1M531 730.5h1M531 737.5h1M532 546.5h1M532 694.5h1M533 112.5h1M533 410.5h1M533 545.5h1M533 552.5h1M534 411.5h1M534 495.5h1M535 109.5h1M535 699.5h1M536 543.5h1M536 740.5h1M537 6.5h1M537 106.5h1M537 413.5h1M537 493.5h1M537 542.5h1M537 702.5h1M537 805.5h1M538 414.5h1M538 541.5h1M538 703.5h1M539 103.5h1M539 520.5h1M539 802.5h1M540 424.5h1M540 491.5h1M540 519.5h1M540 521.5h1M540 581.5h1M540 706.5h1M540 801.5h1M541 100.5h1M541 416.5h1M541 490.5h1M541 518.5h1M541 522.5h1M541 580.5h1M541 707.5h1M542 99.5h1M542 254.5h1M542 421.5h1M542 517.5h1M542 579.5h1M542 798.5h1M543 516.5h1M543 525.5h1M543 578.5h1M543 656.5h1M543 710.5h1M544 96.5h1M544 251.5h1M544 274.5h1M544 488.5h1M544 515.5h1M544 526.5h1M544 711.5h1M544 739.5h1M545 226.5h1M545 250.5h1M545 275.5h1M545 468.5h1M545 514.5h1M545 636.5h1M546 93.5h1M546 225.5h1M546 249.5h1M546 276.5h1M546 513.5h1M546 658.5h1M547 248.5h1M547 277.5h1M547 512.5h1M547 659.5h1M548 303.5h1M548 511.5h1M548 634.5h1M549 122.5h1M549 223.5h1M549 302.5h1M549 510.5h1M549 554.5h1M549 622.5h1M549 713.5h1M549 736.5h1M550 121.5h1M550 246.5h1M550 463.5h1M550 509.5h1M550 570.5h1M550 661.5h1M550 712.5h1M551 56.5h1M551 120.5h1M551 299.5h1M551 416.5h1M551 418.5h1M551 508.5h1M551 632.5h1M551 662.5h1M551 711.5h1M552 119.5h1M552 298.5h1M552 415.5h1M552 460.5h1M552 507.5h1M552 627.5h1M552 734.5h1M553 369.5h1M553 421.5h1M553 506.5h1M553 531.5h1M554 144.5h1M554 310.5h1M554 422.5h1M554 505.5h1M554 551.5h1M554 709.5h1M555 423.5h1M555 504.5h1M555 550.5h1M555 708.5h1M556 280.5h1M556 389.5h1M556 503.5h1M556 529.5h1M556 549.5h1M556 707.5h1M557 279.5h1M557 426.5h1M557 502.5h1M558 386.5h1M558 427.5h1M558 501.5h1M558 546.5h1M558 734.5h1M559 53.5h1M559 217.5h1M559 313.5h1M559 428.5h1M559 500.5h1M559 527.5h1M559 545.5h1M559 735.5h1M560 277.5h1M560 314.5h1M560 499.5h1M560 526.5h1M560 629.5h1M560 796.5h1M561 214.5h1M561 276.5h1M561 315.5h1M561 431.5h1M561 498.5h1M562 55.5h1M562 316.5h1M562 432.5h1M562 497.5h1M563 9.5h1M563 56.5h1M563 244.5h1M563 317.5h1M563 524.5h1M564 243.5h1M564 318.5h1M564 435.5h1M564 523.5h1M564 645.5h1M565 319.5h1M565 626.5h1M566 58.5h1M566 225.5h1M566 240.5h1M566 320.5h1M566 520.5h1M566 648.5h1M567 226.5h1M567 239.5h1M567 440.5h1M567 519.5h1M568 227.5h1M568 573.5h1M569 236.5h1M569 471.5h1M569 516.5h1M569 574.5h1M569 653.5h1M569 770.5h1M570 230.5h1M570 235.5h1M570 470.5h1M570 575.5h1M571 231.5h1M571 469.5h1M571 516.5h1M571 576.5h1M572 468.5h1M572 517.5h1M572 577.5h1M572 685.5h1M572 768.5h1M573 120.5h1M573 467.5h1M573 578.5h1M573 767.5h1M574 466.5h1M574 579.5h1M574 766.5h1M575 59.5h1M575 253.5h1M575 519.5h1M575 601.5h1M575 687.5h1M576 30.5h1M576 55.5h1M576 115.5h1M576 520.5h1M576 600.5h1M576 688.5h1M577 358.5h1M577 581.5h1M577 764.5h1M578 33.5h1M578 52.5h1M578 61.5h1M578 359.5h1M578 582.5h1M578 658.5h1M578 708.5h1M578 763.5h1M579 34.5h1M579 62.5h1M579 254.5h1M579 360.5h1M579 522.5h1M579 659.5h1M579 762.5h1M580 49.5h1M580 63.5h1M580 253.5h1M580 361.5h1M580 652.5h1M580 660.5h1M580 761.5h1M581 37.5h1M581 252.5h1M581 661.5h1M582 6.5h1M582 38.5h1M582 251.5h1M582 425.5h1M582 662.5h1M582 758.5h1M583 47.5h1M583 65.5h1M583 663.5h1M583 757.5h1M584 66.5h1M584 645.5h1M585 40.5h1M585 67.5h1M585 524.5h1M585 738.5h1M586 41.5h1M586 45.5h1M586 68.5h1M586 297.5h1M586 642.5h1M586 737.5h1M587 641.5h1M587 784.5h1M588 198.5h1M588 294.5h1M588 522.5h1M588 666.5h1M588 685.5h1M589 70.5h1M589 87.5h1M589 521.5h1M589 624.5h1M589 630.5h1M589 638.5h1M589 735.5h1M590 71.5h1M590 88.5h1M590 631.5h1M590 637.5h1M591 683.5h1M591 777.5h1M592 10.5h1M592 249.5h1M592 519.5h1M592 619.5h1M593 6.5h1M593 90.5h1M594 70.5h1M594 91.5h1M594 168.5h1M594 252.5h1M594 616.5h1M594 772.5h1M595 12.5h1M595 92.5h1M595 167.5h1M595 253.5h1M596 13.5h1M596 143.5h1M596 254.5h1M596 762.5h1M596 769.5h1M597 68.5h1M597 255.5h1M597 611.5h1M598 146.5h1M598 165.5h1M599 164.5h1M599 608.5h1M600 66.5h1M600 257.5h1M600 468.5h1M601 148.5h1M601 258.5h1M602 419.5h1M602 634.5h1M602 687.5h1M603 64.5h1M603 688.5h1M603 765.5h1M604 63.5h1M604 165.5h1M604 331.5h1M604 645.5h1M604 662.5h1M604 766.5h1M605 47.5h1M605 166.5h1M605 332.5h1M605 417.5h1M605 434.5h1M605 471.5h1M605 661.5h1M605 707.5h1M605 767.5h1M606 46.5h1M606 416.5h1M606 435.5h1M606 690.5h1M606 768.5h1M607 95.5h1M607 169.5h1M607 436.5h1M607 446.5h1M607 631.5h1M607 650.5h1M607 710.5h1M607 794.5h1M608 43.5h1M608 146.5h1M608 334.5h1M608 358.5h1M608 445.5h1M608 659.5h1M608 711.5h1M608 793.5h1M609 42.5h1M609 335.5h1M609 439.5h1M609 770.5h1M609 792.5h1M610 41.5h1M610 93.5h1M610 116.5h1M610 143.5h1M610 440.5h1M610 577.5h1M610 629.5h1M610 714.5h1M610 771.5h1M610 791.5h1M611 40.5h1M611 92.5h1M611 441.5h1M611 443.5h1M611 715.5h1M611 772.5h1M611 790.5h1M612 39.5h1M612 64.5h1M612 716.5h1M613 38.5h1M613 138.5h1M613 575.5h1M614 37.5h1M614 719.5h1M615 18.5h1M615 403.5h1M615 626.5h1M615 720.5h1M616 404.5h1M616 742.5h1M617 309.5h1M617 743.5h1M618 16.5h1M618 310.5h1M618 407.5h1M618 744.5h1M619 15.5h1M619 605.5h1M619 745.5h1M620 604.5h1M620 746.5h1M621 312.5h1M621 626.5h1M621 747.5h1M622 13.5h1M622 313.5h1M622 627.5h1M622 748.5h1M623 524.5h1M623 602.5h1M623 749.5h1M624 13.5h1M624 601.5h1M624 750.5h1M625 521.5h1M625 629.5h1M625 751.5h1M626 268.5h1M626 520.5h1M626 630.5h1M627 15.5h1M627 754.5h1M627 768.5h1M627 805.5h1M628 16.5h1M628 755.5h1M628 767.5h1M629 120.5h1M629 331.5h1M629 687.5h1M630 148.5h1M630 312.5h1M630 758.5h1M631 18.5h1M631 147.5h1M631 170.5h1M631 759.5h1M632 19.5h1M632 146.5h1M632 171.5h1M632 333.5h1M633 232.5h1M633 310.5h1M633 577.5h1M634 227.5h1M634 309.5h1M635 21.5h1M635 144.5h1M635 173.5h1M635 235.5h1M635 286.5h1M635 308.5h1M635 493.5h1M636 22.5h1M636 143.5h1M636 174.5h1M636 236.5h1M636 285.5h1M636 307.5h1M636 575.5h1M637 23.5h1M637 225.5h1M637 306.5h1M637 574.5h1M637 677.5h1M638 24.5h1M638 550.5h1M638 604.5h1M638 615.5h1M639 25.5h1M639 38.5h1M639 283.5h1M639 680.5h1M640 26.5h1M640 223.5h1M641 27.5h1M641 444.5h1M641 548.5h1M641 610.5h1M641 758.5h1M642 443.5h1M643 30.5h1M643 221.5h1M643 420.5h1M643 715.5h1M643 738.5h1M643 790.5h1M644 31.5h1M644 171.5h1M644 421.5h1M644 440.5h1M644 480.5h1M644 714.5h1M645 32.5h1M645 439.5h1M646 438.5h1M646 633.5h1M646 740.5h1M646 792.5h1M647 169.5h1M647 437.5h1M647 467.5h1M647 632.5h1M647 712.5h1M647 756.5h1M647 791.5h1M648 436.5h1M648 631.5h1M648 639.5h1M648 711.5h1M648 757.5h1M648 790.5h1M649 435.5h1M649 630.5h1M649 710.5h1M650 91.5h1M650 629.5h1M650 642.5h1M650 684.5h1M650 760.5h1M650 787.5h1M651 628.5h1M651 761.5h1M651 786.5h1M652 113.5h1M652 166.5h1M652 627.5h1M652 762.5h1M652 785.5h1M653 114.5h1M653 132.5h1M653 582.5h1M653 626.5h1M653 647.5h1M653 784.5h1M654 115.5h1M654 131.5h1M654 625.5h1M654 648.5h1M655 7.5h1M655 116.5h1M655 130.5h1M655 282.5h1M655 303.5h1M655 411.5h1M655 624.5h1M655 649.5h1M655 781.5h1M656 117.5h1M656 129.5h1M656 623.5h1M656 650.5h1M656 780.5h1M657 118.5h1M657 219.5h1M657 285.5h1M657 622.5h1M658 126.5h1M658 301.5h1M658 359.5h1M658 409.5h1M658 621.5h1M658 653.5h1M659 121.5h1M659 125.5h1M659 232.5h1M659 360.5h1M659 408.5h1M659 654.5h1M659 775.5h1M660 6.5h1M660 122.5h1M660 124.5h1M660 186.5h1M660 301.5h1M660 361.5h1M660 655.5h1M660 657.5h1M661 362.5h1M661 772.5h1M662 259.5h1M662 363.5h1M662 406.5h1M662 497.5h1M663 168.5h1M663 260.5h1M663 303.5h1M663 496.5h1M664 256.5h1M664 261.5h1M664 304.5h1M664 387.5h1M664 406.5h1M665 262.5h1M665 305.5h1M665 386.5h1M665 493.5h1M666 67.5h1M666 306.5h1M666 492.5h1M667 95.5h1M667 265.5h1M667 383.5h1M667 408.5h1M667 522.5h1M668 266.5h1M668 409.5h1M668 521.5h1M668 625.5h1M669 98.5h1M669 224.5h1M669 253.5h1M669 267.5h1M669 308.5h1M669 520.5h1M669 626.5h1M670 268.5h1M670 366.5h1M671 101.5h1M671 269.5h1M671 411.5h1M672 226.5h1M672 251.5h1M672 270.5h1M672 518.5h1M672 628.5h1M673 104.5h1M673 227.5h1M673 284.5h1M673 364.5h1M673 517.5h1M673 714.5h1M673 794.5h1M674 208.5h1M674 273.5h1M674 283.5h1M674 363.5h1M674 516.5h1M675 107.5h1M675 249.5h1M675 274.5h1M675 362.5h1M675 515.5h1M676 122.5h1M676 172.5h1M676 248.5h1M676 275.5h1M677 110.5h1M677 121.5h1M677 203.5h1M677 768.5h1M678 111.5h1M678 278.5h1M678 360.5h1M678 513.5h1M678 791.5h1M679 177.5h1M679 246.5h1M679 359.5h1M679 512.5h1M679 765.5h1M680 114.5h1M680 119.5h1M680 511.5h1M680 528.5h1M680 629.5h1M681 118.5h1M681 180.5h1M681 510.5h1M681 529.5h1M682 454.5h1M682 509.5h1M683 10.5h1M683 245.5h1M683 631.5h1M684 9.5h1M684 65.5h1M684 506.5h1M684 632.5h1M685 8.5h1M685 248.5h1M685 382.5h1M685 384.5h1M685 449.5h1M685 505.5h1M685 530.5h1M686 249.5h1M686 381.5h1M686 385.5h1M686 504.5h1M686 529.5h1M687 250.5h1M687 380.5h1M687 446.5h1M687 503.5h1M687 528.5h1M687 634.5h1M687 690.5h1M688 6.5h1M688 251.5h1M688 379.5h1M688 388.5h1M688 502.5h1M688 527.5h1M688 691.5h1M688 738.5h1M689 252.5h1M689 378.5h1M689 526.5h1M689 692.5h1M690 377.5h1M690 412.5h1M690 499.5h1M690 525.5h1M690 547.5h1M690 693.5h1M691 255.5h1M691 413.5h1M691 498.5h1M691 524.5h1M691 658.5h1M692 256.5h1M692 523.5h1M692 696.5h1M693 155.5h1M693 522.5h1M693 697.5h1M694 415.5h1M694 500.5h1M694 521.5h1M694 660.5h1M694 698.5h1M695 152.5h1M695 168.5h1M695 332.5h1M695 520.5h1M695 661.5h1M695 699.5h1M696 151.5h1M696 169.5h1M696 471.5h1M696 503.5h1M697 170.5h1M697 275.5h1M697 443.5h1M697 470.5h1M697 504.5h1M698 7.5h1M698 254.5h1M698 276.5h1M698 518.5h1M698 704.5h1M699 173.5h1M699 517.5h1M700 174.5h1M700 468.5h1M700 516.5h1M700 707.5h1M701 122.5h1M701 146.5h1M703 10.5h1M704 120.5h1M704 173.5h1M705 37.5h1M705 88.5h1M705 119.5h1M706 89.5h1M706 118.5h1M707 90.5h1M707 117.5h1M707 171.5h1M707 680.5h1M708 39.5h1M708 91.5h1M708 116.5h1M708 545.5h1M708 681.5h1M709 92.5h1M709 115.5h1M709 665.5h1M709 682.5h1M710 93.5h1M711 66.5h1M711 573.5h1M712 65.5h1M712 574.5h1M712 663.5h1M712 684.5h1M712 692.5h1M712 752.5h1M713 685.5h1M713 753.5h1M714 686.5h1M714 788.5h1M715 756.5h1M715 793.5h1M716 227.5h1M716 271.5h1M716 278.5h1M716 470.5h1M716 757.5h1M716 785.5h1M717 228.5h1M717 389.5h1M717 469.5h1M718 268.5h1M718 390.5h1M718 413.5h1M718 782.5h1M718 795.5h1M719 267.5h1M719 280.5h1M719 796.5h1M720 170.5h1M720 334.5h1M720 467.5h1M720 573.5h1M720 779.5h1M721 139.5h1M721 141.5h1M721 264.5h1M721 335.5h1M721 466.5h1M721 492.5h1M722 70.5h1M722 253.5h1M722 263.5h1M722 493.5h1M723 136.5h1M723 262.5h1M723 774.5h1M724 73.5h1M724 135.5h1M724 143.5h1M724 256.5h1M724 337.5h1M725 134.5h1M725 144.5h1M725 257.5h1M725 259.5h1M726 133.5h1M726 412.5h1M726 442.5h1M726 769.5h1M727 441.5h1M727 712.5h1M728 130.5h1M728 711.5h1M729 10.5h1M729 414.5h1M729 438.5h1M729 710.5h1M730 9.5h1M732 6.5h1M732 708.5h1M733 29.5h1M733 118.5h1M733 707.5h1M734 706.5h1M734 737.5h1M735 805.5h1M736 519.5h1M737 518.5h1M737 541.5h1M737 799.5h1M738 542.5h1M738 635.5h1M739 256.5h1M739 515.5h1M739 543.5h1M739 571.5h1M740 544.5h1M740 572.5h1M740 797.5h1M741 65.5h1M741 303.5h1M741 512.5h1M741 545.5h1M741 633.5h1M742 66.5h1M742 231.5h1M742 511.5h1M742 546.5h1M742 632.5h1M743 230.5h1M743 281.5h1M743 361.5h1M743 574.5h1M744 253.5h1M744 360.5h1M744 508.5h1M745 68.5h1M745 227.5h1M745 252.5h1M745 507.5h1M746 226.5h1M746 251.5h1M747 68.5h1M747 198.5h1M747 225.5h1M747 250.5h1M747 358.5h1M747 504.5h1M748 67.5h1M748 199.5h1M748 224.5h1M748 357.5h1M748 503.5h1M749 66.5h1M749 200.5h1M749 223.5h1M749 502.5h1M750 65.5h1M750 222.5h1M750 386.5h1M750 501.5h1M751 64.5h1M751 203.5h1M751 221.5h1M751 385.5h1M752 63.5h1M752 204.5h1M752 220.5h1M752 358.5h1M752 498.5h1M753 62.5h1M753 87.5h1M753 359.5h1M754 61.5h1M754 88.5h1M754 280.5h1M754 383.5h1M754 440.5h1M755 149.5h1M755 382.5h1M755 441.5h1M755 708.5h1M756 150.5h1M756 221.5h1M756 414.5h1M756 712.5h1M757 151.5h1M757 278.5h1M757 705.5h1M758 152.5h1M758 277.5h1M758 443.5h1M758 630.5h1M758 704.5h1M758 715.5h1M758 736.5h1M759 88.5h1M759 153.5h1M759 223.5h1M759 444.5h1M760 87.5h1M760 154.5h1M760 445.5h1M760 739.5h1M761 86.5h1M761 628.5h1M762 85.5h1M762 225.5h1M762 627.5h1M763 226.5h1M763 447.5h1M763 626.5h1M764 82.5h1M764 153.5h1M764 227.5h1M764 448.5h1M765 81.5h1M765 449.5h1M765 526.5h1M766 80.5h1M766 464.5h1M766 624.5h1M767 79.5h1M767 151.5h1M767 229.5h1M767 465.5h1M767 623.5h1M768 78.5h1M768 230.5h1M768 676.5h1M769 77.5h1M769 448.5h1M770 76.5h1M770 467.5h1M770 600.5h1M771 75.5h1M771 599.5h1M771 624.5h1M771 681.5h1M772 74.5h1M772 625.5h1M773 73.5h1M773 596.5h1M774 329.5h1M774 445.5h1M774 595.5h1M775 328.5h1M775 444.5h1M775 627.5h1M776 71.5h1M776 327.5h1M776 592.5h1M776 628.5h1M777 70.5h1M777 326.5h1M777 441.5h1M777 591.5h1M778 56.5h1M778 69.5h1M778 325.5h1M778 440.5h1M778 743.5h1M779 68.5h1M779 226.5h1M779 588.5h1M779 648.5h1M780 325.5h1M780 384.5h1M780 587.5h1M780 647.5h1M780 716.5h1M780 740.5h1M780 764.5h1M781 51.5h1M781 385.5h1M781 631.5h1M782 34.5h1M782 224.5h1M782 328.5h1M782 386.5h1M782 644.5h1M782 737.5h1M783 48.5h1M783 223.5h1M783 329.5h1M783 387.5h1M783 718.5h1M783 736.5h1M784 330.5h1M784 388.5h1M784 719.5h1M784 735.5h1M785 36.5h1M785 45.5h1M785 720.5h1M785 734.5h1M786 37.5h1M786 121.5h1M786 333.5h1M786 657.5h1M787 42.5h1M787 440.5h1M787 523.5h1M787 682.5h1M787 731.5h1M788 10.5h1M788 16.5h1M788 441.5h1M788 681.5h1M788 722.5h1M788 730.5h1M789 9.5h1M789 17.5h1M789 729.5h1M790 444.5h1M790 571.5h1M790 678.5h1M791 20.5h1M791 445.5h1M791 572.5h1M791 677.5h1M791 729.5h1M792 21.5h1M792 730.5h1M793 575.5h1M793 661.5h1M794 24.5h1M794 576.5h1M794 760.5h1M794 762.5h1M795 253.5h1M795 577.5h1M795 732.5h1M795 759.5h1M796 578.5h1M796 719.5h1M796 733.5h1M797 29.5h1M797 734.5h1M797 756.5h1M797 764.5h1M798 201.5h1M798 581.5h1M798 664.5h1M798 735.5h1M798 755.5h1M798 765.5h1M799 582.5h1M799 717.5h1M799 736.5h1M799 754.5h1M800 524.5h1M800 551.5h1M800 716.5h1M800 737.5h1M800 753.5h1M801 94.5h1M801 312.5h1M801 523.5h1M801 767.5h1M802 35.5h1M802 93.5h1M802 151.5h1M802 548.5h1M802 768.5h1M803 7.5h1M803 34.5h1M803 92.5h1M803 150.5h1M803 714.5h1M803 739.5h1M804 8.5h1M804 157.5h1M804 521.5h1M804 740.5h1M805 147.5h1M805 178.5h1M805 313.5h1M805 359.5h1M805 520.5h1M805 605.5h1M805 633.5h1M805 692.5h1M805 741.5h1"/>
</g>
<g fill="#014268" stroke="#000" stroke-width="1" shape-rendering="crispEdges">
<path d="M-5,820 -5,706 6,706.8 9.7,705 13.5,702.5 18.5,698.7 23.5,699.4 29.1,698.5 30.3,701.9 27.8,705 28.5,708.7 34.7,707.5 45.9,706.2 47.8,704.3 48.4,706.8 45.9,708.7 45.7,715 50.3,716.2 51.5,722.4 50.9,725.6 55.3,724.3 59.7,723.7 61.5,726.8 65.9,727.4 68.4,729.9 70.9,726.8 71.5,730.6 74,733 75.9,737.4 79.6,739.9 82.1,742.4 85.9,741.2 90.9,743 95.8,742.4 98.3,744.9 103.3,748.6 105.8,751.1 106.4,753.6 104.6,754.9 105.8,759.9 113.3,759.9 114.6,749.9 118.3,748.6 120.8,744.9 125.8,742.4 128.3,739.9 132,741.2 135.8,744.9 140.8,746.2 148,748.6 148.5,756.7 150,762 160,762 159.9,757.4 160,752 157,745 160,738 156,732 150,726 149.3,722.4 153.7,720 157.4,721.2 161.2,726.2 166.2,727.4 169.9,731.2 176.2,732.4 181.1,737.4 182.4,741.2 187.4,743.7 192.4,745.5 197.4,748.6 204.9,752.4 211.1,755.5 216.1,758 216,762 240,762 238.5,757.4 232.3,749.9 227.3,742.4 219.8,739.9 214.8,738.7 209.8,739.9 204.9,736.2 199.9,736.2 193.7,730.8 191.2,727.4 184.9,722.4 182.4,716.1 188.7,714.9 187.4,709.9 191.2,707.4 193.7,702.4 199.9,702.4 202.4,697.4 208.6,694.9 204.9,684.9 203.7,676.2 205.5,678 203.7,680.5 199.9,683.7 198,688.6 195.5,693.6 191.2,694.9 186.8,692.4 183.7,688.6 179.3,688.6 176.8,684.9 177.5,681.2 181.2,679.3 184.9,680.5 187.4,677.4 192.4,671.2 196.2,667.4 199.9,666.2 203.7,666.8 207.4,664.9 211.1,661.2 216.1,656.8 214.9,654.3 212.4,653.1 213.6,651.2 218,650.6 219.9,652.5 218,655 220.5,656.2 224.9,654.3 229.9,651.8 236.1,648.7 239.8,646.2 252.3,646.2 257.3,650 261.1,652.5 266,651.8 269.8,648.7 274.8,651.2 279.8,654.3 282.3,653.7 289,648 296.5,650.5 304,654.2 306.5,653 307,645.5 306,635.5 305.2,629.2 309,625.5 312.7,622.5 316.5,624.2 320.2,628 322,638 324,646.7 327.7,649.2 328.5,646.7 329.5,651.7 334,656.7 335.2,659.2 328,660.5 314,662.5 314,663.5 336.5,661 346.5,658.5 359,655.5 371.5,652.5 384,650 399,648 414,647.5 424,648 439,650.5 454,654.2 464,658.5 474,664.2 484,671.7 494,679.2 501.5,686.7 507.7,694.2 512.7,701.7 514,708 511.5,711.7 519,711 522,710.5 529.5,709.2 537,706.7 540.7,704.2 545.7,701.7 547,703 543.2,708 549.5,705.5 557,701.7 564.5,696.7 572,691.7 578.2,689.2 582,690.5 585.7,691.7 587,686.7 583.2,684.2 579.5,684.2 584.5,679.2 588.2,676.7 593.2,675 597,673.7 602,675.5 608.2,674.2 613.2,675 617,678 622,681.7 628.2,685.5 634.5,690.5 638.2,694.2 642,699.2 644.5,704.2 649.5,708 654.5,711.7 658.2,715.5 657,720.5 658.2,725.5 663.2,729.2 667,733 672,738 674.5,743 678.2,746.7 680.7,751.7 684.5,755.5 683.2,760.5 687,756.7 694.5,756.7 700.7,760.5 703.2,766.7 705.7,773 709.5,778 713.2,781.7 713.2,790.5 713,820Z"/>
<path d="M344,656.8 343.5,653 347.8,654.2 350.2,651.8 354,653 357.8,648 362.8,644.2 360.2,641.8 357,644.2 356,649.2 351.5,650.5 347.8,651.8 344.5,651.8Z"/>
<path d="M369,653 371.5,649.2 376.5,645.5 377.8,638 375.2,633 379,634.2 381.5,640.5 385.2,635.5 386.5,630.5 389,633 389,639.2 392.8,641.8 397.8,643 394,645.5 384,648 376.5,651.8Z"/>
<path d="M417.8,644.2 420.2,641.8 426.5,643 429,638 434,641.8 441.5,640.5 449,639.2 454,643 455.2,648 449,649.2 444,646.8 439,649.2 431.5,646.8 424,647.5 419,646Z"/>
<path d="M474,656.8 481.5,655.5 484,659.2 491.5,656.8 497.8,651.8 499,654.2 492.8,659.2 486.5,663 484,666.8 489,670.5 496.5,674.2 504,676.8 507.8,679.2 505.2,681.8 499,678 492.8,675.5 486.5,671.8 480.2,666.8 476.5,661.8Z"/>
<path d="M505.2,695.5 510.2,693 514,698 515.2,705.5 511.5,711.8 507.8,708 506.5,700.5Z"/>
<path d="M808,589 804,592 801.3,597.4 800,602.4 801.3,607.4 802.5,612.4 801.9,619.9 802.5,627.4 803.8,634.9 804.4,645 808,652Z" stroke="none"/>
<path d="M796,579 799,576.5 803,580 806,584 807,591 801,591 798,585Z" stroke="none"/>
</g>
<g fill="#5d4f4a" stroke="#000" stroke-width="1" shape-rendering="crispEdges">
<path d="M15.4,719.3 19.7,716.8 24.7,716.2 31,719.3 35.9,721.2 39.7,721.8 37.2,724.9 34.7,727.4 31,729.9 26,727.4 21,724.9 17.2,722.4Z"/>
<path d="M65.3,742.4 68.4,741.8 72.1,739.3 75.3,739.9 77.7,743.7 80.9,748.6 79.6,751.8 74,751.1 69.6,748.6 66.5,745.5Z"/>
</g>
<g fill="url(#mp)" stroke="none" shape-rendering="crispEdges">
<path d="M203.7,676.2 208,671 220,672 227,668.7 228.6,673.7 226,680 227.4,687.4 225,692.4 222,700 221,707 215,711 208,716 203,722 201,728 202.4,733.7 207.3,737.4 214.8,738.7 219.8,739.9 227.3,742.4 232.3,749.9 238.5,757.4 236,757.4 228,748 219.8,742 209.8,741 199.9,737.5 193.7,730.8 184.9,722.4 182.4,716.1 188.7,714.9 187.4,709.9 191.2,707.4 193.7,702.4 199.9,702.4 202.4,697.4 208.6,694.9 204.9,684.9Z"/>
<path d="M149.3,722.4 153.7,720 157.4,721.2 161.2,726.2 166.2,727.4 169.9,731.2 176.2,732.4 181.1,737.4 182.4,741.2 176,745 170,749 165,754 160,758 159,752 156,745 158,738 154,732 150,727Z"/>
<path d="M80.9,739.9 85.9,739.9 90.9,741.8 95.8,741.2 99,744.3 104,748 106.8,751.1 106.8,754.3 104.6,756.1 98.3,757.4 93.3,758.4 87.1,756.1 83.4,752.4 80.9,746.2Z"/>
<path d="M113.3,758.4 114.3,749.9 118.3,748 120.8,744.3 125.8,741.8 128.9,739.3 132.7,740.5 136.4,744.3 141.4,745.5 148,748 148,758.4Z"/>
</g>
<g fill="url(#mp2)" stroke="none" shape-rendering="crispEdges">
<path d="M806,556 801,558 797,566 790,572 794,580 788,586 791,594 787,600 792,606 788,612 793,620 790,628 795,634 790,642 794,646 800,650 806,652Z"/>
</g>
<path d="M808,589 804,592 801.3,597.4 800,602.4 801.3,607.4 802.5,612.4 801.9,619.9 802.5,627.4 803.8,634.9 804.4,645 808,652Z" fill="#014268"/>
<path d="M796,579 799,576.5 803,580 806,584 807,591 801,591 798,585Z" fill="#014268"/>
<g fill="none" stroke="#000" stroke-width="1.4" shape-rendering="crispEdges">
<path d="M533.2,719.2 542,716.8 549.5,713 557,709.2 564.5,703 569.5,699.2"/>
<path d="M532.8,719.2 539,718 548,714.2"/>
<path d="M249.2,678 252.6,681.8"/>
<path d="M253.3,684.9 254.2,694.9 253.3,698.6"/>
<path d="M252.3,702.4 249.8,708"/>
<path d="M248,710.5 244.8,713"/>
<path d="M243,714.9 241.7,716.1"/>
<path d="M237.3,721.7 234.9,724.2"/>
<path d="M246.1,694.9 249.8,692.4 248.6,696.1"/>
<path d="M241.7,698.6 243,701.1"/>
<path d="M228.6,661.8 236.1,662.4 233.6,665.6"/>
<path d="M241.1,664.3 249.8,661.8"/>
<path d="M257.3,661.2 267.3,662.7 274.8,663.9 284.8,664.9"/>
<path d="M264,661.8 274,663.5 285.2,665"/>
<path d="M291.5,661.8 301.5,661 307.8,664.2"/>
<path d="M314,663.5 336.5,662 346.5,659.5 359,656.5 371.5,653.5 384,651 399,649 414,648.5 424,649 439,651.5 454,655.2 464,659.5 474,665.2 484,672.7 494,680.2 501.5,687.7 507.7,695.2"/>
<path d="M239.8,645.6 252.3,645.6"/>
<path d="M239.8,647 252.3,647"/>
</g>
<g fill="#2c4666" stroke="#1b3a60" stroke-width="1" shape-rendering="crispEdges">
<path d="M299,59.8 304,56 310.2,56 314,59.8 315.2,66 320.2,70.5 323.5,72.2 320.2,76 320.2,81 322.8,88.5 323.5,96 321,92.2 316.5,86 315.2,78.5 312.8,72.2 310.2,64.8 306.5,59.8 302.8,62.2Z"/>
<path d="M367.8,261.2 371.5,258.8 376.5,261.2 381.5,264.5 387.8,267.5 392.8,271.2 396,276.2 391.5,273.8 386.5,270.5 380.2,267.5 374,263.8 369,263Z"/>
<path d="M439,372.5 442,368.8 446,366.2 447.8,363 450.2,365 451,368.8 447.8,370 444.5,373 444.5,377 440.2,377.5Z"/>
<path d="M613.2,286.2 615.8,285 616.5,290 620,291.2 620.8,286.2 623.2,287.5 623.2,292.5 627,293 624.5,297 620.8,299.5 618.2,303.8 615.8,307.5 613.2,311.2 608.2,313 605.8,310 605,306.2 608.2,307.5 610,303.8 612.5,302.5 612,295 613.2,291.2Z"/>
<path d="M424,414 426,413.5 427.8,419 429,425.2 432,429 431,434.5 427.8,432.8 426.5,426.5 425.2,420.2Z"/>
<path d="M526.5,502.8 528.5,502 530.2,509 532.8,515.2 531.5,521.5 535.2,526.5 532.8,531.5 534,537.8 530.2,536.5 529,531.5 525.2,530.2 529,524 526.5,516.5 526,509Z"/>
<path d="M123.5,656.8 127.2,653 132.2,652.5 136,656.8 134.8,663 131,667.5 126,668.5 122.2,664.2Z"/>
<path d="M42.2,681 46,680 49.8,683.5 52.2,688 49,690 45.5,687.5 43,684.2Z"/>
<path d="M58.5,685.5 61.5,689.2 64,694.2 67.2,699.2 71.5,702.5 77.2,704.2 82.2,705 84.8,708 82.2,711 77.2,709.2 71.5,707.5 66,705.5 62.2,701 59,695.5 57.2,690.5Z"/>
<path d="M144.8,696.8 149.8,695.5 153.5,699.2 154.8,705.5 151,709.2 146.5,713.5 142.2,714.2 140.5,709.2 144,704.2 146,701Z"/>
<path d="M540.8,603 542,610.5 545.8,619.2 549.5,616.8 554.5,614.2 563.2,613 563.2,610 557,611.8 558.2,603 555.8,603 554.5,610.5 547,614.2 544.5,609.2 544,603Z"/>
<path d="M784.6,728.6 785.6,736.5 788.5,742.4 792.5,745.4 796.4,746.3 795.4,752.3 792.5,755.2 788.5,750.3 785.2,743.4 784,736.5Z"/>
<path d="M769,792 772,790 776,789.5 779,791 778,794 770,794Z"/>
</g>
<path d="M806,651 799.5,650 792,648 786,646.5 785.6,653.7 786.5,661.6 785.6,669.5 784.6,675.4 787.5,682.3 791.5,687.2 792.5,695.1 795.4,703 792.5,708.9 788.5,711.9 789.5,716.8 785.6,719.7 784.6,724.7 785.2,728.6" fill="none" stroke="#000" stroke-width="3.4" shape-rendering="crispEdges"/>
<path d="M806,651 799.5,650 792,648 786,646.5 785.6,653.7 786.5,661.6 785.6,669.5 784.6,675.4 787.5,682.3 791.5,687.2 792.5,695.1 795.4,703 792.5,708.9 788.5,711.9 789.5,716.8 785.6,719.7 784.6,724.7 785.2,728.6" fill="none" stroke="#014268" stroke-width="1.8" shape-rendering="crispEdges"/>
<path d="M457 52.5h2M302 53.5h6M455 53.5h2M265 54.5h3M296 54.5h6M308 54.5h2M453 54.5h2M294 55.5h2M310 55.5h2M451 55.5h2M268 56.5h2M312 56.5h2M447 56.5h4M269 57.5h4M314 57.5h2M443 57.5h4M271 58.5h9M290 58.5h2M439 58.5h4M277 59.5h13M317 59.5h2M436 59.5h3M284 60.5h7M319 60.5h2M322 62.5h2M324 63.5h2M217 64.5h2M215 65.5h2M327 65.5h2M212 66.5h3M210 67.5h2M330 67.5h2M207 68.5h3M205 69.5h2M202 70.5h3M334 70.5h2M200 71.5h2M337 72.5h2M802 72.5h3M800 73.5h2M797 74.5h3M794 75.5h3M342 76.5h2M792 76.5h2M789 77.5h3M786 78.5h3M782 79.5h4M778 80.5h4M348 81.5h2M774 81.5h4M771 82.5h3M769 83.5h2M352 84.5h2M767 84.5h2M765 85.5h2M355 86.5h2M763 86.5h2M761 87.5h2M759 88.5h2M359 89.5h2M756 89.5h3M754 90.5h2M362 91.5h2M752 91.5h2M750 92.5h2M748 93.5h2M746 94.5h2M744 95.5h2M742 96.5h2M740 97.5h2M738 98.5h2M392 99.5h18M736 99.5h2M388 100.5h4M410 100.5h4M734 100.5h2M386 101.5h2M414 101.5h3M732 101.5h2M384 102.5h2M415 102.5h3M730 102.5h2M728 103.5h2M381 104.5h2M419 104.5h2M377 105.5h2M725 105.5h2M378 106.5h2M422 106.5h2M723 106.5h2M720 108.5h2M718 109.5h2M383 110.5h2M373 111.5h2M715 111.5h2M713 112.5h2M388 114.5h2M710 114.5h2M708 115.5h2M706 116.5h2M704 117.5h2M702 118.5h2M700 119.5h2M395 120.5h2M698 120.5h2M695 122.5h2M693 123.5h2M691 124.5h2M689 125.5h2M687 126.5h2M685 127.5h2M683 128.5h2M681 129.5h2M678 130.5h3M404 131.5h2M676 131.5h2M404 132.5h2M429 132.5h20M674 132.5h2M412 133.5h17M449 133.5h13M672 133.5h2M405 134.5h7M462 134.5h4M670 134.5h2M403 135.5h4M466 135.5h4M470 136.5h4M497 136.5h20M667 136.5h2M400 137.5h2M474 137.5h23M398 138.5h2M518 138.5h2M663 139.5h2M395 140.5h2M392 141.5h3M522 141.5h2M660 141.5h2M387 142.5h5M382 143.5h5M523 143.5h4M657 143.5h2M377 144.5h5M525 144.5h4M655 144.5h2M372 145.5h5M529 145.5h2M653 145.5h2M367 146.5h5M528 146.5h2M531 146.5h2M651 146.5h2M363 147.5h4M530 147.5h2M533 147.5h2M617 147.5h4M647 147.5h4M359 148.5h4M532 148.5h2M613 148.5h4M623 148.5h13M644 148.5h3M355 149.5h4M616 149.5h7M636 149.5h8M352 150.5h3M535 150.5h4M614 150.5h2M348 151.5h4M537 151.5h3M612 151.5h2M345 152.5h3M539 152.5h2M610 152.5h2M343 153.5h2M373 153.5h2M541 153.5h2M608 153.5h2M340 154.5h3M543 154.5h2M606 154.5h2M338 155.5h2M545 155.5h2M603 155.5h3M335 156.5h3M425 156.5h2M547 156.5h2M599 156.5h4M333 157.5h2M549 157.5h9M596 157.5h3M329 158.5h4M378 158.5h2M422 158.5h2M558 158.5h17M588 158.5h8M325 159.5h4M575 159.5h13M321 160.5h4M381 160.5h2M419 160.5h2M317 161.5h4M310 162.5h7M384 162.5h2M416 162.5h2M301 163.5h9M386 163.5h3M414 163.5h2M295 164.5h6M389 164.5h3M411 164.5h3M291 165.5h4M392 165.5h9M403 165.5h8M288 166.5h3M400 166.5h3M285 167.5h4M675 167.5h2M281 168.5h5M278 169.5h5M678 169.5h2M276 170.5h5M680 170.5h2M274 171.5h4M272 172.5h3M792 172.5h10M269 173.5h3M782 173.5h10M802 173.5h4M266 174.5h4M776 174.5h6M263 175.5h5M772 175.5h4M260 176.5h3M264 176.5h2M768 176.5h4M257 177.5h3M764 177.5h4M254 178.5h3M760 178.5h4M251 179.5h3M755 179.5h5M248 180.5h3M750 180.5h5M245 181.5h3M744 181.5h6M242 182.5h3M738 182.5h6M239 183.5h3M732 183.5h6M236 184.5h3M728 184.5h4M233 185.5h3M724 185.5h4M231 186.5h2M689 186.5h2M720 186.5h4M229 187.5h2M691 187.5h2M716 187.5h4M227 188.5h2M693 188.5h3M711 188.5h5M696 189.5h2M703 189.5h8M224 190.5h2M698 190.5h5M222 191.5h2M450 191.5h2M456 196.5h2M210 203.5h2M208 204.5h2M144 205.5h2M205 205.5h3M396 205.5h2M465 205.5h2M557 205.5h2M144 206.5h2M202 206.5h4M396 206.5h2M466 206.5h2M556 206.5h2M200 207.5h4M396 207.5h2M555 207.5h2M144 208.5h2M198 208.5h4M396 208.5h2M196 209.5h4M193 211.5h2M549 212.5h2M189 214.5h2M734 215.5h5M186 216.5h2M739 216.5h6M184 217.5h2M182 218.5h2M541 219.5h2M179 220.5h2M167 221.5h6M177 221.5h2M546 221.5h2M161 222.5h6M173 222.5h4M544 222.5h2M148 223.5h6M169 223.5h6M802 223.5h3M140 224.5h8M154 224.5h5M164 224.5h5M535 224.5h2M541 224.5h2M799 224.5h3M134 225.5h6M159 225.5h5M539 225.5h2M795 225.5h4M130 226.5h4M537 226.5h2M792 226.5h3M126 227.5h4M789 227.5h3M123 228.5h3M786 228.5h3M121 229.5h2M533 229.5h2M784 229.5h2M119 230.5h2M162 230.5h2M169 230.5h6M782 230.5h2M117 231.5h2M163 231.5h6M485 231.5h2M780 231.5h2M487 232.5h2M777 232.5h3M114 233.5h2M489 233.5h2M528 233.5h2M775 233.5h2M112 234.5h2M491 234.5h2M773 234.5h2M110 235.5h2M493 235.5h3M771 235.5h2M107 236.5h3M496 236.5h3M512 236.5h7M769 236.5h2M104 237.5h3M499 237.5h4M507 237.5h5M519 237.5h6M767 237.5h2M101 238.5h3M503 238.5h4M765 238.5h2M98 239.5h3M95 240.5h3M762 240.5h2M92 241.5h3M759 241.5h3M89 242.5h3M86 243.5h3M757 243.5h3M83 244.5h3M755 244.5h2M80 245.5h3M753 245.5h2M77 246.5h3M751 246.5h2M74 247.5h3M748 247.5h3M71 248.5h3M746 248.5h2M68 249.5h3M743 249.5h3M64 250.5h4M741 250.5h2M59 251.5h5M738 251.5h3M54 252.5h5M736 252.5h2M48 253.5h6M734 253.5h2M40 254.5h8M535 254.5h2M732 254.5h2M29 255.5h11M730 255.5h2M14 256.5h15M536 256.5h2M728 256.5h2M6 257.5h8M536 257.5h2M537 259.5h2M537 260.5h2M538 262.5h2M538 263.5h2M539 264.5h2M539 265.5h2M744 265.5h2M540 267.5h2M717 267.5h2M540 268.5h2M749 269.5h2M713 270.5h2M753 272.5h2M709 273.5h2M755 273.5h2M706 275.5h2M758 275.5h2M703 276.5h3M760 276.5h2M700 277.5h3M697 278.5h3M763 278.5h2M694 279.5h3M765 279.5h2M691 280.5h3M767 280.5h2M688 281.5h3M769 281.5h2M685 282.5h3M771 282.5h2M682 283.5h3M679 284.5h3M774 284.5h2M677 285.5h2M675 286.5h2M673 287.5h2M671 288.5h2M779 288.5h2M669 289.5h2M667 290.5h2M665 291.5h2M663 292.5h2M784 292.5h2M660 294.5h2M657 296.5h2M789 296.5h2M654 298.5h2M651 300.5h2M648 302.5h2M645 304.5h2M643 305.5h2M799 305.5h2M801 306.5h2M640 307.5h2M803 307.5h2M638 308.5h2M635 310.5h2M633 311.5h2M630 313.5h2M628 314.5h2M625 316.5h2M623 317.5h2M564 319.5h2M620 319.5h2M618 320.5h2M616 321.5h2M614 322.5h2M569 323.5h2M612 323.5h2M610 324.5h2M608 325.5h2M606 326.5h2M604 327.5h2M602 328.5h2M597 332.5h2M452 333.5h2M446 338.5h2M581 340.5h6M579 341.5h2M587 341.5h2M576 343.5h2M590 343.5h2M560 347.5h9M551 348.5h9M569 348.5h3M547 349.5h4M572 349.5h3M794 349.5h2M543 350.5h6M574 350.5h5M432 351.5h2M539 351.5h7M579 351.5h3M583 351.5h2M535 352.5h6M582 352.5h8M530 353.5h7M590 353.5h9M789 353.5h2M428 354.5h2M525 354.5h7M599 354.5h4M518 355.5h8M603 355.5h4M786 355.5h2M425 356.5h2M511 356.5h7M607 356.5h4M784 356.5h2M503 357.5h8M582 357.5h2M611 357.5h3M781 357.5h3M496 358.5h7M614 358.5h4M778 358.5h3M490 359.5h6M579 359.5h2M618 359.5h4M776 359.5h2M484 360.5h6M578 360.5h2M588 360.5h2M622 360.5h4M774 360.5h2M479 361.5h5M580 361.5h3M585 361.5h3M626 361.5h3M772 361.5h2M473 362.5h6M583 362.5h2M629 362.5h4M440 363.5h14M467 363.5h6M574 363.5h2M633 363.5h4M769 363.5h2M431 364.5h9M454 364.5h13M637 364.5h4M423 365.5h8M641 365.5h5M766 365.5h2M415 366.5h8M646 366.5h8M414 367.5h3M654 367.5h11M763 367.5h2M665 368.5h26M761 368.5h2M691 369.5h8M759 369.5h2M699 370.5h11M756 370.5h3M710 371.5h16M754 371.5h2M726 372.5h28M405 376.5h2M403 378.5h3M409 379.5h2M399 381.5h2M405 382.5h2M395 384.5h2M404 384.5h2M392 386.5h2M390 387.5h2M387 389.5h2M385 390.5h2M382 392.5h2M394 393.5h2M378 395.5h2M391 395.5h2M375 397.5h2M388 397.5h2M371 398.5h4M365 399.5h6M385 399.5h2M359 400.5h6M383 400.5h2M353 401.5h6M381 401.5h2M349 402.5h4M379 402.5h2M347 403.5h2M377 403.5h2M344 404.5h3M375 404.5h2M547 404.5h2M343 405.5h2M373 405.5h2M546 405.5h3M342 406.5h2M371 406.5h2M407 406.5h2M545 406.5h3M611 406.5h2M174 407.5h2M340 407.5h2M369 407.5h2M407 407.5h2M545 407.5h3M612 407.5h2M339 408.5h2M367 408.5h2M544 408.5h2M543 409.5h2M542 410.5h2M541 411.5h2M540 412.5h2M539 413.5h2M538 414.5h2M537 415.5h2M536 416.5h2M622 416.5h2M531 420.5h3M627 421.5h3M628 423.5h2M629 424.5h2M632 424.5h2M629 425.5h2M630 426.5h2M635 426.5h2M319 427.5h2M525 427.5h2M631 428.5h2M632 430.5h2M635 430.5h5M632 431.5h3M650 445.5h2M652 446.5h2M654 447.5h2M656 448.5h2M658 449.5h2M509 450.5h2M660 450.5h2M507 451.5h2M662 451.5h2M664 452.5h2M504 453.5h2M666 453.5h3M502 454.5h2M669 454.5h2M671 455.5h3M499 456.5h2M674 456.5h2M497 457.5h2M676 457.5h3M679 458.5h3M494 459.5h2M682 459.5h3M492 460.5h2M685 460.5h3M6 461.5h8M490 461.5h2M688 461.5h3M14 462.5h10M288 462.5h2M486 462.5h4M691 462.5h4M24 463.5h6M286 463.5h3M483 463.5h3M695 463.5h4M30 464.5h6M155 464.5h2M284 464.5h3M479 464.5h4M699 464.5h4M36 465.5h11M282 465.5h2M474 465.5h5M703 465.5h4M47 466.5h12M280 466.5h2M283 466.5h2M470 466.5h4M707 466.5h6M59 467.5h5M278 467.5h2M468 467.5h2M713 467.5h6M64 468.5h5M153 468.5h2M275 468.5h3M280 468.5h2M466 468.5h2M719 468.5h7M69 469.5h3M153 469.5h2M273 469.5h2M277 469.5h3M464 469.5h2M726 469.5h8M72 470.5h2M270 470.5h7M462 470.5h2M734 470.5h9M74 471.5h2M267 471.5h5M439 471.5h5M455 471.5h7M743 471.5h10M76 472.5h2M263 472.5h4M444 472.5h11M753 472.5h8M78 473.5h2M112 473.5h25M260 473.5h3M761 473.5h2M80 474.5h2M104 474.5h8M137 474.5h2M252 474.5h8M763 474.5h3M82 475.5h4M100 475.5h4M139 475.5h2M236 475.5h16M766 475.5h3M86 476.5h6M96 476.5h4M141 476.5h2M201 476.5h35M769 476.5h2M92 477.5h4M191 477.5h10M771 477.5h3M144 478.5h2M179 478.5h12M774 478.5h2M168 479.5h11M776 479.5h2M147 480.5h5M160 480.5h8M778 480.5h3M151 481.5h9M781 481.5h2M783 482.5h3M786 483.5h3M789 484.5h4M793 485.5h3M796 486.5h2M798 487.5h2M801 489.5h2M804 491.5h2M230 532.5h2M379 566.5h2M375 569.5h2M372 571.5h2M368 574.5h2M364 577.5h2M360 580.5h2M357 582.5h2M355 583.5h2M352 585.5h2M349 587.5h2M347 588.5h2M344 590.5h2M342 591.5h2M339 593.5h2M337 594.5h2M335 595.5h2M333 596.5h2M331 597.5h2M328 598.5h3M325 599.5h3M323 600.5h2M321 601.5h2M319 602.5h2M126 603.5h2M316 603.5h3M126 604.5h2M314 604.5h3M660 604.5h2M126 605.5h2M313 605.5h3M660 605.5h2M126 606.5h2M312 606.5h2M784 606.5h2M126 607.5h2M310 607.5h2M784 607.5h2M478 615.5h26M441 616.5h5M475 616.5h3M504 616.5h12M434 617.5h7M446 617.5h2M472 617.5h3M516 617.5h2M428 618.5h6M448 618.5h3M469 618.5h3M518 618.5h2M417 619.5h11M451 619.5h2M466 619.5h3M520 619.5h4M408 620.5h9M453 620.5h13M522 620.5h4M406 621.5h2M524 621.5h4M312 622.5h2M403 622.5h3M526 622.5h5M310 623.5h2M314 623.5h3M401 623.5h2M528 623.5h5M308 624.5h2M317 624.5h3M399 624.5h2M531 624.5h5M305 625.5h3M320 625.5h9M397 625.5h2M534 625.5h5M329 626.5h9M395 626.5h2M538 626.5h11M338 627.5h3M543 627.5h3M302 628.5h2M341 628.5h4M392 628.5h2M546 628.5h2M345 629.5h3M390 629.5h2M548 629.5h2M348 630.5h3M550 630.5h2M351 631.5h2M387 631.5h2M297 632.5h2M353 632.5h3M553 632.5h2M356 633.5h2M555 633.5h2M294 634.5h2M358 634.5h3M383 634.5h2M557 634.5h2M680 634.5h2M361 635.5h2M559 635.5h2M363 636.5h3M378 636.5h4M561 636.5h4M290 637.5h2M366 637.5h2M372 637.5h6M565 637.5h4M287 638.5h3M368 638.5h4M569 638.5h4M593 638.5h8M283 639.5h8M573 639.5h4M584 639.5h9M601 639.5h8M115 640.5h33M276 640.5h10M577 640.5h7M609 640.5h7M103 641.5h12M148 641.5h3M268 641.5h11M616 641.5h6M95 642.5h8M151 642.5h3M260 642.5h8M270 642.5h4M622 642.5h7M86 643.5h9M154 643.5h3M251 643.5h9M266 643.5h4M629 643.5h8M783 643.5h3M62 644.5h24M157 644.5h3M241 644.5h10M264 644.5h2M637 644.5h10M779 644.5h5M58 645.5h4M160 645.5h3M234 645.5h7M647 645.5h7M55 646.5h3M163 646.5h2M229 646.5h5M654 646.5h4M52 647.5h3M165 647.5h3M224 647.5h5M658 647.5h4M48 648.5h4M168 648.5h2M219 648.5h5M662 648.5h4M45 649.5h3M170 649.5h3M215 649.5h4M666 649.5h3M42 650.5h3M173 650.5h2M211 650.5h4M669 650.5h4M39 651.5h3M175 651.5h3M207 651.5h4M673 651.5h4M36 652.5h3M178 652.5h2M205 652.5h2M677 652.5h4M778 652.5h2M33 653.5h3M180 653.5h3M202 653.5h3M681 653.5h5M778 653.5h2M30 654.5h3M183 654.5h2M200 654.5h2M686 654.5h8M778 654.5h2M781 654.5h4M28 655.5h2M184 655.5h7M198 655.5h2M694 655.5h4M775 655.5h6M25 656.5h3M191 656.5h7M698 656.5h2M769 656.5h6M778 656.5h2M23 657.5h2M700 657.5h2M763 657.5h6M20 658.5h3M757 658.5h6M779 658.5h2M18 659.5h2M703 659.5h3M751 659.5h6M11 660.5h7M705 660.5h2M743 660.5h8M6 661.5h5M707 661.5h36M97 662.5h2M780 662.5h2M780 663.5h2M782 664.5h2M101 665.5h2M782 665.5h4M786 666.5h5M104 667.5h2M788 667.5h2M106 668.5h2M790 668.5h2M108 669.5h2M792 669.5h2M110 670.5h2M112 671.5h3M115 672.5h2M117 673.5h5M122 674.5h6M174 674.5h2M128 675.5h5M133 676.5h2M171 676.5h2M135 677.5h2M137 678.5h3M140 679.5h2M167 679.5h2M142 680.5h3M145 681.5h3M148 682.5h4M163 682.5h2M152 683.5h5M157 684.5h5M7.5 617v2M10.5 621v2M11.5 623v3M12.5 626v5M12.5 639v10M13.5 631v8M13.5 649v8M14.5 657v3M91.5 644v4M92.5 648v6M93.5 654v2M94.5 656v2M95.5 658v2M96.5 660v2M126.5 608v13M127.5 602v1M127.5 621v6M128.5 590v12M128.5 627v8M129.5 575v15M129.5 635v5M130.5 545v30M130.5 641v2M131.5 536v9M131.5 643v2M132.5 528v8M132.5 645v2M132.5 672v3M133.5 520v8M133.5 647v3M133.5 666v6M134.5 515v5M134.5 650v2M134.5 662v4M135.5 512v3M135.5 652v3M135.5 658v4M136.5 509v3M136.5 655v3M137.5 506v3M138.5 504v2M139.5 502v2M140.5 500v2M142.5 497v2M144.5 209v1M144.5 494v2M145.5 207v1M145.5 492v2M146.5 203v2M146.5 209v3M146.5 490v2M147.5 201v2M147.5 212v2M147.5 488v2M148.5 214v2M148.5 486v2M149.5 198v2M149.5 216v2M149.5 474v2M149.5 484v2M150.5 218v2M150.5 482v2M151.5 220v2M151.5 471v2M152.5 194v2M152.5 222v1M152.5 476v4M153.5 472v4M154.5 191v2M154.5 467v5M155.5 463v4M156.5 188v2M156.5 459v4M157.5 456v3M158.5 185v2M158.5 453v3M159.5 449v4M160.5 182v2M160.5 226v2M160.5 446v3M161.5 180v2M161.5 223v2M161.5 228v2M161.5 438v8M162.5 178v2M162.5 430v8M163.5 175v3M163.5 428v2M164.5 172v3M164.5 232v4M164.5 425v3M165.5 170v2M165.5 236v4M165.5 423v2M166.5 168v2M166.5 240v6M166.5 420v3M167.5 246v8M167.5 418v2M168.5 254v6M168.5 416v2M169.5 164v2M169.5 260v6M169.5 414v2M170.5 266v6M170.5 412v2M171.5 272v11M171.5 298v11M172.5 160v2M172.5 283v15M172.5 309v8M173.5 157v3M173.5 317v5M174.5 154v3M174.5 229v1M174.5 322v4M174.5 408v1M175.5 151v3M175.5 227v2M175.5 326v4M175.5 405v2M176.5 149v2M176.5 225v2M176.5 330v4M176.5 403v2M177.5 147v2M177.5 334v5M177.5 401v2M177.5 671v2M178.5 339v8M178.5 399v2M179.5 347v5M179.5 396v3M180.5 143v2M180.5 352v4M180.5 394v2M180.5 667v2M181.5 141v2M181.5 356v4M181.5 391v3M182.5 139v2M182.5 360v9M182.5 389v2M182.5 664v2M183.5 137v2M183.5 369v20M183.5 662v2M184.5 135v2M184.5 660v2M185.5 133v2M185.5 652v2M185.5 657v3M186.5 127v6M186.5 650v2M186.5 656v1M187.5 118v9M187.5 647v3M188.5 113v5M188.5 645v2M189.5 111v2M189.5 642v3M190.5 640v2M191.5 16v2M191.5 637v3M192.5 18v2M192.5 107v2M192.5 635v2M193.5 20v3M193.5 105v2M193.5 632v3M194.5 23v2M194.5 103v2M194.5 629v3M195.5 25v3M195.5 100v3M195.5 627v2M196.5 28v2M196.5 98v2M196.5 624v3M197.5 30v4M197.5 95v3M197.5 622v2M198.5 34v5M198.5 93v2M198.5 619v3M199.5 39v5M199.5 81v12M199.5 617v2M200.5 44v37M200.5 615v2M201.5 612v3M202.5 610v2M203.5 608v2M204.5 606v2M205.5 604v2M206.5 602v2M207.5 600v2M208.5 598v2M209.5 595v3M210.5 592v3M211.5 589v3M212.5 586v3M213.5 579v7M214.5 571v8M215.5 563v8M216.5 197v2M216.5 557v6M217.5 552v5M218.5 549v3M222.5 544v2M224.5 56v3M225.5 52v4M226.5 48v4M226.5 539v2M227.5 39v9M227.5 536v3M228.5 25v14M228.5 534v2M229.5 18v7M231.5 15v2M234.5 527v3M235.5 522v5M236.5 9v2M236.5 519v3M237.5 517v2M238.5 515v2M240.5 512v2M241.5 510v2M242.5 508v2M243.5 506v2M244.5 11v2M244.5 504v2M245.5 502v2M246.5 500v2M247.5 498v2M248.5 495v3M249.5 493v2M250.5 18v2M250.5 490v3M251.5 488v2M252.5 486v2M253.5 483v3M254.5 23v2M254.5 481v2M255.5 479v2M256.5 477v2M257.5 27v2M257.5 475v2M258.5 29v2M259.5 31v2M260.5 33v2M261.5 35v2M262.5 37v6M263.5 43v6M264.5 49v2M266.5 52v2M267.5 55v1M285.5 465v1M292.5 458v2M298.5 451v2M302.5 446v2M305.5 622v5M306.5 441v2M306.5 617v5M307.5 613v4M308.5 610v3M309.5 608v2M311.5 435v2M366.5 124v17M367.5 122v2M367.5 141v3M368.5 120v2M368.5 144v2M369.5 117v3M369.5 147v1M370.5 115v2M370.5 148v2M371.5 113v2M371.5 150v2M376.5 108v2M376.5 155v2M385.5 560v2M393.5 260v10M394.5 251v9M394.5 270v4M394.5 550v2M395.5 247v4M395.5 274v4M395.5 288v11M396.5 184v26M396.5 243v4M396.5 278v10M396.5 299v8M397.5 175v9M397.5 239v4M397.5 307v6M398.5 171v4M398.5 209v8M398.5 229v10M398.5 313v5M399.5 167v4M399.5 217v12M399.5 318v5M400.5 163v2M400.5 323v10M400.5 543v2M401.5 125v2M401.5 160v3M401.5 333v15M402.5 127v2M402.5 157v3M402.5 348v10M402.5 540v2M403.5 129v2M403.5 154v3M403.5 358v6M403.5 538v2M404.5 151v3M404.5 364v10M404.5 388v10M405.5 133v7M405.5 148v3M405.5 374v14M405.5 398v4M405.5 535v2M406.5 126v5M406.5 140v8M406.5 402v4M407.5 122v4M407.5 408v1M407.5 532v2M408.5 119v3M408.5 373v2M408.5 404v2M408.5 530v2M409.5 116v3M409.5 408v4M410.5 113v3M410.5 412v2M410.5 527v2M411.5 110v3M411.5 414v2M412.5 108v2M412.5 416v2M412.5 524v2M413.5 106v2M413.5 418v2M413.5 522v2M414.5 104v2M414.5 373v3M414.5 420v2M415.5 103v1M415.5 368v5M415.5 422v2M415.5 519v2M416.5 100v1M416.5 365v1M416.5 424v2M416.5 517v2M417.5 98v2M417.5 515v2M418.5 96v2M418.5 427v2M419.5 94v2M419.5 429v2M419.5 512v2M420.5 92v2M420.5 431v2M420.5 510v2M421.5 90v2M421.5 433v2M421.5 508v2M422.5 88v2M422.5 435v3M422.5 506v2M423.5 86v2M423.5 438v2M423.5 504v2M424.5 84v2M424.5 440v3M424.5 502v2M425.5 82v2M425.5 443v3M425.5 500v2M426.5 80v2M426.5 155v1M426.5 446v4M426.5 498v2M427.5 78v2M427.5 450v2M427.5 496v2M428.5 75v3M428.5 452v2M428.5 494v2M429.5 72v3M429.5 159v2M429.5 454v2M429.5 492v2M430.5 70v2M430.5 113v2M430.5 150v2M430.5 456v2M430.5 490v2M431.5 68v2M431.5 458v2M431.5 488v2M432.5 66v2M432.5 116v2M432.5 147v2M432.5 163v2M432.5 460v2M432.5 486v2M433.5 64v2M433.5 118v2M433.5 144v3M433.5 462v2M433.5 484v2M434.5 62v2M434.5 120v4M434.5 141v3M434.5 482v2M435.5 60v2M435.5 124v3M435.5 138v3M435.5 167v2M435.5 480v2M436.5 127v11M436.5 169v2M436.5 466v2M436.5 478v2M437.5 475v3M438.5 172v2M438.5 469v2M438.5 473v2M439.5 174v2M439.5 472v1M440.5 176v2M442.5 179v2M443.5 181v2M445.5 184v2M446.5 186v2M457.5 328v2M458.5 326v2M460.5 323v2M462.5 47v2M462.5 320v2M463.5 318v2M464.5 203v2M465.5 315v2M466.5 42v2M466.5 313v2M467.5 39v3M467.5 207v1M467.5 311v2M468.5 36v3M469.5 33v3M469.5 308v2M470.5 28v5M470.5 210v2M470.5 306v2M471.5 22v6M472.5 6v16M472.5 303v2M474.5 300v2M476.5 297v2M478.5 294v2M480.5 221v2M480.5 291v2M481.5 223v2M482.5 225v2M482.5 288v2M483.5 227v2M483.5 286v2M484.5 229v2M484.5 284v2M485.5 282v2M487.5 279v2M488.5 277v2M489.5 275v2M490.5 273v2M491.5 271v2M492.5 269v2M493.5 267v2M494.5 265v2M495.5 263v2M496.5 261v2M497.5 259v2M498.5 257v2M499.5 254v3M500.5 250v4M501.5 247v3M502.5 244v3M503.5 240v4M504.5 239v1M512.5 447v2M514.5 444v2M515.5 442v2M517.5 439v2M518.5 437v2M519.5 435v2M520.5 433v2M521.5 431v2M522.5 142v1M522.5 238v2M523.5 236v1M523.5 240v2M524.5 142v1M525.5 426v1M527.5 145v1M531.5 244v2M532.5 421v1M533.5 419v1M534.5 248v2M534.5 252v2M535.5 250v2M535.5 255v1M536.5 149v1M536.5 252v2M536.5 258v1M537.5 255v1M537.5 261v1M538.5 258v1M539.5 261v6M540.5 269v2M541.5 266v1M541.5 271v4M542.5 269v2M542.5 275v4M543.5 271v3M543.5 279v3M544.5 274v2M544.5 282v4M545.5 276v2M545.5 286v4M546.5 278v2M546.5 290v4M547.5 280v2M547.5 294v2M547.5 408v1M548.5 296v2M548.5 402v2M549.5 298v2M549.5 399v3M550.5 300v2M550.5 397v2M551.5 394v3M552.5 303v2M552.5 391v3M553.5 305v2M553.5 389v2M554.5 387v2M555.5 385v2M556.5 208v1M556.5 309v2M557.5 382v2M558.5 204v1M559.5 379v2M560.5 314v2M561.5 200v2M561.5 376v2M563.5 197v2M566.5 193v2M569.5 189v2M569.5 324v1M570.5 321v2M571.5 319v2M572.5 185v2M572.5 317v2M572.5 325v2M573.5 314v3M573.5 327v2M574.5 312v2M574.5 329v2M574.5 347v8M575.5 309v3M575.5 331v2M575.5 345v2M575.5 355v2M576.5 180v2M576.5 307v2M576.5 333v2M576.5 344v1M576.5 357v2M577.5 305v2M577.5 335v2M578.5 303v2M578.5 337v2M579.5 301v2M579.5 339v2M580.5 342v3M581.5 174v2M581.5 298v2M581.5 345v3M582.5 296v2M582.5 348v3M584.5 350v1M584.5 358v2M585.5 348v2M585.5 360v1M586.5 168v2M587.5 14v8M587.5 345v2M587.5 362v2M588.5 6v8M588.5 22v2M588.5 343v2M589.5 24v2M589.5 365v2M590.5 26v2M590.5 111v2M590.5 340v2M591.5 28v2M591.5 113v2M591.5 162v2M591.5 338v2M591.5 344v1M591.5 357v2M592.5 30v2M592.5 115v3M592.5 345v2M592.5 355v2M593.5 32v2M593.5 118v2M593.5 347v8M594.5 120v2M594.5 159v1M594.5 371v2M596.5 123v2M598.5 376v2M599.5 378v2M600.5 128v2M600.5 380v2M601.5 382v2M602.5 68v11M602.5 384v3M603.5 43v7M603.5 60v8M603.5 79v13M603.5 387v2M604.5 50v10M604.5 92v6M604.5 389v2M605.5 391v3M606.5 394v2M607.5 396v3M608.5 399v2M609.5 138v2M609.5 401v2M610.5 140v2M610.5 403v2M611.5 142v3M611.5 405v1M612.5 145v2M612.5 408v1M613.5 147v1M627.5 420v1M628.5 422v1M629.5 458v44M630.5 427v1M630.5 451v7M630.5 502v5M631.5 429v1M631.5 445v6M631.5 507v5M632.5 427v1M632.5 435v10M632.5 512v4M633.5 429v6M633.5 516v2M634.5 518v2M635.5 520v3M636.5 523v2M637.5 525v2M638.5 527v2M639.5 429v1M639.5 529v2M640.5 531v2M641.5 533v2M642.5 433v2M642.5 535v2M643.5 537v2M644.5 539v2M645.5 437v2M645.5 541v4M646.5 545v4M647.5 440v2M647.5 549v4M648.5 442v2M648.5 553v5M649.5 558v8M650.5 566v5M651.5 571v3M652.5 574v3M653.5 577v3M654.5 580v3M655.5 583v3M656.5 586v4M657.5 590v4M658.5 594v4M659.5 598v5M660.5 603v5M662.5 606v2M663.5 146v2M664.5 609v2M665.5 611v2M666.5 613v2M668.5 152v2M668.5 616v2M669.5 618v2M670.5 620v2M671.5 156v2M671.5 622v2M672.5 158v2M672.5 624v2M673.5 160v4M673.5 626v2M674.5 164v3M682.5 171v2M683.5 173v3M684.5 176v4M685.5 180v2M687.5 183v2M702.5 655v2M704.5 658v1M708.5 662v2M709.5 664v2M710.5 666v2M711.5 668v2M712.5 670v2M713.5 672v2M714.5 674v3M715.5 189v2M715.5 677v2M716.5 191v2M716.5 679v3M717.5 193v2M717.5 682v3M718.5 195v2M718.5 685v2M719.5 197v2M719.5 687v3M720.5 199v2M720.5 690v3M721.5 693v3M722.5 696v3M723.5 203v2M723.5 261v2M723.5 699v3M724.5 702v2M725.5 704v2M726.5 207v2M727.5 707v2M728.5 206v2M729.5 710v2M731.5 210v2M731.5 713v2M733.5 213v2M733.5 716v2M734.5 718v2M735.5 720v2M736.5 722v2M737.5 724v2M738.5 726v2M739.5 255v2M739.5 728v2M740.5 257v2M740.5 730v2M741.5 259v3M741.5 732v2M742.5 262v2M742.5 734v3M743.5 737v2M744.5 739v4M745.5 743v4M746.5 747v4M747.5 751v8M748.5 220v2M748.5 759v8M749.5 767v3M750.5 770v3M751.5 773v3M752.5 225v2M752.5 776v3M753.5 227v2M753.5 779v4M754.5 229v3M754.5 783v6M755.5 232v2M755.5 789v3M756.5 234v2M757.5 236v3M758.5 239v2M759.5 242v1M760.5 244v4M761.5 248v3M762.5 251v4M763.5 255v4M764.5 259v3M765.5 262v4M766.5 266v3M767.5 269v4M768.5 273v4M769.5 277v2M778.5 650v2M779.5 645v5M779.5 657v1M780.5 650v2M780.5 659v3M781.5 648v2M782.5 646v2M783.5 645v1M784.5 603v3M784.5 642v1M785.5 598v5M785.5 608v3M785.5 639v3M786.5 595v3M786.5 611v5M786.5 637v2M787.5 591v4M787.5 616v21M787.5 645v2M788.5 588v3M789.5 585v3M790.5 583v2M790.5 649v2M790.5 665v1M791.5 581v2M791.5 651v4M791.5 663v2M792.5 579v2M792.5 655v3M792.5 661v2M793.5 577v2M793.5 658v3M794.5 575v2M795.5 573v2M795.5 671v2M796.5 570v3M796.5 673v2M797.5 567v3M797.5 675v2M798.5 564v3M798.5 677v2M799.5 561v3M799.5 679v3M800.5 557v4M800.5 682v2M801.5 553v4M801.5 684v3M802.5 549v4M802.5 687v2M803.5 545v4M803.5 689v2M804.5 541v4M804.5 691v2M805.5 538v3M805.5 693v2M6 616.5h1M8 619.5h1M9 620.5h1M99 663.5h1M100 664.5h1M103 666.5h1M116 232.5h1M141 499.5h1M143 477.5h1M143 496.5h1M146 479.5h1M148 200.5h1M148 476.5h1M150 197.5h1M150 473.5h1M151 196.5h1M152 470.5h1M153 193.5h1M155 190.5h1M157 187.5h1M159 184.5h1M162 683.5h1M165 681.5h1M166 680.5h1M167 167.5h1M168 166.5h1M169 678.5h1M170 163.5h1M170 677.5h1M171 162.5h1M171 411.5h1M172 410.5h1M173 409.5h1M173 675.5h1M175 224.5h1M176 673.5h1M178 146.5h1M178 670.5h1M179 145.5h1M179 669.5h1M181 6.5h1M181 219.5h1M181 666.5h1M182 7.5h1M183 8.5h1M184 9.5h1M185 10.5h1M186 11.5h1M187 12.5h1M188 13.5h1M188 215.5h1M189 14.5h1M190 15.5h1M190 110.5h1M191 109.5h1M191 213.5h1M192 212.5h1M195 210.5h1M212 202.5h1M213 201.5h1M214 200.5h1M215 199.5h1M217 196.5h1M218 195.5h1M219 63.5h1M219 194.5h1M219 548.5h1M220 62.5h1M220 193.5h1M220 547.5h1M221 61.5h1M221 192.5h1M221 546.5h1M222 60.5h1M223 59.5h1M223 543.5h1M224 542.5h1M225 541.5h1M226 189.5h1M229 533.5h1M230 17.5h1M232 14.5h1M232 531.5h1M233 13.5h1M233 530.5h1M234 12.5h1M235 11.5h1M237 8.5h1M238 7.5h1M239 6.5h1M239 514.5h1M240 7.5h1M241 8.5h1M242 9.5h1M243 10.5h1M245 13.5h1M246 14.5h1M247 15.5h1M248 16.5h1M249 17.5h1M251 20.5h1M252 21.5h1M253 22.5h1M255 25.5h1M256 26.5h1M264 53.5h1M265 51.5h1M282 467.5h1M290 461.5h1M291 460.5h1M292 57.5h1M292 636.5h1M293 56.5h1M293 457.5h1M293 635.5h1M294 456.5h1M295 455.5h1M296 454.5h1M296 633.5h1M297 453.5h1M299 450.5h1M299 631.5h1M300 449.5h1M300 630.5h1M301 448.5h1M301 629.5h1M303 445.5h1M304 444.5h1M304 627.5h1M305 443.5h1M307 440.5h1M308 439.5h1M309 438.5h1M310 437.5h1M312 434.5h1M313 433.5h1M314 432.5h1M315 431.5h1M316 58.5h1M316 430.5h1M317 429.5h1M318 428.5h1M321 61.5h1M321 426.5h1M322 425.5h1M323 424.5h1M324 423.5h1M325 422.5h1M326 64.5h1M326 421.5h1M327 420.5h1M328 419.5h1M329 66.5h1M329 418.5h1M330 417.5h1M331 416.5h1M332 68.5h1M332 415.5h1M333 69.5h1M333 414.5h1M334 413.5h1M335 412.5h1M336 71.5h1M336 411.5h1M337 410.5h1M338 409.5h1M339 73.5h1M340 74.5h1M341 75.5h1M341 592.5h1M344 77.5h1M345 78.5h1M346 79.5h1M346 589.5h1M347 80.5h1M350 82.5h1M351 83.5h1M351 586.5h1M354 85.5h1M354 584.5h1M357 87.5h1M358 88.5h1M359 581.5h1M361 90.5h1M362 579.5h1M363 578.5h1M364 92.5h1M365 93.5h1M366 94.5h1M366 576.5h1M367 95.5h1M367 575.5h1M368 96.5h1M369 97.5h1M370 98.5h1M370 573.5h1M371 99.5h1M371 572.5h1M372 100.5h1M372 112.5h1M372 152.5h1M373 101.5h1M374 102.5h1M374 570.5h1M375 103.5h1M375 110.5h1M375 154.5h1M376 104.5h1M377 107.5h1M377 157.5h1M377 396.5h1M377 568.5h1M378 567.5h1M380 105.5h1M380 107.5h1M380 159.5h1M380 394.5h1M381 108.5h1M381 393.5h1M381 565.5h1M382 109.5h1M382 564.5h1M382 635.5h1M383 103.5h1M383 161.5h1M383 563.5h1M384 391.5h1M384 562.5h1M385 111.5h1M385 633.5h1M386 112.5h1M386 559.5h1M386 632.5h1M387 113.5h1M387 398.5h1M387 558.5h1M388 557.5h1M389 388.5h1M389 556.5h1M389 630.5h1M390 115.5h1M390 396.5h1M390 555.5h1M391 116.5h1M391 554.5h1M392 117.5h1M392 553.5h1M393 118.5h1M393 394.5h1M393 552.5h1M394 119.5h1M394 385.5h1M394 627.5h1M395 549.5h1M396 392.5h1M396 548.5h1M397 121.5h1M397 139.5h1M397 383.5h1M397 391.5h1M397 547.5h1M398 122.5h1M398 382.5h1M398 390.5h1M398 546.5h1M399 123.5h1M399 389.5h1M399 545.5h1M400 124.5h1M400 388.5h1M401 380.5h1M401 387.5h1M401 542.5h1M402 136.5h1M402 379.5h1M402 386.5h1M403 385.5h1M404 537.5h1M406 534.5h1M407 136.5h1M407 375.5h1M407 381.5h1M408 137.5h1M408 380.5h1M409 138.5h1M409 372.5h1M409 529.5h1M410 139.5h1M410 371.5h1M411 140.5h1M411 370.5h1M411 378.5h1M411 526.5h1M412 141.5h1M412 369.5h1M412 377.5h1M413 142.5h1M413 368.5h1M413 376.5h1M414 143.5h1M414 521.5h1M415 144.5h1M416 145.5h1M417 146.5h1M417 364.5h1M417 426.5h1M418 103.5h1M418 147.5h1M418 161.5h1M418 363.5h1M418 514.5h1M419 148.5h1M419 362.5h1M420 149.5h1M420 361.5h1M421 105.5h1M421 150.5h1M421 159.5h1M421 360.5h1M422 151.5h1M422 359.5h1M423 152.5h1M423 358.5h1M424 107.5h1M424 153.5h1M424 157.5h1M424 357.5h1M425 108.5h1M425 154.5h1M426 109.5h1M427 110.5h1M427 154.5h1M427 157.5h1M427 355.5h1M428 111.5h1M428 153.5h1M428 158.5h1M429 112.5h1M429 152.5h1M430 161.5h1M430 353.5h1M431 115.5h1M431 149.5h1M431 162.5h1M431 352.5h1M433 165.5h1M434 166.5h1M434 350.5h1M434 464.5h1M435 349.5h1M435 465.5h1M436 348.5h1M437 171.5h1M437 347.5h1M437 468.5h1M438 346.5h1M439 345.5h1M440 344.5h1M441 178.5h1M441 343.5h1M442 342.5h1M443 341.5h1M444 183.5h1M444 340.5h1M445 339.5h1M447 188.5h1M448 189.5h1M448 337.5h1M449 190.5h1M449 336.5h1M450 335.5h1M451 334.5h1M452 192.5h1M453 193.5h1M454 194.5h1M454 332.5h1M455 195.5h1M455 331.5h1M456 330.5h1M458 197.5h1M459 51.5h1M459 198.5h1M459 325.5h1M460 50.5h1M460 199.5h1M461 49.5h1M461 200.5h1M461 322.5h1M462 201.5h1M463 46.5h1M463 202.5h1M464 45.5h1M464 317.5h1M465 44.5h1M468 208.5h1M468 310.5h1M469 209.5h1M471 212.5h1M471 305.5h1M472 213.5h1M473 214.5h1M473 302.5h1M474 215.5h1M475 216.5h1M475 299.5h1M476 217.5h1M477 218.5h1M477 296.5h1M478 219.5h1M479 220.5h1M479 293.5h1M481 290.5h1M486 281.5h1M496 458.5h1M501 455.5h1M506 452.5h1M511 449.5h1M513 446.5h1M516 441.5h1M517 137.5h1M520 139.5h1M521 140.5h1M522 430.5h1M523 429.5h1M524 235.5h1M524 242.5h1M524 428.5h1M525 234.5h1M525 236.5h1M525 238.5h1M525 243.5h1M526 233.5h1M526 235.5h1M526 239.5h1M526 244.5h1M526 425.5h1M527 232.5h1M527 234.5h1M527 240.5h1M527 245.5h1M527 424.5h1M527 426.5h1M528 231.5h1M528 241.5h1M528 246.5h1M528 423.5h1M528 425.5h1M529 230.5h1M529 242.5h1M529 247.5h1M529 422.5h1M529 424.5h1M530 229.5h1M530 232.5h1M530 243.5h1M530 248.5h1M530 421.5h1M530 423.5h1M531 228.5h1M531 231.5h1M531 249.5h1M531 422.5h1M532 227.5h1M532 230.5h1M532 246.5h1M532 250.5h1M533 226.5h1M533 247.5h1M533 251.5h1M534 149.5h1M534 225.5h1M534 418.5h1M535 148.5h1M535 228.5h1M535 417.5h1M536 227.5h1M537 223.5h1M538 222.5h1M539 221.5h1M540 220.5h1M543 218.5h1M543 223.5h1M544 217.5h1M545 216.5h1M546 215.5h1M547 214.5h1M548 213.5h1M548 220.5h1M548 282.5h1M551 211.5h1M551 302.5h1M552 210.5h1M552 631.5h1M553 209.5h1M554 208.5h1M554 307.5h1M555 209.5h1M555 308.5h1M556 384.5h1M557 311.5h1M558 312.5h1M558 381.5h1M559 203.5h1M559 313.5h1M560 202.5h1M560 378.5h1M561 316.5h1M562 199.5h1M562 317.5h1M562 375.5h1M563 318.5h1M563 374.5h1M564 196.5h1M564 373.5h1M565 195.5h1M565 372.5h1M566 320.5h1M566 371.5h1M567 192.5h1M567 321.5h1M567 370.5h1M568 191.5h1M568 322.5h1M568 325.5h1M568 369.5h1M569 368.5h1M570 188.5h1M570 367.5h1M571 187.5h1M571 324.5h1M571 366.5h1M572 365.5h1M573 184.5h1M573 364.5h1M574 183.5h1M575 182.5h1M576 362.5h1M577 179.5h1M577 359.5h1M577 361.5h1M578 178.5h1M578 342.5h1M579 177.5h1M580 176.5h1M580 300.5h1M581 358.5h1M582 173.5h1M583 172.5h1M583 295.5h1M584 171.5h1M585 170.5h1M586 347.5h1M587 167.5h1M588 166.5h1M588 364.5h1M589 165.5h1M589 342.5h1M590 164.5h1M590 359.5h1M590 367.5h1M591 110.5h1M591 368.5h1M592 109.5h1M592 161.5h1M592 337.5h1M592 369.5h1M593 108.5h1M593 160.5h1M593 336.5h1M593 370.5h1M594 34.5h1M594 107.5h1M594 335.5h1M595 35.5h1M595 106.5h1M595 122.5h1M595 334.5h1M595 373.5h1M596 36.5h1M596 105.5h1M596 333.5h1M596 374.5h1M597 37.5h1M597 104.5h1M597 125.5h1M597 375.5h1M598 38.5h1M598 103.5h1M598 126.5h1M599 39.5h1M599 102.5h1M599 127.5h1M599 331.5h1M600 40.5h1M600 101.5h1M600 330.5h1M601 41.5h1M601 100.5h1M601 130.5h1M601 329.5h1M602 42.5h1M602 99.5h1M602 131.5h1M603 98.5h1M603 132.5h1M604 133.5h1M605 134.5h1M606 135.5h1M607 136.5h1M608 137.5h1M614 408.5h1M615 409.5h1M616 410.5h1M617 411.5h1M618 412.5h1M619 413.5h1M620 414.5h1M621 415.5h1M622 318.5h1M624 417.5h1M625 418.5h1M626 419.5h1M627 315.5h1M630 422.5h1M631 423.5h1M632 312.5h1M634 425.5h1M637 309.5h1M637 427.5h1M638 428.5h1M640 431.5h1M641 432.5h1M642 306.5h1M643 435.5h1M644 436.5h1M646 439.5h1M647 303.5h1M649 444.5h1M650 301.5h1M653 299.5h1M656 297.5h1M659 142.5h1M659 295.5h1M660 143.5h1M661 144.5h1M662 140.5h1M662 145.5h1M662 293.5h1M663 608.5h1M664 148.5h1M665 138.5h1M665 149.5h1M666 137.5h1M666 150.5h1M667 151.5h1M667 615.5h1M669 135.5h1M669 154.5h1M670 155.5h1M674 628.5h1M675 629.5h1M676 630.5h1M677 168.5h1M677 631.5h1M678 632.5h1M679 633.5h1M682 635.5h1M683 636.5h1M684 637.5h1M685 638.5h1M686 182.5h1M686 639.5h1M687 640.5h1M688 185.5h1M688 641.5h1M689 642.5h1M690 643.5h1M691 644.5h1M692 645.5h1M693 646.5h1M694 647.5h1M695 648.5h1M696 649.5h1M697 121.5h1M697 650.5h1M698 651.5h1M699 652.5h1M700 653.5h1M701 654.5h1M702 658.5h1M703 657.5h1M708 274.5h1M711 272.5h1M712 113.5h1M712 271.5h1M715 269.5h1M716 268.5h1M717 110.5h1M719 266.5h1M720 265.5h1M721 201.5h1M721 264.5h1M722 107.5h1M722 202.5h1M722 263.5h1M724 205.5h1M724 260.5h1M725 206.5h1M725 259.5h1M726 258.5h1M726 706.5h1M727 104.5h1M727 205.5h1M727 209.5h1M727 257.5h1M728 709.5h1M729 208.5h1M730 209.5h1M730 712.5h1M732 212.5h1M732 715.5h1M743 264.5h1M745 217.5h1M746 218.5h1M746 266.5h1M747 219.5h1M747 267.5h1M748 268.5h1M749 222.5h1M750 223.5h1M751 224.5h1M751 270.5h1M752 271.5h1M757 274.5h1M762 277.5h1M764 239.5h1M765 366.5h1M768 364.5h1M771 362.5h1M773 283.5h1M776 285.5h1M777 286.5h1M778 287.5h1M781 289.5h1M782 290.5h1M783 291.5h1M786 293.5h1M786 644.5h1M787 294.5h1M788 295.5h1M788 354.5h1M788 647.5h1M789 648.5h1M791 297.5h1M791 352.5h1M792 298.5h1M792 351.5h1M793 299.5h1M793 350.5h1M794 300.5h1M794 670.5h1M795 301.5h1M796 302.5h1M796 348.5h1M797 303.5h1M797 347.5h1M798 304.5h1M798 346.5h1M799 345.5h1M800 344.5h1M800 488.5h1M801 343.5h1M802 342.5h1M803 341.5h1M803 490.5h1M804 340.5h1M805 71.5h1M805 222.5h1M805 308.5h1M805 339.5h1" fill="none" stroke="#7f6b12" stroke-width="1" shape-rendering="crispEdges"/>
<path d="M748 7.5h2M750 8.5h2M752 9.5h2M754 10.5h4M758 11.5h4M762 12.5h4M764 13.5h2M761 15.5h2M308 17.5h2M304 18.5h4M299 19.5h5M294 20.5h5M755 20.5h2M290 21.5h4M288 22.5h3M284 23.5h4M282 24.5h2M280 25.5h2M747 27.5h2M741 32.5h2M773 32.5h2M739 33.5h2M775 33.5h2M736 34.5h3M733 35.5h3M731 36.5h2M802 36.5h2M728 37.5h3M800 37.5h2M726 38.5h2M798 38.5h2M245 39.5h2M724 39.5h2M796 39.5h2M241 40.5h4M247 40.5h2M722 40.5h2M793 40.5h3M239 41.5h2M249 41.5h2M720 41.5h2M782 41.5h4M791 41.5h2M251 42.5h2M718 42.5h2M786 42.5h5M253 43.5h2M235 44.5h2M255 44.5h2M715 44.5h2M257 45.5h2M259 46.5h2M712 46.5h2M709 48.5h2M263 49.5h2M266 51.5h2M268 52.5h2M278 52.5h2M270 53.5h2M275 53.5h3M272 54.5h3M706 56.5h2M214 57.5h2M704 57.5h2M216 58.5h2M702 58.5h2M218 59.5h4M700 59.5h2M692 71.5h3M687 72.5h5M684 73.5h3M681 75.5h2M673 83.5h3M667 84.5h6M662 85.5h5M658 86.5h4M654 87.5h4M312 88.5h3M651 88.5h3M310 89.5h2M315 89.5h2M647 89.5h4M317 90.5h2M392 90.5h35M644 90.5h3M319 91.5h2M343 91.5h49M427 91.5h15M642 91.5h2M321 92.5h22M442 92.5h15M640 92.5h2M457 93.5h32M522 93.5h9M213 94.5h2M489 94.5h60M775 94.5h15M547 95.5h17M636 95.5h2M751 95.5h24M790 95.5h5M564 96.5h39M653 96.5h98M795 96.5h4M217 97.5h4M603 97.5h50M799 97.5h5M221 98.5h3M804 98.5h2M6 105.5h149M208 105.5h104M207 106.5h2M200 107.5h2M204 107.5h3M202 108.5h2M774 118.5h5M772 119.5h2M779 119.5h4M768 122.5h2M191 127.5h3M194 128.5h3M190 132.5h2M192 133.5h2M743 135.5h2M739 136.5h4M745 136.5h2M737 137.5h2M747 137.5h2M735 138.5h2M749 138.5h9M732 140.5h2M730 141.5h2M710 144.5h2M708 145.5h2M706 146.5h2M137 149.5h51M722 149.5h2M719 151.5h2M698 153.5h3M695 154.5h3M184 159.5h2M186 160.5h2M188 161.5h2M689 166.5h2M679 168.5h9M677 169.5h2M675 170.5h2M176 171.5h9M172 172.5h4M672 172.5h2M668 175.5h2M666 176.5h2M664 177.5h2M661 178.5h3M175 179.5h2M659 179.5h2M174 180.5h2M649 186.5h4M171 187.5h2M633 187.5h16M169 188.5h2M631 188.5h2M628 189.5h3M626 190.5h2M623 191.5h3M166 192.5h3M620 192.5h3M169 193.5h3M617 193.5h3M615 194.5h2M163 199.5h2M157 200.5h2M161 200.5h2M159 201.5h2M160 204.5h3M156 205.5h4M157 206.5h2M609 207.5h2M609 208.5h2M609 209.5h2M607 213.5h2M604 214.5h3M594 215.5h10M157 216.5h2M592 216.5h2M590 217.5h2M729 220.5h27M727 221.5h2M756 221.5h25M725 222.5h2M781 222.5h17M723 223.5h2M798 223.5h8M157 224.5h2M719 224.5h4M155 225.5h2M716 225.5h3M713 226.5h3M711 227.5h2M708 228.5h3M706 229.5h2M702 230.5h4M698 231.5h4M149 232.5h2M694 232.5h4M691 233.5h3M688 234.5h3M145 235.5h2M684 235.5h4M681 236.5h3M282 237.5h68M669 237.5h12M143 238.5h148M350 238.5h118M522 238.5h147M468 239.5h81M302 243.5h2M675 244.5h2M305 245.5h2M672 246.5h2M670 247.5h2M131 248.5h4M135 249.5h2M141 250.5h3M138 251.5h3M128 257.5h2M130 258.5h2M126 264.5h2M124 265.5h2M666 268.5h2M670 271.5h2M678 279.5h2M682 282.5h2M684 283.5h11M121 291.5h2M118 292.5h3M116 293.5h2M114 294.5h2M112 295.5h2M112 299.5h2M110 300.5h2M107 301.5h3M104 302.5h3M98 306.5h5M98 311.5h2M100 312.5h5M94 325.5h3M90 326.5h4M88 327.5h2M86 328.5h2M90 331.5h3M721 331.5h2M88 332.5h2M725 334.5h2M728 336.5h2M730 337.5h2M733 339.5h2M737 342.5h2M91 346.5h2M82 347.5h3M89 347.5h2M85 348.5h4M83 354.5h2M76 356.5h3M85 356.5h2M79 357.5h2M83 357.5h2M81 358.5h2M75 361.5h2M77 362.5h2M753 362.5h2M76 377.5h2M74 378.5h2M84 378.5h3M75 379.5h2M82 379.5h2M77 380.5h2M80 380.5h2M83 384.5h2M83 391.5h2M85 392.5h3M775 398.5h2M778 400.5h2M780 401.5h2M79 403.5h2M77 404.5h2M520 404.5h2M779 404.5h2M79 405.5h3M520 405.5h2M781 405.5h2M82 406.5h2M520 406.5h2M783 406.5h3M786 407.5h2M80 408.5h2M787 408.5h3M790 409.5h2M792 410.5h2M6 415.5h73M78 416.5h2M80 417.5h2M82 418.5h2M84 419.5h2M82 427.5h2M80 428.5h2M84 449.5h4M81 450.5h3M88 450.5h2M90 451.5h2M87 458.5h2M85 459.5h2M89 464.5h4M86 465.5h3M94 469.5h2M96 470.5h2M98 471.5h2M95 477.5h2M538 477.5h2M93 478.5h2M540 478.5h2M542 479.5h2M544 480.5h2M92 484.5h2M90 485.5h2M86 486.5h4M544 486.5h2M82 487.5h4M542 487.5h2M540 488.5h2M80 492.5h2M87 492.5h3M82 493.5h2M85 493.5h2M88 498.5h2M83 505.5h2M81 506.5h2M79 507.5h2M73 516.5h2M70 518.5h2M68 519.5h2M66 520.5h2M69 523.5h3M67 524.5h2M65 526.5h5M70 527.5h3M57 539.5h3M54 540.5h3M52 554.5h3M49 555.5h3M53 562.5h2M51 563.5h2M49 564.5h2M51 568.5h2M49 569.5h2M46 570.5h3M43 571.5h3M45 588.5h2M47 589.5h2M44 594.5h143M345 594.5h193M183 603.5h2M283 603.5h2M341 603.5h2M182 604.5h2M283 604.5h2M283 605.5h2M283 606.5h2M283 607.5h2M765 610.5h3M768 611.5h4M762 612.5h2M772 612.5h2M774 613.5h2M776 614.5h3M779 615.5h4M783 616.5h3M786 617.5h3M789 618.5h2M546 620.5h10M556 621.5h16M572 622.5h17M589 623.5h16M605 624.5h16M621 625.5h17M638 626.5h16M654 627.5h17M671 628.5h16M687 629.5h16M703 630.5h17M720 631.5h16M736 632.5h9M358 644.5h2M360 645.5h2M753 650.5h5M748 651.5h5M44.5 572v2M45.5 574v2M45.5 585v2M47.5 559v2M47.5 582v2M47.5 593v1M48.5 557v2M48.5 561v2M48.5 578v2M48.5 591v2M49.5 556v1M49.5 563v1M53.5 543v3M53.5 565v3M54.5 541v2M54.5 563v2M55.5 552v2M56.5 550v2M59.5 538v1M60.5 536v2M61.5 534v2M62.5 531v3M63.5 529v2M64.5 527v2M66.5 521v2M67.5 523v3M71.5 522v3M72.5 525v2M74.5 359v2M74.5 371v2M75.5 357v2M75.5 369v2M76.5 355v1M76.5 367v2M76.5 513v2M77.5 365v2M77.5 405v4M77.5 413v2M77.5 511v2M78.5 410v3M78.5 509v2M79.5 429v9M79.5 508v1M80.5 438v2M80.5 489v2M81.5 350v3M81.5 386v2M81.5 440v3M81.5 447v3M82.5 348v2M82.5 388v2M82.5 400v2M82.5 407v1M82.5 443v4M83.5 390v1M83.5 398v2M84.5 396v2M84.5 425v2M84.5 460v2M84.5 504v1M85.5 355v1M85.5 394v2M85.5 422v3M85.5 462v2M85.5 502v2M86.5 377v6M86.5 393v1M86.5 420v2M86.5 464v1M86.5 500v2M87.5 329v2M87.5 340v2M88.5 331v1M88.5 338v2M89.5 336v2M89.5 491v1M90.5 334v2M90.5 455v2M90.5 493v2M91.5 332v2M91.5 345v1M91.5 453v2M91.5 495v2M92.5 465v1M92.5 479v3M93.5 466v2M93.5 482v2M94.5 468v1M97.5 308v3M97.5 323v2M97.5 475v2M98.5 307v1M98.5 321v2M98.5 473v2M99.5 319v2M99.5 472v1M100.5 317v2M102.5 305v1M102.5 314v2M103.5 303v2M103.5 313v1M113.5 296v2M122.5 288v3M123.5 268v3M123.5 278v10M124.5 266v2M124.5 276v2M125.5 274v2M129.5 261v2M130.5 259v2M131.5 249v4M138.5 148v1M140.5 145v2M143.5 237v1M144.5 140v2M145.5 138v2M145.5 239v2M146.5 241v3M147.5 135v2M147.5 244v3M152.5 229v2M153.5 227v2M154.5 202v2M154.5 210v2M155.5 106v2M155.5 200v2M155.5 212v2M156.5 108v2M156.5 207v2M156.5 214v2M158.5 111v2M158.5 123v2M159.5 113v2M159.5 121v2M159.5 217v7M160.5 115v2M160.5 119v2M161.5 117v2M161.5 206v4M162.5 203v3M163.5 197v2M170.5 175v2M170.5 191v2M171.5 173v2M173.5 185v2M174.5 182v3M175.5 181v1M176.5 178v1M178.5 612v14M179.5 608v4M179.5 626v2M180.5 628v2M181.5 605v2M181.5 630v2M182.5 632v2M183.5 161v3M183.5 605v3M184.5 160v1M184.5 599v4M185.5 169v2M185.5 596v3M185.5 636v2M186.5 595v1M187.5 150v1M187.5 639v2M188.5 147v2M188.5 151v3M188.5 641v4M189.5 130v2M189.5 645v4M190.5 128v2M190.5 144v2M190.5 159v2M190.5 649v4M191.5 653v3M192.5 656v2M193.5 658v2M194.5 660v2M195.5 135v2M195.5 662v2M196.5 120v2M196.5 137v2M196.5 664v2M197.5 101v2M197.5 118v2M197.5 126v2M198.5 99v2M198.5 103v2M199.5 105v2M202.5 6v3M202.5 111v3M203.5 9v3M203.5 34v2M203.5 102v3M203.5 109v2M204.5 12v2M204.5 36v2M204.5 105v2M205.5 14v2M205.5 38v2M206.5 16v2M206.5 40v2M207.5 18v11M207.5 42v2M209.5 103v2M210.5 46v2M210.5 101v2M211.5 48v2M211.5 98v3M212.5 50v4M212.5 95v3M213.5 54v3M213.5 93v1M224.5 96v2M226.5 53v2M226.5 86v3M226.5 93v2M227.5 78v2M227.5 84v2M227.5 89v4M228.5 74v4M228.5 82v2M229.5 71v3M230.5 68v3M231.5 66v2M232.5 64v2M277.5 31v3M278.5 28v3M278.5 34v3M279.5 26v2M279.5 37v2M279.5 504v15M280.5 39v2M280.5 50v2M280.5 494v10M280.5 519v23M281.5 41v2M281.5 484v10M281.5 542v25M282.5 43v2M282.5 47v2M282.5 472v12M282.5 567v26M283.5 45v2M283.5 463v9M283.5 593v10M284.5 455v8M284.5 608v31M285.5 448v7M285.5 639v11M286.5 441v7M287.5 434v7M288.5 428v6M289.5 419v9M290.5 409v10M291.5 403v6M292.5 393v10M293.5 383v10M294.5 372v11M295.5 361v11M296.5 351v10M297.5 341v10M298.5 333v8M299.5 325v8M300.5 238v2M300.5 317v8M301.5 240v3M301.5 308v9M302.5 300v8M303.5 292v8M304.5 284v8M305.5 273v11M306.5 258v15M307.5 8v2M307.5 246v12M309.5 11v6M310.5 90v2M311.5 92v4M311.5 102v3M312.5 96v6M341.5 606v2M342.5 604v2M343.5 600v3M344.5 596v4M344.5 607v2M345.5 595v1M356.5 620v2M356.5 634v5M357.5 622v2M357.5 632v2M357.5 639v5M358.5 624v3M358.5 630v2M359.5 627v3M492.5 240v2M493.5 242v5M494.5 247v6M495.5 253v5M496.5 258v5M497.5 263v5M498.5 268v5M499.5 273v6M500.5 279v6M501.5 285v7M502.5 292v6M503.5 298v5M504.5 303v5M505.5 308v5M506.5 313v5M507.5 318v5M508.5 323v5M509.5 328v5M510.5 333v5M511.5 338v5M512.5 343v5M513.5 348v5M514.5 353v6M515.5 359v6M516.5 365v7M517.5 372v8M518.5 380v8M519.5 388v8M520.5 396v8M521.5 407v6M522.5 413v6M523.5 419v4M524.5 423v4M525.5 427v4M526.5 431v2M527.5 433v3M528.5 436v2M529.5 438v3M529.5 571v5M530.5 441v3M530.5 563v8M530.5 576v3M531.5 444v4M531.5 558v5M531.5 579v4M532.5 448v2M532.5 513v4M532.5 538v4M532.5 554v4M532.5 583v3M533.5 450v2M533.5 509v4M533.5 517v5M533.5 534v4M533.5 542v5M533.5 551v3M533.5 586v2M534.5 452v2M534.5 494v5M534.5 506v3M534.5 522v5M534.5 531v3M534.5 547v4M534.5 588v3M535.5 454v2M535.5 499v7M535.5 527v4M535.5 591v2M536.5 456v2M536.5 593v1M537.5 458v3M537.5 475v2M537.5 595v2M538.5 461v3M538.5 473v2M538.5 597v2M539.5 464v4M539.5 471v2M539.5 599v2M540.5 468v3M540.5 601v2M541.5 603v3M542.5 606v3M543.5 609v4M544.5 613v4M545.5 481v2M545.5 617v3M546.5 483v3M588.5 233v5M589.5 222v11M590.5 218v4M608.5 212v1M609.5 205v7M610.5 201v4M611.5 199v2M614.5 195v2M635.5 96v1M660.5 261v2M661.5 259v2M662.5 257v2M663.5 255v2M664.5 253v2M675.5 275v2M676.5 81v2M677.5 242v2M678.5 78v2M678.5 239v3M679.5 238v1M692.5 161v4M693.5 157v4M694.5 70v1M694.5 155v2M694.5 284v1M695.5 68v2M695.5 285v2M696.5 66v2M696.5 287v2M697.5 64v2M697.5 289v3M698.5 62v2M698.5 292v2M699.5 60v2M699.5 294v2M700.5 296v2M701.5 298v2M702.5 150v2M703.5 301v2M704.5 303v2M705.5 305v2M706.5 307v4M707.5 53v3M707.5 311v2M708.5 49v4M708.5 313v2M710.5 316v2M711.5 318v2M714.5 322v2M715.5 146v2M716.5 148v2M717.5 150v2M717.5 326v2M726.5 145v2M740.5 344v2M743.5 348v2M744.5 633v3M744.5 643v4M745.5 351v2M745.5 636v7M746.5 648v2M747.5 354v2M748.5 356v2M757.5 622v4M757.5 649v1M758.5 136v2M758.5 618v4M758.5 626v5M758.5 645v4M759.5 615v3M759.5 631v14M760.5 368v2M761.5 132v2M763.5 129v2M764.5 15v6M764.5 127v2M765.5 14v1M765.5 21v4M765.5 374v2M765.5 382v2M766.5 124v2M766.5 379v3M766.5 384v2M767.5 377v2M769.5 388v2M771.5 391v2M772.5 393v2M773.5 395v2M778.5 35v2M779.5 115v2M780.5 113v2M781.5 39v2M781.5 111v2M781.5 118v1M782.5 109v2M783.5 104v5M784.5 99v5M785.5 97v2M785.5 405v1M786.5 95v2M796.5 413v2M798.5 416v4M799.5 420v5M800.5 425v2M802.5 428v2M803.5 430v5M804.5 435v6M805.5 33v2M805.5 441v4M44 587.5h1M46 576.5h1M46 584.5h1M47 577.5h1M48 581.5h1M49 580.5h1M49 590.5h1M54 546.5h1M55 547.5h1M56 548.5h1M57 549.5h1M72 517.5h1M75 373.5h1M75 515.5h1M76 374.5h1M77 375.5h1M78 364.5h1M78 376.5h1M79 363.5h1M79 381.5h1M79 409.5h1M79 491.5h1M81 402.5h1M81 488.5h1M82 353.5h1M82 385.5h1M84 494.5h1M85 383.5h1M87 499.5h1M88 342.5h1M89 343.5h1M89 457.5h1M90 344.5h1M90 497.5h1M92 452.5h1M101 316.5h1M114 298.5h1M124 271.5h1M125 272.5h1M126 273.5h1M127 256.5h1M128 255.5h1M128 263.5h1M129 254.5h1M130 253.5h1M137 250.5h1M139 147.5h1M141 144.5h1M142 143.5h1M143 142.5h1M144 236.5h1M144 249.5h1M145 248.5h1M146 137.5h1M146 247.5h1M147 234.5h1M148 134.5h1M148 233.5h1M149 133.5h1M150 132.5h1M151 131.5h1M151 231.5h1M152 130.5h1M153 129.5h1M154 128.5h1M154 226.5h1M155 127.5h1M155 204.5h1M155 209.5h1M156 126.5h1M156 199.5h1M157 110.5h1M157 125.5h1M162 196.5h1M163 195.5h1M164 194.5h1M165 193.5h1M168 189.5h1M169 177.5h1M169 190.5h1M170 178.5h1M171 179.5h1M172 180.5h1M173 181.5h1M180 607.5h1M183 634.5h1M184 164.5h1M184 635.5h1M185 165.5h1M186 166.5h1M186 168.5h1M186 638.5h1M187 167.5h1M189 146.5h1M189 154.5h1M190 155.5h1M191 143.5h1M191 156.5h1M191 158.5h1M192 142.5h1M192 157.5h1M193 141.5h1M194 134.5h1M194 140.5h1M195 139.5h1M197 122.5h1M197 666.5h1M198 117.5h1M198 123.5h1M198 125.5h1M199 98.5h1M199 116.5h1M199 124.5h1M200 99.5h1M200 115.5h1M201 100.5h1M201 114.5h1M202 33.5h1M202 101.5h1M203 32.5h1M204 31.5h1M205 30.5h1M206 29.5h1M208 44.5h1M209 45.5h1M215 95.5h1M216 96.5h1M224 56.5h1M225 55.5h1M225 57.5h1M225 95.5h1M226 58.5h1M227 52.5h1M227 59.5h1M228 51.5h1M228 60.5h1M228 80.5h1M229 50.5h1M229 61.5h1M229 81.5h1M230 49.5h1M230 62.5h1M231 48.5h1M231 63.5h1M232 47.5h1M233 46.5h1M234 45.5h1M237 43.5h1M238 42.5h1M261 47.5h1M262 48.5h1M265 50.5h1M281 49.5h1M304 244.5h1M305 6.5h1M306 7.5h1M308 10.5h1M343 606.5h1M345 609.5h1M346 610.5h1M347 611.5h1M348 612.5h1M349 613.5h1M350 614.5h1M351 615.5h1M352 616.5h1M353 617.5h1M354 618.5h1M355 619.5h1M535 493.5h1M536 492.5h1M537 491.5h1M538 490.5h1M539 489.5h1M612 198.5h1M613 197.5h1M638 94.5h1M639 93.5h1M653 185.5h1M654 184.5h1M655 183.5h1M656 182.5h1M657 181.5h1M658 180.5h1M661 263.5h1M662 264.5h1M663 265.5h1M664 266.5h1M665 252.5h1M665 267.5h1M666 251.5h1M667 250.5h1M668 249.5h1M668 269.5h1M669 248.5h1M669 270.5h1M670 174.5h1M671 173.5h1M672 272.5h1M673 273.5h1M674 171.5h1M674 245.5h1M674 274.5h1M676 277.5h1M677 80.5h1M677 278.5h1M679 77.5h1M680 76.5h1M680 280.5h1M681 281.5h1M683 74.5h1M688 167.5h1M691 165.5h1M701 152.5h1M702 300.5h1M703 149.5h1M704 148.5h1M705 147.5h1M709 315.5h1M711 47.5h1M712 143.5h1M712 320.5h1M713 144.5h1M713 321.5h1M714 45.5h1M714 145.5h1M715 324.5h1M716 325.5h1M717 43.5h1M718 152.5h1M718 328.5h1M719 329.5h1M720 330.5h1M721 150.5h1M723 332.5h1M724 148.5h1M724 333.5h1M725 147.5h1M727 144.5h1M727 335.5h1M728 143.5h1M729 142.5h1M732 338.5h1M734 139.5h1M735 340.5h1M736 341.5h1M739 343.5h1M741 346.5h1M742 347.5h1M743 31.5h1M744 30.5h1M744 350.5h1M745 29.5h1M745 647.5h1M746 28.5h1M746 353.5h1M747 6.5h1M747 650.5h1M749 26.5h1M749 358.5h1M750 25.5h1M750 359.5h1M751 24.5h1M751 360.5h1M752 23.5h1M752 361.5h1M753 22.5h1M754 21.5h1M755 363.5h1M756 364.5h1M757 19.5h1M757 365.5h1M758 18.5h1M758 366.5h1M759 17.5h1M759 135.5h1M759 367.5h1M760 16.5h1M760 134.5h1M760 614.5h1M761 370.5h1M761 613.5h1M762 131.5h1M762 371.5h1M763 14.5h1M763 372.5h1M764 373.5h1M764 611.5h1M765 126.5h1M766 25.5h1M766 376.5h1M767 26.5h1M767 123.5h1M767 386.5h1M768 27.5h1M768 387.5h1M769 28.5h1M770 29.5h1M770 121.5h1M770 390.5h1M771 30.5h1M771 120.5h1M772 31.5h1M774 397.5h1M777 34.5h1M777 399.5h1M779 37.5h1M780 38.5h1M780 117.5h1M782 402.5h1M783 403.5h1M784 404.5h1M794 411.5h1M795 412.5h1M797 415.5h1M801 427.5h1M804 35.5h1" fill="none" stroke="#000" stroke-width="1" shape-rendering="crispEdges"/>
<path d="M397 247.5h20M387 248.5h10M417 248.5h10M380 249.5h7M427 249.5h7M375 250.5h5M434 250.5h5M370 251.5h5M439 251.5h5M366 252.5h4M444 252.5h4M363 253.5h3M448 253.5h3M359 254.5h4M451 254.5h4M356 255.5h3M455 255.5h3M353 256.5h3M458 256.5h3M351 257.5h2M461 257.5h2M348 258.5h3M463 258.5h3M346 259.5h2M466 259.5h2M343 260.5h3M468 260.5h3M341 261.5h2M471 261.5h2M339 262.5h2M473 262.5h2M337 263.5h2M475 263.5h2M335 264.5h2M477 264.5h2M333 265.5h2M479 265.5h2M331 266.5h2M481 266.5h2M329 267.5h2M483 267.5h2M327 268.5h2M485 268.5h2M326 269.5h1M487 269.5h1M324 270.5h2M488 270.5h2M322 271.5h2M490 271.5h2M321 272.5h1M492 272.5h1M319 273.5h2M493 273.5h2M318 274.5h1M495 274.5h1M316 275.5h2M496 275.5h2M315 276.5h1M498 276.5h1M314 277.5h1M499 277.5h1M312 278.5h2M500 278.5h2M311 279.5h1M502 279.5h1M310 280.5h1M503 280.5h1M308 281.5h2M504 281.5h2M307 282.5h1M506 282.5h1M306 283.5h1M507 283.5h1M305 284.5h1M508 284.5h1M303 285.5h2M509 285.5h2M302 286.5h1M511 286.5h1M301 287.5h1M512 287.5h1M300 288.5h1M513 288.5h1M299 289.5h1M514 289.5h1M298 290.5h1M515 290.5h1M297 291.5h1M516 291.5h1M296 292.5h1M517 292.5h1M295 293.5h1M518 293.5h1M294 294.5h1M519 294.5h1M294 519.5h1M519 519.5h1M295 520.5h1M518 520.5h1M296 521.5h1M517 521.5h1M297 522.5h1M516 522.5h1M298 523.5h1M515 523.5h1M299 524.5h1M514 524.5h1M300 525.5h1M513 525.5h1M301 526.5h1M512 526.5h1M302 527.5h1M511 527.5h1M303 528.5h2M509 528.5h2M305 529.5h1M508 529.5h1M306 530.5h1M507 530.5h1M307 531.5h1M506 531.5h1M308 532.5h2M504 532.5h2M310 533.5h1M503 533.5h1M311 534.5h1M502 534.5h1M312 535.5h2M500 535.5h2M314 536.5h1M499 536.5h1M315 537.5h1M498 537.5h1M316 538.5h2M496 538.5h2M318 539.5h1M495 539.5h1M319 540.5h2M493 540.5h2M321 541.5h1M492 541.5h1M322 542.5h2M490 542.5h2M324 543.5h2M488 543.5h2M326 544.5h1M487 544.5h1M327 545.5h2M485 545.5h2M329 546.5h2M483 546.5h2M331 547.5h2M481 547.5h2M333 548.5h2M479 548.5h2M335 549.5h2M477 549.5h2M337 550.5h2M475 550.5h2M339 551.5h2M473 551.5h2M341 552.5h2M471 552.5h2M343 553.5h3M468 553.5h3M346 554.5h2M466 554.5h2M348 555.5h3M463 555.5h3M351 556.5h2M461 556.5h2M353 557.5h3M458 557.5h3M356 558.5h3M455 558.5h3M359 559.5h4M451 559.5h4M363 560.5h3M448 560.5h3M366 561.5h4M444 561.5h4M370 562.5h5M439 562.5h5M375 563.5h5M434 563.5h5M380 564.5h7M427 564.5h7M387 565.5h10M417 565.5h10M397 566.5h20M247.5 397v20M248.5 387v10M248.5 417v10M249.5 380v7M249.5 427v7M250.5 375v5M250.5 434v5M251.5 370v5M251.5 439v5M252.5 366v4M252.5 444v4M253.5 363v3M253.5 448v3M254.5 359v4M254.5 451v4M255.5 356v3M255.5 455v3M256.5 353v3M256.5 458v3M257.5 351v2M257.5 461v2M258.5 348v3M258.5 463v3M259.5 346v2M259.5 466v2M260.5 343v3M260.5 468v3M261.5 341v2M261.5 471v2M262.5 339v2M262.5 473v2M263.5 337v2M263.5 475v2M264.5 335v2M264.5 477v2M265.5 333v2M265.5 479v2M266.5 331v2M266.5 481v2M267.5 329v2M267.5 483v2M268.5 327v2M268.5 485v2M269.5 326v1M269.5 487v1M270.5 324v2M270.5 488v2M271.5 322v2M271.5 490v2M272.5 321v1M272.5 492v1M273.5 319v2M273.5 493v2M274.5 318v1M274.5 495v1M275.5 316v2M275.5 496v2M276.5 315v1M276.5 498v1M277.5 314v1M277.5 499v1M278.5 312v2M278.5 500v2M279.5 311v1M279.5 502v1M280.5 310v1M280.5 503v1M281.5 308v2M281.5 504v2M282.5 307v1M282.5 506v1M283.5 306v1M283.5 507v1M284.5 305v1M284.5 508v1M285.5 303v2M285.5 509v2M286.5 302v1M286.5 511v1M287.5 301v1M287.5 512v1M288.5 300v1M288.5 513v1M289.5 299v1M289.5 514v1M290.5 298v1M290.5 515v1M291.5 297v1M291.5 516v1M292.5 296v1M292.5 517v1M293.5 295v1M293.5 518v1M520.5 295v1M520.5 518v1M521.5 296v1M521.5 517v1M522.5 297v1M522.5 516v1M523.5 298v1M523.5 515v1M524.5 299v1M524.5 514v1M525.5 300v1M525.5 513v1M526.5 301v1M526.5 512v1M527.5 302v1M527.5 511v1M528.5 303v2M528.5 509v2M529.5 305v1M529.5 508v1M530.5 306v1M530.5 507v1M531.5 307v1M531.5 506v1M532.5 308v2M532.5 504v2M533.5 310v1M533.5 503v1M534.5 311v1M534.5 502v1M535.5 312v2M535.5 500v2M536.5 314v1M536.5 499v1M537.5 315v1M537.5 498v1M538.5 316v2M538.5 496v2M539.5 318v1M539.5 495v1M540.5 319v2M540.5 493v2M541.5 321v1M541.5 492v1M542.5 322v2M542.5 490v2M543.5 324v2M543.5 488v2M544.5 326v1M544.5 487v1M545.5 327v2M545.5 485v2M546.5 329v2M546.5 483v2M547.5 331v2M547.5 481v2M548.5 333v2M548.5 479v2M549.5 335v2M549.5 477v2M550.5 337v2M550.5 475v2M551.5 339v2M551.5 473v2M552.5 341v2M552.5 471v2M553.5 343v3M553.5 468v3M554.5 346v2M554.5 466v2M555.5 348v3M555.5 463v3M556.5 351v2M556.5 461v2M557.5 353v3M557.5 458v3M558.5 356v3M558.5 455v3M559.5 359v4M559.5 451v4M560.5 363v3M560.5 448v3M561.5 366v4M561.5 444v4M562.5 370v5M562.5 439v5M563.5 375v5M563.5 434v5M564.5 380v7M564.5 427v7M565.5 387v10M565.5 417v10M566.5 397v20M397 127.5h20M381 128.5h16M417 128.5h16M372 129.5h9M433 129.5h9M365 130.5h7M442 130.5h7M359 131.5h6M449 131.5h6M353 132.5h6M455 132.5h6M349 133.5h4M461 133.5h4M344 134.5h5M465 134.5h5M340 135.5h4M470 135.5h4M336 136.5h4M474 136.5h4M332 137.5h4M478 137.5h4M329 138.5h3M482 138.5h3M325 139.5h4M485 139.5h4M322 140.5h3M489 140.5h3M319 141.5h3M492 141.5h3M316 142.5h3M495 142.5h3M313 143.5h3M498 143.5h3M311 144.5h2M501 144.5h2M308 145.5h3M503 145.5h3M305 146.5h3M506 146.5h3M303 147.5h2M509 147.5h2M300 148.5h3M511 148.5h3M298 149.5h2M514 149.5h2M296 150.5h2M516 150.5h2M293 151.5h3M518 151.5h3M291 152.5h2M521 152.5h2M289 153.5h2M523 153.5h2M287 154.5h2M525 154.5h2M285 155.5h2M527 155.5h2M283 156.5h2M529 156.5h2M281 157.5h2M531 157.5h2M279 158.5h2M533 158.5h2M277 159.5h2M535 159.5h2M275 160.5h2M537 160.5h2M273 161.5h2M539 161.5h2M271 162.5h2M541 162.5h2M270 163.5h1M543 163.5h1M268 164.5h2M544 164.5h2M266 165.5h2M546 165.5h2M264 166.5h2M548 166.5h2M263 167.5h1M550 167.5h1M261 168.5h2M551 168.5h2M259 169.5h2M553 169.5h2M258 170.5h1M555 170.5h1M256 171.5h2M556 171.5h2M255 172.5h1M558 172.5h1M253 173.5h2M559 173.5h2M252 174.5h1M561 174.5h1M250 175.5h2M562 175.5h2M249 176.5h1M564 176.5h1M247 177.5h2M565 177.5h2M246 178.5h1M567 178.5h1M244 179.5h2M568 179.5h2M243 180.5h1M570 180.5h1M242 181.5h1M571 181.5h1M240 182.5h2M572 182.5h2M239 183.5h1M574 183.5h1M238 184.5h1M575 184.5h1M236 185.5h2M576 185.5h2M235 186.5h1M578 186.5h1M234 187.5h1M579 187.5h1M233 188.5h1M580 188.5h1M231 189.5h2M581 189.5h2M230 190.5h1M583 190.5h1M229 191.5h1M584 191.5h1M228 192.5h1M585 192.5h1M227 193.5h1M586 193.5h1M225 194.5h2M587 194.5h2M224 195.5h1M589 195.5h1M223 196.5h1M590 196.5h1M222 197.5h1M591 197.5h1M221 198.5h1M592 198.5h1M220 199.5h1M593 199.5h1M219 200.5h1M594 200.5h1M217 201.5h2M595 201.5h2M216 202.5h1M597 202.5h1M215 203.5h1M598 203.5h1M214 204.5h1M599 204.5h1M213 205.5h1M600 205.5h1M212 206.5h1M601 206.5h1M211 207.5h1M602 207.5h1M210 208.5h1M603 208.5h1M209 209.5h1M604 209.5h1M209 604.5h1M604 604.5h1M210 605.5h1M603 605.5h1M211 606.5h1M602 606.5h1M212 607.5h1M601 607.5h1M213 608.5h1M600 608.5h1M214 609.5h1M599 609.5h1M215 610.5h1M598 610.5h1M216 611.5h1M597 611.5h1M217 612.5h2M595 612.5h2M219 613.5h1M594 613.5h1M220 614.5h1M593 614.5h1M221 615.5h1M592 615.5h1M222 616.5h1M591 616.5h1M223 617.5h1M590 617.5h1M224 618.5h1M589 618.5h1M225 619.5h2M587 619.5h2M227 620.5h1M586 620.5h1M228 621.5h1M585 621.5h1M229 622.5h1M584 622.5h1M230 623.5h1M583 623.5h1M231 624.5h2M581 624.5h2M233 625.5h1M580 625.5h1M234 626.5h1M579 626.5h1M235 627.5h1M578 627.5h1M236 628.5h2M576 628.5h2M238 629.5h1M575 629.5h1M239 630.5h1M574 630.5h1M240 631.5h2M572 631.5h2M242 632.5h1M571 632.5h1M243 633.5h1M570 633.5h1M244 634.5h2M568 634.5h2M246 635.5h1M567 635.5h1M247 636.5h2M565 636.5h2M249 637.5h1M564 637.5h1M250 638.5h2M562 638.5h2M252 639.5h1M561 639.5h1M253 640.5h2M559 640.5h2M255 641.5h1M558 641.5h1M256 642.5h2M556 642.5h2M258 643.5h1M555 643.5h1M259 644.5h2M553 644.5h2M261 645.5h2M551 645.5h2M263 646.5h1M550 646.5h1M264 647.5h2M548 647.5h2M266 648.5h2M546 648.5h2M268 649.5h2M544 649.5h2M270 650.5h1M543 650.5h1M271 651.5h2M541 651.5h2M273 652.5h2M539 652.5h2M275 653.5h2M537 653.5h2M277 654.5h2M535 654.5h2M279 655.5h2M533 655.5h2M281 656.5h2M531 656.5h2M283 657.5h2M529 657.5h2M285 658.5h2M527 658.5h2M287 659.5h2M525 659.5h2M289 660.5h2M523 660.5h2M291 661.5h2M521 661.5h2M293 662.5h3M518 662.5h3M296 663.5h2M516 663.5h2M298 664.5h2M514 664.5h2M300 665.5h3M511 665.5h3M303 666.5h2M509 666.5h2M305 667.5h3M506 667.5h3M308 668.5h3M503 668.5h3M311 669.5h2M501 669.5h2M313 670.5h3M498 670.5h3M316 671.5h3M495 671.5h3M319 672.5h3M492 672.5h3M322 673.5h3M489 673.5h3M325 674.5h4M485 674.5h4M329 675.5h3M482 675.5h3M332 676.5h4M478 676.5h4M336 677.5h4M474 677.5h4M340 678.5h4M470 678.5h4M344 679.5h5M465 679.5h5M349 680.5h4M461 680.5h4M353 681.5h6M455 681.5h6M359 682.5h6M449 682.5h6M365 683.5h7M442 683.5h7M372 684.5h9M433 684.5h9M381 685.5h16M417 685.5h16M397 686.5h20M127.5 397v20M128.5 381v16M128.5 417v16M129.5 372v9M129.5 433v9M130.5 365v7M130.5 442v7M131.5 359v6M131.5 449v6M132.5 353v6M132.5 455v6M133.5 349v4M133.5 461v4M134.5 344v5M134.5 465v5M135.5 340v4M135.5 470v4M136.5 336v4M136.5 474v4M137.5 332v4M137.5 478v4M138.5 329v3M138.5 482v3M139.5 325v4M139.5 485v4M140.5 322v3M140.5 489v3M141.5 319v3M141.5 492v3M142.5 316v3M142.5 495v3M143.5 313v3M143.5 498v3M144.5 311v2M144.5 501v2M145.5 308v3M145.5 503v3M146.5 305v3M146.5 506v3M147.5 303v2M147.5 509v2M148.5 300v3M148.5 511v3M149.5 298v2M149.5 514v2M150.5 296v2M150.5 516v2M151.5 293v3M151.5 518v3M152.5 291v2M152.5 521v2M153.5 289v2M153.5 523v2M154.5 287v2M154.5 525v2M155.5 285v2M155.5 527v2M156.5 283v2M156.5 529v2M157.5 281v2M157.5 531v2M158.5 279v2M158.5 533v2M159.5 277v2M159.5 535v2M160.5 275v2M160.5 537v2M161.5 273v2M161.5 539v2M162.5 271v2M162.5 541v2M163.5 270v1M163.5 543v1M164.5 268v2M164.5 544v2M165.5 266v2M165.5 546v2M166.5 264v2M166.5 548v2M167.5 263v1M167.5 550v1M168.5 261v2M168.5 551v2M169.5 259v2M169.5 553v2M170.5 258v1M170.5 555v1M171.5 256v2M171.5 556v2M172.5 255v1M172.5 558v1M173.5 253v2M173.5 559v2M174.5 252v1M174.5 561v1M175.5 250v2M175.5 562v2M176.5 249v1M176.5 564v1M177.5 247v2M177.5 565v2M178.5 246v1M178.5 567v1M179.5 244v2M179.5 568v2M180.5 243v1M180.5 570v1M181.5 242v1M181.5 571v1M182.5 240v2M182.5 572v2M183.5 239v1M183.5 574v1M184.5 238v1M184.5 575v1M185.5 236v2M185.5 576v2M186.5 235v1M186.5 578v1M187.5 234v1M187.5 579v1M188.5 233v1M188.5 580v1M189.5 231v2M189.5 581v2M190.5 230v1M190.5 583v1M191.5 229v1M191.5 584v1M192.5 228v1M192.5 585v1M193.5 227v1M193.5 586v1M194.5 225v2M194.5 587v2M195.5 224v1M195.5 589v1M196.5 223v1M196.5 590v1M197.5 222v1M197.5 591v1M198.5 221v1M198.5 592v1M199.5 220v1M199.5 593v1M200.5 219v1M200.5 594v1M201.5 217v2M201.5 595v2M202.5 216v1M202.5 597v1M203.5 215v1M203.5 598v1M204.5 214v1M204.5 599v1M205.5 213v1M205.5 600v1M206.5 212v1M206.5 601v1M207.5 211v1M207.5 602v1M208.5 210v1M208.5 603v1M605.5 210v1M605.5 603v1M606.5 211v1M606.5 602v1M607.5 212v1M607.5 601v1M608.5 213v1M608.5 600v1M609.5 214v1M609.5 599v1M610.5 215v1M610.5 598v1M611.5 216v1M611.5 597v1M612.5 217v2M612.5 595v2M613.5 219v1M613.5 594v1M614.5 220v1M614.5 593v1M615.5 221v1M615.5 592v1M616.5 222v1M616.5 591v1M617.5 223v1M617.5 590v1M618.5 224v1M618.5 589v1M619.5 225v2M619.5 587v2M620.5 227v1M620.5 586v1M621.5 228v1M621.5 585v1M622.5 229v1M622.5 584v1M623.5 230v1M623.5 583v1M624.5 231v2M624.5 581v2M625.5 233v1M625.5 580v1M626.5 234v1M626.5 579v1M627.5 235v1M627.5 578v1M628.5 236v2M628.5 576v2M629.5 238v1M629.5 575v1M630.5 239v1M630.5 574v1M631.5 240v2M631.5 572v2M632.5 242v1M632.5 571v1M633.5 243v1M633.5 570v1M634.5 244v2M634.5 568v2M635.5 246v1M635.5 567v1M636.5 247v2M636.5 565v2M637.5 249v1M637.5 564v1M638.5 250v2M638.5 562v2M639.5 252v1M639.5 561v1M640.5 253v2M640.5 559v2M641.5 255v1M641.5 558v1M642.5 256v2M642.5 556v2M643.5 258v1M643.5 555v1M644.5 259v2M644.5 553v2M645.5 261v2M645.5 551v2M646.5 263v1M646.5 550v1M647.5 264v2M647.5 548v2M648.5 266v2M648.5 546v2M649.5 268v2M649.5 544v2M650.5 270v1M650.5 543v1M651.5 271v2M651.5 541v2M652.5 273v2M652.5 539v2M653.5 275v2M653.5 537v2M654.5 277v2M654.5 535v2M655.5 279v2M655.5 533v2M656.5 281v2M656.5 531v2M657.5 283v2M657.5 529v2M658.5 285v2M658.5 527v2M659.5 287v2M659.5 525v2M660.5 289v2M660.5 523v2M661.5 291v2M661.5 521v2M662.5 293v3M662.5 518v3M663.5 296v2M663.5 516v2M664.5 298v2M664.5 514v2M665.5 300v3M665.5 511v3M666.5 303v2M666.5 509v2M667.5 305v3M667.5 506v3M668.5 308v3M668.5 503v3M669.5 311v2M669.5 501v2M670.5 313v3M670.5 498v3M671.5 316v3M671.5 495v3M672.5 319v3M672.5 492v3M673.5 322v3M673.5 489v3M674.5 325v4M674.5 485v4M675.5 329v3M675.5 482v3M676.5 332v4M676.5 478v4M677.5 336v4M677.5 474v4M678.5 340v4M678.5 470v4M679.5 344v5M679.5 465v5M680.5 349v4M680.5 461v4M681.5 353v6M681.5 455v6M682.5 359v6M682.5 449v6M683.5 365v7M683.5 442v7M684.5 372v9M684.5 433v9M685.5 381v16M685.5 417v16M686.5 397v20M379 8.5h56M367 9.5h12M435 9.5h12M358 10.5h9M447 10.5h9M351 11.5h7M456 11.5h7M344 12.5h7M463 12.5h7M338 13.5h6M470 13.5h6M333 14.5h5M476 14.5h5M328 15.5h5M481 15.5h5M323 16.5h5M486 16.5h5M318 17.5h5M491 17.5h5M314 18.5h4M496 18.5h4M310 19.5h4M500 19.5h4M306 20.5h4M504 20.5h4M302 21.5h4M508 21.5h4M299 22.5h3M512 22.5h3M295 23.5h4M515 23.5h4M292 24.5h3M519 24.5h3M289 25.5h3M522 25.5h3M285 26.5h4M525 26.5h4M282 27.5h3M529 27.5h3M279 28.5h3M532 28.5h3M276 29.5h3M535 29.5h3M273 30.5h3M538 30.5h3M271 31.5h2M541 31.5h2M268 32.5h3M543 32.5h3M265 33.5h3M546 33.5h3M263 34.5h2M549 34.5h2M260 35.5h3M551 35.5h3M258 36.5h2M554 36.5h2M255 37.5h3M556 37.5h3M253 38.5h2M559 38.5h2M250 39.5h3M561 39.5h3M248 40.5h2M564 40.5h2M246 41.5h2M566 41.5h2M244 42.5h2M568 42.5h2M241 43.5h3M570 43.5h3M239 44.5h2M573 44.5h2M237 45.5h2M575 45.5h2M235 46.5h2M577 46.5h2M233 47.5h2M579 47.5h2M231 48.5h2M581 48.5h2M229 49.5h2M583 49.5h2M227 50.5h2M585 50.5h2M225 51.5h2M587 51.5h2M223 52.5h2M589 52.5h2M221 53.5h2M591 53.5h2M219 54.5h2M593 54.5h2M217 55.5h2M595 55.5h2M215 56.5h2M597 56.5h2M214 57.5h1M599 57.5h1M212 58.5h2M600 58.5h2M210 59.5h2M602 59.5h2M208 60.5h2M604 60.5h2M207 61.5h1M606 61.5h1M205 62.5h2M607 62.5h2M203 63.5h2M609 63.5h2M201 64.5h2M611 64.5h2M200 65.5h1M613 65.5h1M198 66.5h2M614 66.5h2M197 67.5h1M616 67.5h1M195 68.5h2M617 68.5h2M193 69.5h2M619 69.5h2M192 70.5h1M621 70.5h1M190 71.5h2M622 71.5h2M189 72.5h1M624 72.5h1M187 73.5h2M625 73.5h2M186 74.5h1M627 74.5h1M184 75.5h2M628 75.5h2M183 76.5h1M630 76.5h1M181 77.5h2M631 77.5h2M180 78.5h1M633 78.5h1M178 79.5h2M634 79.5h2M177 80.5h1M636 80.5h1M176 81.5h1M637 81.5h1M174 82.5h2M638 82.5h2M173 83.5h1M640 83.5h1M171 84.5h2M641 84.5h2M170 85.5h1M643 85.5h1M169 86.5h1M644 86.5h1M167 87.5h2M645 87.5h2M166 88.5h1M647 88.5h1M165 89.5h1M648 89.5h1M163 90.5h2M649 90.5h2M162 91.5h1M651 91.5h1M161 92.5h1M652 92.5h1M160 93.5h1M653 93.5h1M158 94.5h2M654 94.5h2M157 95.5h1M656 95.5h1M156 96.5h1M657 96.5h1M155 97.5h1M658 97.5h1M153 98.5h2M659 98.5h2M152 99.5h1M661 99.5h1M151 100.5h1M662 100.5h1M150 101.5h1M663 101.5h1M149 102.5h1M664 102.5h1M147 103.5h2M665 103.5h2M146 104.5h1M667 104.5h1M145 105.5h1M668 105.5h1M144 106.5h1M669 106.5h1M143 107.5h1M670 107.5h1M142 108.5h1M671 108.5h1M141 109.5h1M672 109.5h1M139 110.5h2M673 110.5h2M138 111.5h1M675 111.5h1M137 112.5h1M676 112.5h1M136 113.5h1M677 113.5h1M135 114.5h1M678 114.5h1M134 115.5h1M679 115.5h1M133 116.5h1M680 116.5h1M132 117.5h1M681 117.5h1M131 118.5h1M682 118.5h1M130 119.5h1M683 119.5h1M129 120.5h1M684 120.5h1M128 121.5h1M685 121.5h1M127 122.5h1M686 122.5h1M126 123.5h1M687 123.5h1M125 124.5h1M688 124.5h1M124 125.5h1M689 125.5h1M124 688.5h1M689 688.5h1M125 689.5h1M688 689.5h1M126 690.5h1M687 690.5h1M127 691.5h1M686 691.5h1M128 692.5h1M685 692.5h1M129 693.5h1M684 693.5h1M130 694.5h1M683 694.5h1M131 695.5h1M682 695.5h1M132 696.5h1M681 696.5h1M133 697.5h1M680 697.5h1M134 698.5h1M679 698.5h1M135 699.5h1M678 699.5h1M136 700.5h1M677 700.5h1M137 701.5h1M676 701.5h1M138 702.5h1M675 702.5h1M139 703.5h2M673 703.5h2M141 704.5h1M672 704.5h1M142 705.5h1M671 705.5h1M143 706.5h1M670 706.5h1M144 707.5h1M669 707.5h1M145 708.5h1M668 708.5h1M146 709.5h1M667 709.5h1M147 710.5h2M665 710.5h2M149 711.5h1M664 711.5h1M150 712.5h1M663 712.5h1M151 713.5h1M662 713.5h1M152 714.5h1M661 714.5h1M153 715.5h2M659 715.5h2M155 716.5h1M658 716.5h1M156 717.5h1M657 717.5h1M157 718.5h1M656 718.5h1M158 719.5h2M654 719.5h2M160 720.5h1M653 720.5h1M161 721.5h1M652 721.5h1M162 722.5h1M651 722.5h1M163 723.5h2M649 723.5h2M165 724.5h1M648 724.5h1M166 725.5h1M647 725.5h1M167 726.5h2M645 726.5h2M169 727.5h1M644 727.5h1M170 728.5h1M643 728.5h1M171 729.5h2M641 729.5h2M173 730.5h1M640 730.5h1M174 731.5h2M638 731.5h2M176 732.5h1M637 732.5h1M177 733.5h1M636 733.5h1M178 734.5h2M634 734.5h2M180 735.5h1M633 735.5h1M181 736.5h2M631 736.5h2M183 737.5h1M630 737.5h1M184 738.5h2M628 738.5h2M186 739.5h1M627 739.5h1M187 740.5h2M625 740.5h2M189 741.5h1M624 741.5h1M190 742.5h2M622 742.5h2M192 743.5h1M621 743.5h1M193 744.5h2M619 744.5h2M195 745.5h2M617 745.5h2M197 746.5h1M616 746.5h1M198 747.5h2M614 747.5h2M200 748.5h1M613 748.5h1M201 749.5h2M611 749.5h2M203 750.5h2M609 750.5h2M205 751.5h2M607 751.5h2M207 752.5h1M606 752.5h1M208 753.5h2M604 753.5h2M210 754.5h2M602 754.5h2M212 755.5h2M600 755.5h2M214 756.5h1M599 756.5h1M215 757.5h2M597 757.5h2M217 758.5h2M595 758.5h2M219 759.5h2M593 759.5h2M221 760.5h2M591 760.5h2M223 761.5h2M589 761.5h2M225 762.5h2M587 762.5h2M227 763.5h2M585 763.5h2M229 764.5h2M583 764.5h2M231 765.5h2M581 765.5h2M233 766.5h2M579 766.5h2M235 767.5h2M577 767.5h2M237 768.5h2M575 768.5h2M239 769.5h2M573 769.5h2M241 770.5h3M570 770.5h3M244 771.5h2M568 771.5h2M246 772.5h2M566 772.5h2M248 773.5h2M564 773.5h2M250 774.5h3M561 774.5h3M253 775.5h2M559 775.5h2M255 776.5h3M556 776.5h3M258 777.5h2M554 777.5h2M260 778.5h3M551 778.5h3M263 779.5h2M549 779.5h2M265 780.5h3M546 780.5h3M268 781.5h3M543 781.5h3M271 782.5h2M541 782.5h2M273 783.5h3M538 783.5h3M276 784.5h3M535 784.5h3M279 785.5h3M532 785.5h3M282 786.5h3M529 786.5h3M285 787.5h4M525 787.5h4M289 788.5h3M522 788.5h3M292 789.5h3M519 789.5h3M295 790.5h4M515 790.5h4M299 791.5h3M512 791.5h3M302 792.5h4M508 792.5h4M306 793.5h4M504 793.5h4M310 794.5h4M500 794.5h4M314 795.5h4M496 795.5h4M318 796.5h5M491 796.5h5M323 797.5h5M486 797.5h5M328 798.5h5M481 798.5h5M333 799.5h5M476 799.5h5M338 800.5h6M470 800.5h6M344 801.5h7M463 801.5h7M351 802.5h7M456 802.5h7M358 803.5h9M447 803.5h9M367 804.5h12M435 804.5h12M379 805.5h56M8.5 379v56M9.5 367v12M9.5 435v12M10.5 358v9M10.5 447v9M11.5 351v7M11.5 456v7M12.5 344v7M12.5 463v7M13.5 338v6M13.5 470v6M14.5 333v5M14.5 476v5M15.5 328v5M15.5 481v5M16.5 323v5M16.5 486v5M17.5 318v5M17.5 491v5M18.5 314v4M18.5 496v4M19.5 310v4M19.5 500v4M20.5 306v4M20.5 504v4M21.5 302v4M21.5 508v4M22.5 299v3M22.5 512v3M23.5 295v4M23.5 515v4M24.5 292v3M24.5 519v3M25.5 289v3M25.5 522v3M26.5 285v4M26.5 525v4M27.5 282v3M27.5 529v3M28.5 279v3M28.5 532v3M29.5 276v3M29.5 535v3M30.5 273v3M30.5 538v3M31.5 271v2M31.5 541v2M32.5 268v3M32.5 543v3M33.5 265v3M33.5 546v3M34.5 263v2M34.5 549v2M35.5 260v3M35.5 551v3M36.5 258v2M36.5 554v2M37.5 255v3M37.5 556v3M38.5 253v2M38.5 559v2M39.5 250v3M39.5 561v3M40.5 248v2M40.5 564v2M41.5 246v2M41.5 566v2M42.5 244v2M42.5 568v2M43.5 241v3M43.5 570v3M44.5 239v2M44.5 573v2M45.5 237v2M45.5 575v2M46.5 235v2M46.5 577v2M47.5 233v2M47.5 579v2M48.5 231v2M48.5 581v2M49.5 229v2M49.5 583v2M50.5 227v2M50.5 585v2M51.5 225v2M51.5 587v2M52.5 223v2M52.5 589v2M53.5 221v2M53.5 591v2M54.5 219v2M54.5 593v2M55.5 217v2M55.5 595v2M56.5 215v2M56.5 597v2M57.5 214v1M57.5 599v1M58.5 212v2M58.5 600v2M59.5 210v2M59.5 602v2M60.5 208v2M60.5 604v2M61.5 207v1M61.5 606v1M62.5 205v2M62.5 607v2M63.5 203v2M63.5 609v2M64.5 201v2M64.5 611v2M65.5 200v1M65.5 613v1M66.5 198v2M66.5 614v2M67.5 197v1M67.5 616v1M68.5 195v2M68.5 617v2M69.5 193v2M69.5 619v2M70.5 192v1M70.5 621v1M71.5 190v2M71.5 622v2M72.5 189v1M72.5 624v1M73.5 187v2M73.5 625v2M74.5 186v1M74.5 627v1M75.5 184v2M75.5 628v2M76.5 183v1M76.5 630v1M77.5 181v2M77.5 631v2M78.5 180v1M78.5 633v1M79.5 178v2M79.5 634v2M80.5 177v1M80.5 636v1M81.5 176v1M81.5 637v1M82.5 174v2M82.5 638v2M83.5 173v1M83.5 640v1M84.5 171v2M84.5 641v2M85.5 170v1M85.5 643v1M86.5 169v1M86.5 644v1M87.5 167v2M87.5 645v2M88.5 166v1M88.5 647v1M89.5 165v1M89.5 648v1M90.5 163v2M90.5 649v2M91.5 162v1M91.5 651v1M92.5 161v1M92.5 652v1M93.5 160v1M93.5 653v1M94.5 158v2M94.5 654v2M95.5 157v1M95.5 656v1M96.5 156v1M96.5 657v1M97.5 155v1M97.5 658v1M98.5 153v2M98.5 659v2M99.5 152v1M99.5 661v1M100.5 151v1M100.5 662v1M101.5 150v1M101.5 663v1M102.5 149v1M102.5 664v1M103.5 147v2M103.5 665v2M104.5 146v1M104.5 667v1M105.5 145v1M105.5 668v1M106.5 144v1M106.5 669v1M107.5 143v1M107.5 670v1M108.5 142v1M108.5 671v1M109.5 141v1M109.5 672v1M110.5 139v2M110.5 673v2M111.5 138v1M111.5 675v1M112.5 137v1M112.5 676v1M113.5 136v1M113.5 677v1M114.5 135v1M114.5 678v1M115.5 134v1M115.5 679v1M116.5 133v1M116.5 680v1M117.5 132v1M117.5 681v1M118.5 131v1M118.5 682v1M119.5 130v1M119.5 683v1M120.5 129v1M120.5 684v1M121.5 128v1M121.5 685v1M122.5 127v1M122.5 686v1M123.5 126v1M123.5 687v1M690.5 126v1M690.5 687v1M691.5 127v1M691.5 686v1M692.5 128v1M692.5 685v1M693.5 129v1M693.5 684v1M694.5 130v1M694.5 683v1M695.5 131v1M695.5 682v1M696.5 132v1M696.5 681v1M697.5 133v1M697.5 680v1M698.5 134v1M698.5 679v1M699.5 135v1M699.5 678v1M700.5 136v1M700.5 677v1M701.5 137v1M701.5 676v1M702.5 138v1M702.5 675v1M703.5 139v2M703.5 673v2M704.5 141v1M704.5 672v1M705.5 142v1M705.5 671v1M706.5 143v1M706.5 670v1M707.5 144v1M707.5 669v1M708.5 145v1M708.5 668v1M709.5 146v1M709.5 667v1M710.5 147v2M710.5 665v2M711.5 149v1M711.5 664v1M712.5 150v1M712.5 663v1M713.5 151v1M713.5 662v1M714.5 152v1M714.5 661v1M715.5 153v2M715.5 659v2M716.5 155v1M716.5 658v1M717.5 156v1M717.5 657v1M718.5 157v1M718.5 656v1M719.5 158v2M719.5 654v2M720.5 160v1M720.5 653v1M721.5 161v1M721.5 652v1M722.5 162v1M722.5 651v1M723.5 163v2M723.5 649v2M724.5 165v1M724.5 648v1M725.5 166v1M725.5 647v1M726.5 167v2M726.5 645v2M727.5 169v1M727.5 644v1M728.5 170v1M728.5 643v1M729.5 171v2M729.5 641v2M730.5 173v1M730.5 640v1M731.5 174v2M731.5 638v2M732.5 176v1M732.5 637v1M733.5 177v1M733.5 636v1M734.5 178v2M734.5 634v2M735.5 180v1M735.5 633v1M736.5 181v2M736.5 631v2M737.5 183v1M737.5 630v1M738.5 184v2M738.5 628v2M739.5 186v1M739.5 627v1M740.5 187v2M740.5 625v2M741.5 189v1M741.5 624v1M742.5 190v2M742.5 622v2M743.5 192v1M743.5 621v1M744.5 193v2M744.5 619v2M745.5 195v2M745.5 617v2M746.5 197v1M746.5 616v1M747.5 198v2M747.5 614v2M748.5 200v1M748.5 613v1M749.5 201v2M749.5 611v2M750.5 203v2M750.5 609v2M751.5 205v2M751.5 607v2M752.5 207v1M752.5 606v1M753.5 208v2M753.5 604v2M754.5 210v2M754.5 602v2M755.5 212v2M755.5 600v2M756.5 214v1M756.5 599v1M757.5 215v2M757.5 597v2M758.5 217v2M758.5 595v2M759.5 219v2M759.5 593v2M760.5 221v2M760.5 591v2M761.5 223v2M761.5 589v2M762.5 225v2M762.5 587v2M763.5 227v2M763.5 585v2M764.5 229v2M764.5 583v2M765.5 231v2M765.5 581v2M766.5 233v2M766.5 579v2M767.5 235v2M767.5 577v2M768.5 237v2M768.5 575v2M769.5 239v2M769.5 573v2M770.5 241v3M770.5 570v3M771.5 244v2M771.5 568v2M772.5 246v2M772.5 566v2M773.5 248v2M773.5 564v2M774.5 250v3M774.5 561v3M775.5 253v2M775.5 559v2M776.5 255v3M776.5 556v3M777.5 258v2M777.5 554v2M778.5 260v3M778.5 551v3M779.5 263v2M779.5 549v2M780.5 265v3M780.5 546v3M781.5 268v3M781.5 543v3M782.5 271v2M782.5 541v2M783.5 273v3M783.5 538v3M784.5 276v3M784.5 535v3M785.5 279v3M785.5 532v3M786.5 282v3M786.5 529v3M787.5 285v4M787.5 525v4M788.5 289v3M788.5 522v3M789.5 292v3M789.5 519v3M790.5 295v4M790.5 515v4M791.5 299v3M791.5 512v3M792.5 302v4M792.5 508v4M793.5 306v4M793.5 504v4M794.5 310v4M794.5 500v4M795.5 314v4M795.5 496v4M796.5 318v5M796.5 491v5M797.5 323v5M797.5 486v5M798.5 328v5M798.5 481v5M799.5 333v5M799.5 476v5M800.5 338v6M800.5 470v6M801.5 344v7M801.5 463v7M802.5 351v7M802.5 456v7M803.5 358v9M803.5 447v9M804.5 367v12M804.5 435v12M805.5 379v56M76 6.5h1M737 6.5h1M75 7.5h1M738 7.5h1M73 8.5h2M739 8.5h2M72 9.5h1M741 9.5h1M71 10.5h1M742 10.5h1M70 11.5h1M743 11.5h1M69 12.5h1M744 12.5h1M68 13.5h1M745 13.5h1M66 14.5h2M746 14.5h2M65 15.5h1M748 15.5h1M64 16.5h1M749 16.5h1M63 17.5h1M750 17.5h1M62 18.5h1M751 18.5h1M61 19.5h1M752 19.5h1M60 20.5h1M753 20.5h1M59 21.5h1M754 21.5h1M57 22.5h2M755 22.5h2M56 23.5h1M757 23.5h1M55 24.5h1M758 24.5h1M54 25.5h1M759 25.5h1M53 26.5h1M760 26.5h1M52 27.5h1M761 27.5h1M51 28.5h1M762 28.5h1M50 29.5h1M763 29.5h1M49 30.5h1M764 30.5h1M48 31.5h1M765 31.5h1M47 32.5h1M766 32.5h1M46 33.5h1M767 33.5h1M45 34.5h1M768 34.5h1M44 35.5h1M769 35.5h1M43 36.5h1M770 36.5h1M42 37.5h1M771 37.5h1M41 38.5h1M772 38.5h1M40 39.5h1M773 39.5h1M39 40.5h1M774 40.5h1M39 773.5h1M774 773.5h1M40 774.5h1M773 774.5h1M41 775.5h1M772 775.5h1M42 776.5h1M771 776.5h1M43 777.5h1M770 777.5h1M44 778.5h1M769 778.5h1M45 779.5h1M768 779.5h1M46 780.5h1M767 780.5h1M47 781.5h1M766 781.5h1M48 782.5h1M765 782.5h1M49 783.5h1M764 783.5h1M50 784.5h1M763 784.5h1M51 785.5h1M762 785.5h1M52 786.5h1M761 786.5h1M53 787.5h1M760 787.5h1M54 788.5h1M759 788.5h1M55 789.5h1M758 789.5h1M56 790.5h1M757 790.5h1M57 791.5h2M755 791.5h2M59 792.5h1M754 792.5h1M60 793.5h1M753 793.5h1M61 794.5h1M752 794.5h1M62 795.5h1M751 795.5h1M63 796.5h1M750 796.5h1M64 797.5h1M749 797.5h1M65 798.5h1M748 798.5h1M66 799.5h2M746 799.5h2M68 800.5h1M745 800.5h1M69 801.5h1M744 801.5h1M70 802.5h1M743 802.5h1M71 803.5h1M742 803.5h1M72 804.5h1M741 804.5h1M73 805.5h2M739 805.5h2M6.5 76v1M6.5 737v1M7.5 75v1M7.5 738v1M8.5 73v2M8.5 739v2M9.5 72v1M9.5 741v1M10.5 71v1M10.5 742v1M11.5 70v1M11.5 743v1M12.5 69v1M12.5 744v1M13.5 68v1M13.5 745v1M14.5 66v2M14.5 746v2M15.5 65v1M15.5 748v1M16.5 64v1M16.5 749v1M17.5 63v1M17.5 750v1M18.5 62v1M18.5 751v1M19.5 61v1M19.5 752v1M20.5 60v1M20.5 753v1M21.5 59v1M21.5 754v1M22.5 57v2M22.5 755v2M23.5 56v1M23.5 757v1M24.5 55v1M24.5 758v1M25.5 54v1M25.5 759v1M26.5 53v1M26.5 760v1M27.5 52v1M27.5 761v1M28.5 51v1M28.5 762v1M29.5 50v1M29.5 763v1M30.5 49v1M30.5 764v1M31.5 48v1M31.5 765v1M32.5 47v1M32.5 766v1M33.5 46v1M33.5 767v1M34.5 45v1M34.5 768v1M35.5 44v1M35.5 769v1M36.5 43v1M36.5 770v1M37.5 42v1M37.5 771v1M38.5 41v1M38.5 772v1M775.5 41v1M775.5 772v1M776.5 42v1M776.5 771v1M777.5 43v1M777.5 770v1M778.5 44v1M778.5 769v1M779.5 45v1M779.5 768v1M780.5 46v1M780.5 767v1M781.5 47v1M781.5 766v1M782.5 48v1M782.5 765v1M783.5 49v1M783.5 764v1M784.5 50v1M784.5 763v1M785.5 51v1M785.5 762v1M786.5 52v1M786.5 761v1M787.5 53v1M787.5 760v1M788.5 54v1M788.5 759v1M789.5 55v1M789.5 758v1M790.5 56v1M790.5 757v1M791.5 57v2M791.5 755v2M792.5 59v1M792.5 754v1M793.5 60v1M793.5 753v1M794.5 61v1M794.5 752v1M795.5 62v1M795.5 751v1M796.5 63v1M796.5 750v1M797.5 64v1M797.5 749v1M798.5 65v1M798.5 748v1M799.5 66v2M799.5 746v2M800.5 68v1M800.5 745v1M801.5 69v1M801.5 744v1M802.5 70v1M802.5 743v1M803.5 71v1M803.5 742v1M804.5 72v1M804.5 741v1M805.5 73v2M805.5 739v2" fill="none" stroke="#cbcbcb" stroke-width="1" shape-rendering="crispEdges"/>
<path d="M497,105.5h7" stroke="#e08000" stroke-width="1" shape-rendering="crispEdges"/>
<path d="M744.5,788v4" stroke="#e08000" stroke-width="1" shape-rendering="crispEdges"/>
<g font-family="'DejaVu Sans','Liberation Sans',sans-serif" font-size="10.1" fill="#ffff98" text-anchor="middle" letter-spacing="0.4">
<rect x="393.5" y="242.7" width="25" height="9" fill="#5d4f4a"/>
<text x="406" y="251.1">125</text>
<rect x="393.5" y="122.82" width="25" height="9" fill="#5d4f4a"/>
<text x="406" y="131.22">219</text>
<rect x="393.5" y="3" width="25" height="9" fill="#5d4f4a"/>
<text x="406" y="11.4">313</text>
<text x="406" y="370.8">31</text>
</g>
<path d="M400 367.5h14M396 368.5h4M414 368.5h4M393 369.5h3M418 369.5h3M391 370.5h2M421 370.5h2M388 371.5h3M423 371.5h3M387 372.5h1M426 372.5h1M385 373.5h2M427 373.5h2M384 374.5h1M429 374.5h1M382 375.5h2M430 375.5h2M381 376.5h1M432 376.5h1M380 377.5h1M433 377.5h1M379 378.5h1M434 378.5h1M378 379.5h1M435 379.5h1M378 434.5h1M435 434.5h1M379 435.5h1M434 435.5h1M380 436.5h1M433 436.5h1M381 437.5h1M432 437.5h1M382 438.5h2M430 438.5h2M384 439.5h1M429 439.5h1M385 440.5h2M427 440.5h2M387 441.5h1M426 441.5h1M388 442.5h3M423 442.5h3M391 443.5h2M421 443.5h2M393 444.5h3M418 444.5h3M396 445.5h4M414 445.5h4M400 446.5h14M367.5 400v14M368.5 396v4M368.5 414v4M369.5 393v3M369.5 418v3M370.5 391v2M370.5 421v2M371.5 388v3M371.5 423v3M372.5 387v1M372.5 426v1M373.5 385v2M373.5 427v2M374.5 384v1M374.5 429v1M375.5 382v2M375.5 430v2M376.5 381v1M376.5 432v1M377.5 380v1M377.5 433v1M436.5 380v1M436.5 433v1M437.5 381v1M437.5 432v1M438.5 382v2M438.5 430v2M439.5 384v1M439.5 429v1M440.5 385v2M440.5 427v2M441.5 387v1M441.5 426v1M442.5 388v3M442.5 423v3M443.5 391v2M443.5 421v2M444.5 393v3M444.5 418v3M445.5 396v4M445.5 414v4M446.5 400v14" fill="none" stroke="#f80000" stroke-width="1" shape-rendering="crispEdges"/>
<path d="M393,369.5h1M420,369.5h1" stroke="#e8e8e8" stroke-width="1" shape-rendering="crispEdges"/>
</svg>
</div>
<div style="position:absolute;left:685px;top:792px;width:121px;height:14px;background:#000"></div>
<span class="t" style="left:688px;top:790.5px;font-size:9.25px;color:#fff;font-family:'DejaVu Sans Condensed','DejaVu Sans','Liberation Sans',sans-serif">©2005 Astrogenic Systems</span>
<div style="position:absolute;left:9px;top:759px;width:242px;height:42px;background:#000;border:1px solid #909090"></div>
<span class="t" style="left:13.2px;top:759.85px;font-size:9.1px;color:#fff;font-family:'DejaVu Sans Condensed','DejaVu Sans','Liberation Sans',sans-serif;">Symbols</span>
<span class="t" style="left:53px;top:759.85px;font-size:9.1px;color:#fff;font-family:'DejaVu Sans Condensed','DejaVu Sans','Liberation Sans',sans-serif;letter-spacing:0.6px;">-CG</span>
<span class="t" style="left:78px;top:759.85px;font-size:9.1px;color:#fff;font-family:'DejaVu Sans Condensed','DejaVu Sans','Liberation Sans',sans-serif;letter-spacing:0.6px;">-IC</span>
<span class="t" style="left:99px;top:759.85px;font-size:9.1px;color:#fff;font-family:'DejaVu Sans Condensed','DejaVu Sans','Liberation Sans',sans-serif;letter-spacing:0.6px;">+CG</span>
<span class="t" style="left:124px;top:759.85px;font-size:9.1px;color:#fff;font-family:'DejaVu Sans Condensed','DejaVu Sans','Liberation Sans',sans-serif;letter-spacing:0.6px;">+IC</span>
<span class="t" style="left:153px;top:759.85px;font-size:9.1px;color:#fff;font-family:'DejaVu Sans Condensed','DejaVu Sans','Liberation Sans',sans-serif;">Strike age color codes</span>
<span class="t" style="left:13.2px;top:773.25px;font-size:9.1px;color:#fff;font-family:'DejaVu Sans Condensed','DejaVu Sans','Liberation Sans',sans-serif;">Recent</span>
<span class="t" style="left:13.2px;top:786.05px;font-size:9.1px;color:#fff;font-family:'DejaVu Sans Condensed','DejaVu Sans','Liberation Sans',sans-serif;">Old</span>
<span class="t" style="left:153.5px;top:773.25px;font-size:9.1px;color:#e8d400;font-family:'DejaVu Sans Condensed','DejaVu Sans','Liberation Sans',sans-serif;">15+</span>
<span class="t" style="left:188px;top:773.25px;font-size:9.1px;color:#e0a400;font-family:'DejaVu Sans Condensed','DejaVu Sans','Liberation Sans',sans-serif;">30+</span>
<span class="t" style="left:223px;top:773.25px;font-size:9.1px;color:#e08c00;font-family:'DejaVu Sans Condensed','DejaVu Sans','Liberation Sans',sans-serif;">45+</span>
<span class="t" style="left:153.5px;top:786.05px;font-size:9.1px;color:#dc7400;font-family:'DejaVu Sans Condensed','DejaVu Sans','Liberation Sans',sans-serif;">60+</span>
<span class="t" style="left:188px;top:786.05px;font-size:9.1px;color:#dc5c00;font-family:'DejaVu Sans Condensed','DejaVu Sans','Liberation Sans',sans-serif;">75+</span>
<span class="t" style="left:223px;top:786.05px;font-size:9.1px;color:#e43000;font-family:'DejaVu Sans Condensed','DejaVu Sans','Liberation Sans',sans-serif;">90+</span>
<svg style="position:absolute;left:50px;top:772px" width="100" height="30" viewBox="50 772 100 30" fill="none" stroke-width="1.2"><g stroke="#00e0e8"><circle cx="60.5" cy="780.4" r="4.2"/><path d="M58,780.4h5M82,780.4h7.5M108,780.4h5M110.5,777.9v5M132,780.4h7.4M135.7,776.6999999999999v7.4"/><circle cx="110.5" cy="780.4" r="4.2"/></g><g stroke="#f0e800"><circle cx="60.5" cy="793.5" r="4.2"/><path d="M58,793.5h5M82,793.5h7.5M108,793.5h5M110.5,791.0v5M132,793.5h7.4M135.7,789.8v7.4"/><circle cx="110.5" cy="793.5" r="4.2"/></g></svg>
<div class="pf" style="left:812px;top:8px;width:318px;height:318px"></div>
<div class="pf" style="left:812px;top:333px;width:318px;height:113px"></div>
<div class="pf" style="left:812px;top:453px;width:318px;height:348px"></div>
<div class="btn" style="left:819px;top:16px;width:56px;height:16px;background:#5a0000"></div>
<span class="t" style="top:17.05px;font-size:12.9px;color:#e4c4c4;font-family:'Liberation Serif','DejaVu Serif',serif;font-weight:bold;left:848.5px;transform:translateX(-50%);">STRIKE</span>
<div class="btn" style="left:883px;top:16px;width:56px;height:16px;background:#303030"></div>
<span class="t" style="top:17.05px;font-size:12.9px;color:#c8c8c8;font-family:'Liberation Serif','DejaVu Serif',serif;font-weight:bold;letter-spacing:0.6px;left:912.3px;transform:translateX(-50%);">NOISE</span>
<div class="btn" style="left:994px;top:16px;width:126px;height:16px;background:#303030"></div>
<span class="t" style="top:17.21px;font-size:12.1px;color:#fff;font-family:'DejaVu Sans','Liberation Sans',sans-serif;font-weight:bold;left:998px;">Bng 138°</span>
<span class="t" style="top:17.21px;font-size:12.1px;color:#00e000;font-family:'DejaVu Sans','Liberation Sans',sans-serif;font-weight:bold;right:20px;">401mi</span>
<div class="btn" style="left:821px;top:64px;width:80px;height:14px;background:#555"></div>
<span class="t" style="top:63.99px;font-size:11.6px;color:#e8e8e8;font-family:'DejaVu Sans','Liberation Sans',sans-serif;left:862px;transform:translateX(-50%);">Strikes/min</span>
<div class="btn" style="left:931px;top:64px;width:80px;height:14px;background:#555"></div>
<span class="t" style="top:63.99px;font-size:11.6px;color:#e8e8e8;font-family:'DejaVu Sans','Liberation Sans',sans-serif;left:972px;transform:translateX(-50%);">Close/min</span>
<div class="btn" style="left:1041px;top:64px;width:80px;height:14px;background:#555"></div>
<span class="t" style="top:63.99px;font-size:11.6px;color:#e8e8e8;font-family:'DejaVu Sans','Liberation Sans',sans-serif;left:1082px;transform:translateX(-50%);">Noises/min</span>
<span class="t" style="top:93.85px;font-size:27.3px;color:#fff;font-family:'DejaVu Sans','Liberation Sans',sans-serif;font-weight:bold;right:235px;">0</span>
<span class="t" style="top:93.85px;font-size:27.3px;color:#fff;font-family:'DejaVu Sans','Liberation Sans',sans-serif;font-weight:bold;right:125px;">0</span>
<span class="t" style="top:93.85px;font-size:27.3px;color:#c0c0c0;font-family:'DejaVu Sans','Liberation Sans',sans-serif;font-weight:bold;right:15px;">0</span>
<span class="t" style="top:130.64px;font-size:12.6px;color:#fff;font-family:'DejaVu Sans','Liberation Sans',sans-serif;right:235px;">Total Strikes</span>
<span class="t" style="top:130.64px;font-size:12.6px;color:#fff;font-family:'DejaVu Sans','Liberation Sans',sans-serif;right:125px;">Total Close</span>
<span class="t" style="top:130.64px;font-size:12.6px;color:#c8c8c8;font-family:'DejaVu Sans','Liberation Sans',sans-serif;right:15px;">Total Noises</span>
<span class="t" style="top:148.84px;font-size:12.6px;color:#fff;font-family:'DejaVu Sans','Liberation Sans',sans-serif;right:235px;">14</span>
<span class="t" style="top:148.84px;font-size:12.6px;color:#fff;font-family:'DejaVu Sans','Liberation Sans',sans-serif;right:125px;">0</span>
<span class="t" style="top:148.84px;font-size:12.6px;color:#d0d0d0;font-family:'DejaVu Sans','Liberation Sans',sans-serif;right:15px;">89</span>
<span class="t" style="top:202.64px;font-size:12.6px;color:#c8c8c8;font-family:'DejaVu Sans','Liberation Sans',sans-serif;letter-spacing:-0.17px;left:821px;">Lightning type distribution</span>
<div class="hl" style="left:821px;top:217px;width:303px"></div>
<span class="t" style="top:225.34px;font-size:12.3px;color:#fff;font-family:'DejaVu Sans Condensed','DejaVu Sans','Liberation Sans',sans-serif;font-weight:bold;left:821px;">Cloud-ground</span>
<span class="t" style="top:225.24px;font-size:12.6px;color:#d8d8d8;font-family:'DejaVu Sans','Liberation Sans',sans-serif;left:912.5px;">+</span>
<div class="bar" style="left:925px;top:227.7px"><i style="width:7px;background:#f00000"></i></div>
<span class="t" style="top:225.34px;font-size:12.3px;color:#fff;font-family:'DejaVu Sans Condensed','DejaVu Sans','Liberation Sans',sans-serif;font-weight:bold;letter-spacing:0.8px;left:979.8px;">14%</span>
<span class="t" style="top:224.06px;font-size:13.4px;color:#c8c8c8;font-family:'DejaVu Sans','Liberation Sans',sans-serif;font-weight:bold;left:1015.6px;">–</span>
<div class="bar" style="left:1028px;top:227.7px"><i style="width:14px;background:#88c8ff"></i></div>
<span class="t" style="top:225.34px;font-size:12.3px;color:#fff;font-family:'DejaVu Sans Condensed','DejaVu Sans','Liberation Sans',sans-serif;font-weight:bold;letter-spacing:0.8px;left:1082.5px;">29%</span>
<span class="t" style="top:249.24px;font-size:12.3px;color:#c8c8c8;font-family:'DejaVu Sans Condensed','DejaVu Sans','Liberation Sans',sans-serif;font-weight:bold;left:821px;">Count</span>
<span class="t" style="top:249.24px;font-size:12.3px;color:#fff;font-family:'DejaVu Sans Condensed','DejaVu Sans','Liberation Sans',sans-serif;font-weight:bold;left:925.5px;">2</span>
<span class="t" style="top:249.24px;font-size:12.3px;color:#fff;font-family:'DejaVu Sans Condensed','DejaVu Sans','Liberation Sans',sans-serif;font-weight:bold;left:1028px;">4</span>
<span class="t" style="top:279.34px;font-size:12.3px;color:#fff;font-family:'DejaVu Sans Condensed','DejaVu Sans','Liberation Sans',sans-serif;font-weight:bold;left:821px;">Intracloud</span>
<span class="t" style="top:279.24px;font-size:12.6px;color:#d8d8d8;font-family:'DejaVu Sans','Liberation Sans',sans-serif;left:912.5px;">+</span>
<div class="bar" style="left:925px;top:281.7px"><i style="width:11px;background:#e860b0"></i></div>
<span class="t" style="top:279.34px;font-size:12.3px;color:#fff;font-family:'DejaVu Sans Condensed','DejaVu Sans','Liberation Sans',sans-serif;font-weight:bold;letter-spacing:0.8px;left:979.8px;">21%</span>
<span class="t" style="top:278.06px;font-size:13.4px;color:#c8c8c8;font-family:'DejaVu Sans','Liberation Sans',sans-serif;font-weight:bold;left:1015.6px;">–</span>
<div class="bar" style="left:1028px;top:281.7px"><i style="width:18px;background:#00e800"></i></div>
<span class="t" style="top:279.34px;font-size:12.3px;color:#fff;font-family:'DejaVu Sans Condensed','DejaVu Sans','Liberation Sans',sans-serif;font-weight:bold;letter-spacing:0.8px;left:1082.5px;">36%</span>
<span class="t" style="top:303.24px;font-size:12.3px;color:#c8c8c8;font-family:'DejaVu Sans Condensed','DejaVu Sans','Liberation Sans',sans-serif;font-weight:bold;left:821px;">Count</span>
<span class="t" style="top:303.24px;font-size:12.3px;color:#fff;font-family:'DejaVu Sans Condensed','DejaVu Sans','Liberation Sans',sans-serif;font-weight:bold;left:925.5px;">3</span>
<span class="t" style="top:303.24px;font-size:12.3px;color:#fff;font-family:'DejaVu Sans Condensed','DejaVu Sans','Liberation Sans',sans-serif;font-weight:bold;left:1028px;">5</span>
<span class="t" style="top:340.27px;font-size:16.55px;color:#00e800;font-family:'DejaVu Sans','Liberation Sans',sans-serif;font-weight:bold;left:820.7px;">1/30/2026 6:04:52 PM</span>
<div class="hl" style="left:821px;top:358px;width:303px"></div>
<span class="t" style="top:375.64px;font-size:12.6px;color:#fff;font-family:'DejaVu Sans','Liberation Sans',sans-serif;left:821px;">Squelch</span>
<span class="t" style="top:375.64px;font-size:12.6px;color:#fff;font-family:'DejaVu Sans','Liberation Sans',sans-serif;left:909.5px;">0</span>
<span class="t" style="top:375.64px;font-size:12.6px;color:#fff;font-family:'DejaVu Sans','Liberation Sans',sans-serif;left:981px;">Upload</span>
<span class="t" style="top:375.64px;font-size:12.6px;color:#c0c0c0;font-family:'DejaVu Sans','Liberation Sans',sans-serif;left:1061px;">Disabled</span>
<span class="t" style="top:396.34px;font-size:12.6px;color:#fff;font-family:'DejaVu Sans','Liberation Sans',sans-serif;left:821px;">Persistence</span>
<span class="t" style="top:396.34px;font-size:12.6px;color:#fff;font-family:'DejaVu Sans','Liberation Sans',sans-serif;left:909.5px;">90 min</span>
<span class="t" style="top:396.34px;font-size:12.6px;color:#fff;font-family:'DejaVu Sans','Liberation Sans',sans-serif;left:981px;">Capture</span>
<span class="t" style="top:396.34px;font-size:12.6px;color:#00e000;font-family:'DejaVu Sans','Liberation Sans',sans-serif;left:1061px;">Active</span>
<span class="t" style="top:416.34px;font-size:12.6px;color:#fff;font-family:'DejaVu Sans','Liberation Sans',sans-serif;left:821px;">Range</span>
<span class="t" style="top:416.34px;font-size:12.6px;color:#fff;font-family:'DejaVu Sans','Liberation Sans',sans-serif;left:909.5px;">313 mi</span>
<span class="t" style="top:416.34px;font-size:12.6px;color:#fff;font-family:'DejaVu Sans','Liberation Sans',sans-serif;left:981px;">Receiver</span>
<span class="t" style="top:416.34px;font-size:12.6px;color:#00e000;font-family:'DejaVu Sans','Liberation Sans',sans-serif;left:1061px;">Enabled</span>
<span class="t" style="top:462.64px;font-size:12.6px;color:#b8b8b8;font-family:'DejaVu Sans','Liberation Sans',sans-serif;left:821px;">Uptime</span>
<span class="t" style="top:462.64px;font-size:12.6px;color:#fff;font-family:'DejaVu Sans','Liberation Sans',sans-serif;left:909.5px;">461:49</span>
<span class="t" style="top:462.64px;font-size:12.6px;color:#b8b8b8;font-family:'DejaVu Sans','Liberation Sans',sans-serif;left:981px;">Peak time</span>
<span class="t" style="top:462.64px;font-size:12.6px;color:#b8b8b8;font-family:'DejaVu Sans','Liberation Sans',sans-serif;left:1061px;">Plot</span>
<span class="t" style="top:485.84px;font-size:12.6px;color:#b8b8b8;font-family:'DejaVu Sans','Liberation Sans',sans-serif;left:821px;">Peak rate</span>
<span class="t" style="top:485.84px;font-size:12.6px;color:#fff;font-family:'DejaVu Sans','Liberation Sans',sans-serif;left:909.5px;">2/min</span>
<span class="t" style="top:485.84px;font-size:12.6px;color:#fff;font-family:'DejaVu Sans','Liberation Sans',sans-serif;left:981px;">4:12 AM</span>
<span class="t" style="top:485.84px;font-size:12.6px;color:#fff;font-family:'DejaVu Sans','Liberation Sans',sans-serif;left:1061px;">Strike</span>
<span class="t" style="top:515.64px;font-size:12.6px;color:#b8b8b8;font-family:'DejaVu Sans','Liberation Sans',sans-serif;left:822px;">Trend graph</span>
<span class="t" style="top:515.64px;font-size:12.6px;color:#fff;font-family:'DejaVu Sans','Liberation Sans',sans-serif;left:908.5px;">60 min</span>
<svg style="position:absolute;left:812px;top:530px" width="320" height="272" viewBox="812 530 320 272"><path d="M1088.5,542v235.5M822,777.5h267M822.5,775v4M866.9,775v4M911.2,775v4M955.6,775v4M1000.0,775v4M1044.3,775v4M1088.7,775v4M1085,738.3h4M1085,699.1h4M1085,659.9h4M1085,620.7h4M1085,581.5h4M1085,542.3h4" stroke="#d4d4d4" stroke-width="1" fill="none" shape-rendering="crispEdges"/><path d="M826.5,777 L828.5,769.5 H832.5 L834.5,777" stroke="#fff" stroke-width="1.1" fill="none"/><g font-family="'DejaVu Sans','Liberation Sans',sans-serif" font-size="11.6" fill="#d8d8d8"><text x="820.0" y="792.8">60</text><text x="864.4" y="792.8">50</text><text x="908.7" y="792.8">40</text><text x="953.1" y="792.8">30</text><text x="997.5" y="792.8">20</text><text x="1041.8" y="792.8">10</text><text x="1087.5" y="792.8">0</text><text x="1100" y="792.8">min</text><text x="1092" y="546.9">30</text><text x="1092" y="625.3">20</text><text x="1092" y="703.7">10</text></g></svg>
</body></html>
